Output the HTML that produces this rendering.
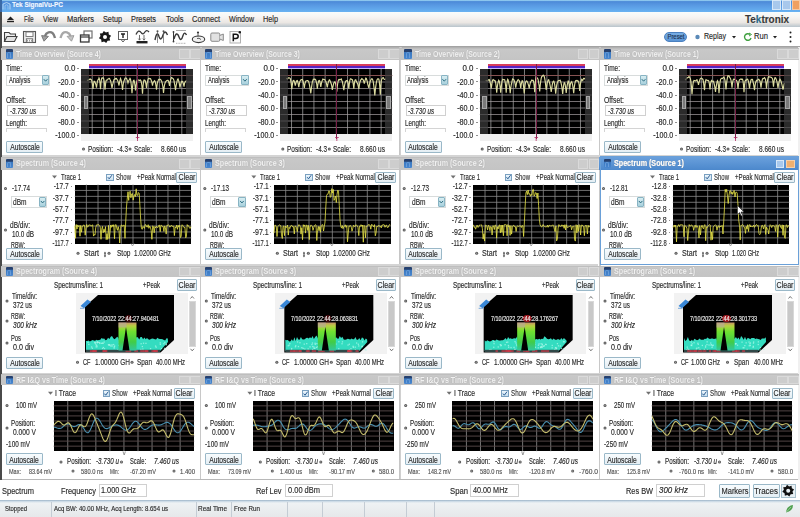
<!DOCTYPE html><html><head><meta charset="utf-8"><style>
html,body{margin:0;padding:0;}
body{width:800px;height:517px;overflow:hidden;position:relative;background:#fff;font-family:"Liberation Sans",sans-serif;}
.t{position:absolute;white-space:nowrap;-webkit-text-stroke:0.15px currentColor;}
.b{position:absolute;box-sizing:border-box;}
.i{font-style:italic;}
.bd{font-weight:bold;}
svg{position:absolute;left:0;top:0;}
#wrap{position:absolute;left:0;top:0;width:800px;height:517px;overflow:hidden;filter:blur(0.4px);}
</style></head><body><div id="wrap">
<div class="b" style="left:0.00px;top:0.00px;width:800.00px;height:11.60px;background:linear-gradient(#a8e0f8 0,#4c8ad8 1.6px,#5898e2 5px,#68b2f2 100%);"></div>
<div class="b" style="left:0.00px;top:0.00px;width:2.00px;height:12.00px;background:#3a6aa8;"></div>
<svg width="800" height="517"><path d="M3 9.5 V4 Q6.5 1 10 4 V9.5" fill="none" stroke="#c8e4f8" stroke-width="1" opacity="0.8"/><path d="M5 9.5 V5.5 Q6.5 4 8 5.5 V9.5" fill="none" stroke="#c8e4f8" stroke-width="0.8" opacity="0.6"/></svg>
<div class="t bd" style="left:12.00px;transform-origin:0 50%;top:-0.40px;font-size:8px;line-height:10.40px;color:#f4f8ff;transform:scaleX(0.808);">Tek SignalVu-PC</div>
<div class="b" style="left:772.00px;top:0.00px;width:9.00px;height:10.00px;background:#a8c8ec;border:1px solid #d8e8f8;"></div>
<div class="b" style="left:782.00px;top:0.00px;width:9.00px;height:10.00px;background:#a8c8ec;border:1px solid #d8e8f8;"></div>
<div class="b" style="left:792.00px;top:0.00px;width:8.00px;height:10.00px;background:#f0a060;border:1px solid #f8c8a0;"></div>
<div class="b" style="left:0.00px;top:11.60px;width:800.00px;height:15.90px;background:linear-gradient(#f8fcfc 0,#f6f4f2 35%,#ebe7e3 70%,#b8c4cc 100%);"></div>
<div class="b" style="left:0.00px;top:12.00px;width:2.00px;height:35.00px;background:#c8d0d8;"></div>
<svg width="800" height="517" style="position:absolute;left:0;top:0">
<path d="M7 20 L10.5 16.5 L14 20 Z" fill="#202020"/><rect x="7" y="20.8" width="7" height="1.4" fill="#202020"/>
</svg>
<div class="t " style="left:24.00px;transform-origin:0 50%;top:13.97px;font-size:8.5px;line-height:11.05px;color:#2a2a2a;transform:scaleX(0.708);">File</div>
<div class="t " style="left:43.00px;transform-origin:0 50%;top:13.97px;font-size:8.5px;line-height:11.05px;color:#2a2a2a;transform:scaleX(0.821);">View</div>
<div class="t " style="left:67.00px;transform-origin:0 50%;top:13.97px;font-size:8.5px;line-height:11.05px;color:#2a2a2a;transform:scaleX(0.879);">Markers</div>
<div class="t " style="left:103.00px;transform-origin:0 50%;top:13.97px;font-size:8.5px;line-height:11.05px;color:#2a2a2a;transform:scaleX(0.855);">Setup</div>
<div class="t " style="left:131.00px;transform-origin:0 50%;top:13.97px;font-size:8.5px;line-height:11.05px;color:#2a2a2a;transform:scaleX(0.867);">Presets</div>
<div class="t " style="left:165.50px;transform-origin:0 50%;top:13.97px;font-size:8.5px;line-height:11.05px;color:#2a2a2a;transform:scaleX(0.882);">Tools</div>
<div class="t " style="left:192.00px;transform-origin:0 50%;top:13.97px;font-size:8.5px;line-height:11.05px;color:#2a2a2a;transform:scaleX(0.884);">Connect</div>
<div class="t " style="left:228.50px;transform-origin:0 50%;top:13.97px;font-size:8.5px;line-height:11.05px;color:#2a2a2a;transform:scaleX(0.827);">Window</div>
<div class="t " style="left:263.00px;transform-origin:0 50%;top:13.97px;font-size:8.5px;line-height:11.05px;color:#2a2a2a;transform:scaleX(0.858);">Help</div>
<div class="t bd" style="left:745.00px;transform-origin:0 50%;top:13.30px;font-size:10px;line-height:13.00px;color:#3a3a3a;transform:scaleX(0.994);">Te<span style="color:#2a6a8a">k</span>tronix</div>
<div class="b" style="left:0.00px;top:27.00px;width:800.00px;height:19.00px;background:#ffffff;"></div>
<div class="b" style="left:0.00px;top:46.00px;width:800.00px;height:2.00px;background:linear-gradient(#9c9c9c,#b8b8b8);"></div>
<svg width="800" height="517" style="position:absolute;left:0;top:0" fill="none" stroke="#383838">
<path d="M4.5 41.5 V32.5 H9 L10.5 34 H15.5 V36" fill="#f0f0f0" stroke="#404040" stroke-width="1.1"/><path d="M4.5 41.5 L7 36.5 H17 L14.5 41.5 Z" fill="#e4e4e4" stroke="#404040" stroke-width="1.1"/>
<rect x="23.5" y="31.5" width="12" height="11" fill="#ececec" stroke="#585858" stroke-width="1.1"/><rect x="26" y="32" width="7" height="4.5" fill="#fff" stroke="#707070" stroke-width="0.9"/><rect x="26.3" y="38.8" width="6.4" height="3.5" fill="#fff" stroke="#585858" stroke-width="0.8"/><path d="M27.5 39.8 V41.5 M29.5 39.8 V41.5 M31.5 39.8 V41.5" stroke="#585858" stroke-width="0.6"/>
<path d="M55 38 Q53.5 31 48.5 32.3 Q46 33 45 36" stroke="#7e7e7e" stroke-width="2.4"/><path d="M41.6 35.6 L48.4 36.4 L44 41.2 Z" fill="#a0a0a0" stroke="#707070" stroke-width="0.9"/>
<path d="M60.5 38 Q62 31 67 32.3 Q69.5 33 70.5 36" stroke="#a8a8a8" stroke-width="2.4"/><path d="M73.9 35.6 L67.1 36.4 L71.5 41.2 Z" fill="#c4c4c4" stroke="#989898" stroke-width="0.9"/>
<rect x="84" y="31" width="8" height="7" stroke="#707070" stroke-width="1.2"/><rect x="80.5" y="35" width="8.5" height="7" fill="#fff" stroke-width="1.3"/><line x1="80.5" y1="37" x2="89" y2="37" stroke-width="1.2"/>
<polygon points="111.08,35.79 109.51,37.90 110.16,40.44 107.56,40.82 106.21,43.08 104.10,41.51 101.56,42.16 101.18,39.56 98.92,38.21 100.49,36.10 99.84,33.56 102.44,33.18 103.79,30.92 105.90,32.49 108.44,31.84 108.82,34.44" fill="#181818" stroke="none"/><circle cx="105" cy="37" r="2" fill="#fff" stroke="none"/>
<rect x="118.5" y="31.5" width="9" height="8" stroke="#606060" stroke-width="1"/><path d="M121 34 H125 M123 34 V38" stroke="#202020" stroke-width="1.4"/><path d="M121 39.5 L123 42 L125 39.5" stroke="#606060" stroke-width="1"/>
<path d="M136 34.5 Q138.5 28.5 141.5 33 Q143 35 144.5 32.5 Q146.5 29 149 32" stroke-width="1.3"/><path d="M139.5 35 V40 M144 35 V40" stroke="#606060" stroke-width="0.9"/><path d="M138.3 38.6 L139.5 40.2 L140.7 38.6 M142.8 38.6 L144 40.2 L145.2 38.6" stroke="#606060" stroke-width="0.8"/><rect x="136.5" y="41" width="11" height="2.4" fill="#202020" stroke="none"/>
<path d="M155 40 Q157 30 159 36.5 Q161 42 163 35 Q165 29 167.5 35" stroke-width="1.4"/><path d="M157.5 31.5 V43 M163.5 31.5 V43" stroke="#606060" stroke-width="0.7"/><circle cx="157.5" cy="31.3" r="1" fill="#505050" stroke="none"/><circle cx="163.5" cy="31.3" r="1" fill="#505050" stroke="none"/>
<path d="M174 39 Q176.5 30 179 37 Q181 42.5 183 35.5 Q184.5 31 186.5 35" stroke-width="1.4"/><path d="M173.5 32 V41.5" stroke-width="1"/><circle cx="173.5" cy="32" r="0.9" fill="#383838" stroke="none"/><circle cx="173.5" cy="41.5" r="0.9" fill="#383838" stroke="none"/><path d="M176 30.5 H186" stroke="#a0a0a0" stroke-width="0.9"/><path d="M176 43.3 H186" stroke="#a0a0a0" stroke-width="0.8" stroke-dasharray="1 0.6"/>
<ellipse cx="198.5" cy="39.3" rx="6.2" ry="3.3" stroke-width="1.1" fill="#f0f0f0"/><circle cx="198" cy="32.6" r="1.1" fill="#383838" stroke="none"/><path d="M198 33.5 V36.5 M197 38.5 Q199 37.5 201 39.5" stroke-width="0.8"/>
<rect x="210.8" y="33" width="9" height="8.3" rx="1.2" fill="#e2e2e2" stroke="#8a8a8a" stroke-width="1"/><path d="M219.8 35.5 L223.3 34 V40.5 L219.8 39" fill="#e2e2e2" stroke="#8a8a8a" stroke-width="1"/>
<rect x="230" y="31.5" width="10.5" height="11.5" fill="#fafafa" stroke="#a8a8a8" stroke-width="0.9"/><path d="M233.3 41.3 V34.2 H235.8 Q238.2 34.2 238.2 36.3 Q238.2 38.4 235.8 38.4 H233.3" stroke="#101010" stroke-width="1.5" fill="none"/>
<circle cx="239.8" cy="32.3" r="1.2" fill="#181818" stroke="none"/>
</svg>
<div class="b" style="left:664.00px;top:31.50px;width:23.00px;height:10.00px;background:linear-gradient(#78aee4,#5a94d4);border-radius:5px;border:1px solid #4a80c0;"></div>
<div class="t " style="left:575.50px;width:200px;text-align:center;transform-origin:50% 50%;top:32.57px;font-size:6.5px;line-height:8.45px;color:#1a3050;transform:scaleX(0.904);">Preset</div>
<svg width="800" height="517" style="position:absolute;left:0;top:0">
<circle cx="697.5" cy="37" r="2.2" fill="#5a8ab8"/>
<path d="M732 36 L736 36 L734 38.5 Z" fill="#202020"/><path d="M773 36 L777 36 L775 38.5 Z" fill="#202020"/>
<path d="M750 34.5 A3.3 3.3 0 1 0 751 38" fill="none" stroke="#40a040" stroke-width="1.4"/><path d="M749 33 L751.5 34.5 L749 36" fill="none" stroke="#40a040" stroke-width="1"/>
<circle cx="790.5" cy="32.5" r="1" fill="#202020"/><circle cx="790.5" cy="37" r="1" fill="#202020"/><circle cx="790.5" cy="41.5" r="1" fill="#202020"/>
</svg>
<div class="t " style="left:704.00px;transform-origin:0 50%;top:30.95px;font-size:9px;line-height:11.70px;color:#2a2a2a;transform:scaleX(0.785);">Replay</div>
<div class="t " style="left:754.00px;transform-origin:0 50%;top:30.95px;font-size:9px;line-height:11.70px;color:#2a2a2a;transform:scaleX(0.848);">Run</div>
<div class="b" style="left:0.00px;top:12.00px;width:1.60px;height:468.00px;background:#4a4a4a;"></div>
<div class="b" style="left:1.60px;top:47.00px;width:1.00px;height:433.00px;background:#b0b0b0;"></div>
<div class="b" style="left:0.00px;top:480.00px;width:1.00px;height:37.00px;background:#a8a8a8;"></div>
<div class="b" style="left:798.00px;top:47.00px;width:2.00px;height:433.00px;background:#f0f0f0;"></div>
<div class="b" style="left:199.80px;top:47.00px;width:2.40px;height:433.00px;background:linear-gradient(90deg,#c0c0c0,#d0d0d0 50%,#c4c4c4);"></div>
<div class="b" style="left:399.30px;top:47.00px;width:2.40px;height:433.00px;background:linear-gradient(90deg,#c0c0c0,#d0d0d0 50%,#c4c4c4);"></div>
<div class="b" style="left:598.80px;top:47.00px;width:2.40px;height:433.00px;background:linear-gradient(90deg,#c0c0c0,#d0d0d0 50%,#c4c4c4);"></div>
<div class="b" style="left:2.00px;top:60.00px;width:198.00px;height:95.00px;background:#ffffff;"></div>
<div class="b" style="left:0.50px;top:47.50px;width:200.00px;height:12.50px;background:linear-gradient(#b4b4b4 0,#c8c8c8 1px,#c4c4c4 100%);"></div>
<div class="b" style="left:5.50px;top:49.30px;width:7.50px;height:9.40px;background:linear-gradient(#26406e 0,#26406e 25%,#3a78c0 35%,#4a88d0 100%);border-radius:1px;"></div>
<div class="b" style="left:7.10px;top:52.10px;width:4.3px;height:5.90px;border:1px solid #78a8e0;border-bottom:none;border-radius:2px 2px 0 0;opacity:0.7"></div>
<div class="t bd" style="left:16.00px;transform-origin:0 50%;top:48.90px;font-size:9px;line-height:11.70px;color:#f2f2f2;text-shadow:0 0 1px #808080;transform:scaleX(0.773);">Time Overview (Source 4)</div>
<div class="b" style="left:179.00px;top:49.00px;width:10.50px;height:10.00px;background:#cdcdcd;border:1px solid #dadada;"></div>
<div class="b" style="left:190.00px;top:49.00px;width:10.50px;height:10.00px;background:#cdcdcd;border:1px solid #dadada;"></div>
<div class="t " style="left:6.00px;transform-origin:0 50%;top:63.87px;font-size:8.2px;line-height:10.66px;color:#2a2a2a;transform:scaleX(0.793);">Time:</div>
<div class="b" style="left:6.00px;top:74.50px;width:44.00px;height:11.00px;background:#fff;border:1px solid #d8dcdc;"></div>
<div class="b" style="left:42.00px;top:75.30px;width:7.20px;height:9.40px;background:linear-gradient(#d8eef2,#a8d0dc);border:1px solid #88b4c4;border-radius:1px;"></div>
<svg width="800" height="517"><path d="M43.80 79.20 L45.60 81.20 L47.40 79.20" fill="none" stroke="#2a6a80" stroke-width="1"/></svg>
<div class="t " style="left:8.50px;transform-origin:0 50%;top:76.07px;font-size:8.2px;line-height:10.66px;color:#2a2a2a;transform:scaleX(0.705);">Analysis</div>
<div class="t " style="left:6.00px;transform-origin:0 50%;top:95.57px;font-size:8.2px;line-height:10.66px;color:#2a2a2a;transform:scaleX(0.834);">Offset:</div>
<div class="b" style="left:7.00px;top:104.80px;width:40.50px;height:11.40px;background:#fff;border:1px solid #d0d0d0;"></div>
<div class="t i" style="left:9.50px;transform-origin:0 50%;top:106.67px;font-size:8.2px;line-height:10.66px;color:#2a2a2a;transform:scaleX(0.762);">-3.730 us</div>
<div class="t " style="left:6.00px;transform-origin:0 50%;top:119.27px;font-size:8.2px;line-height:10.66px;color:#2a2a2a;transform:scaleX(0.768);">Length:</div>
<div class="b" style="left:6.00px;top:128.00px;width:41.00px;height:4.00px;background:#fff;border:1px solid #d4d4d4;border-bottom:none;"></div>
<div class="b" style="left:6.00px;top:140.50px;width:37.00px;height:12.00px;background:linear-gradient(#f8fcfe,#e4eef4);border:1px solid #9ab8c8;border-radius:1px;"></div>
<div class="t " style="left:-75.50px;width:200px;text-align:center;transform-origin:50% 50%;top:142.77px;font-size:8.2px;line-height:10.66px;color:#2a2a2a;transform:scaleX(0.820);">Autoscale</div>
<div class="t " style="right:725.00px;transform-origin:100% 50%;top:64.07px;font-size:8.2px;line-height:10.66px;color:#2a2a2a;transform:scaleX(0.966);">0.0</div>
<div class="b" style="left:77.00px;top:68.00px;width:2.00px;height:1.00px;background:#909090;"></div>
<div class="t " style="right:725.00px;transform-origin:100% 50%;top:77.52px;font-size:8.2px;line-height:10.66px;color:#2a2a2a;transform:scaleX(0.884);">-20.0</div>
<div class="b" style="left:77.00px;top:81.45px;width:2.00px;height:1.00px;background:#909090;"></div>
<div class="t " style="right:725.00px;transform-origin:100% 50%;top:90.97px;font-size:8.2px;line-height:10.66px;color:#2a2a2a;transform:scaleX(0.884);">-40.0</div>
<div class="b" style="left:77.00px;top:94.90px;width:2.00px;height:1.00px;background:#909090;"></div>
<div class="t " style="right:725.00px;transform-origin:100% 50%;top:104.42px;font-size:8.2px;line-height:10.66px;color:#2a2a2a;transform:scaleX(0.884);">-60.0</div>
<div class="b" style="left:77.00px;top:108.35px;width:2.00px;height:1.00px;background:#909090;"></div>
<div class="t " style="right:725.00px;transform-origin:100% 50%;top:117.87px;font-size:8.2px;line-height:10.66px;color:#2a2a2a;transform:scaleX(0.884);">-80.0</div>
<div class="b" style="left:77.00px;top:121.80px;width:2.00px;height:1.00px;background:#909090;"></div>
<div class="t " style="right:725.00px;transform-origin:100% 50%;top:131.32px;font-size:8.2px;line-height:10.66px;color:#2a2a2a;transform:scaleX(0.861);">-100.0</div>
<div class="b" style="left:77.00px;top:135.25px;width:2.00px;height:1.00px;background:#909090;"></div>
<div class="b" style="left:81.00px;top:69.00px;width:112.00px;height:65.00px;background:#000;"></div>
<div class="b" style="left:81.00px;top:134.00px;width:112.00px;height:7.00px;background:#f0f0f0;"></div>
<svg width="800" height="517"><line x1="92.20" y1="69" x2="92.20" y2="134" stroke="#b0b0b0" stroke-width="0.7"/><line x1="103.40" y1="69" x2="103.40" y2="134" stroke="#b0b0b0" stroke-width="0.7"/><line x1="114.60" y1="69" x2="114.60" y2="134" stroke="#b0b0b0" stroke-width="0.7"/><line x1="125.80" y1="69" x2="125.80" y2="134" stroke="#b0b0b0" stroke-width="0.7"/><line x1="137.00" y1="69" x2="137.00" y2="134" stroke="#b0b0b0" stroke-width="0.7"/><line x1="148.20" y1="69" x2="148.20" y2="134" stroke="#b0b0b0" stroke-width="0.7"/><line x1="159.40" y1="69" x2="159.40" y2="134" stroke="#b0b0b0" stroke-width="0.7"/><line x1="170.60" y1="69" x2="170.60" y2="134" stroke="#b0b0b0" stroke-width="0.7"/><line x1="181.80" y1="69" x2="181.80" y2="134" stroke="#b0b0b0" stroke-width="0.7"/><line x1="81" y1="75.50" x2="193" y2="75.50" stroke="#a8a0a4" stroke-width="0.7"/><line x1="81" y1="82.00" x2="193" y2="82.00" stroke="#a8a0a4" stroke-width="0.7"/><line x1="81" y1="88.50" x2="193" y2="88.50" stroke="#a8a0a4" stroke-width="0.7"/><line x1="81" y1="95.00" x2="193" y2="95.00" stroke="#a8a0a4" stroke-width="0.7"/><line x1="81" y1="101.50" x2="193" y2="101.50" stroke="#a8a0a4" stroke-width="0.7"/><line x1="81" y1="108.00" x2="193" y2="108.00" stroke="#a8a0a4" stroke-width="0.7"/><line x1="81" y1="114.50" x2="193" y2="114.50" stroke="#a8a0a4" stroke-width="0.7"/><line x1="81" y1="121.00" x2="193" y2="121.00" stroke="#a8a0a4" stroke-width="0.7"/><line x1="81" y1="127.50" x2="193" y2="127.50" stroke="#a8a0a4" stroke-width="0.7"/><line x1="81" y1="75.5" x2="193" y2="75.5" stroke="#8a4a4a" stroke-width="0.8"/><clipPath id="c0_0"><rect x="81.0" y="69" width="112.0" height="65"/></clipPath><polyline clip-path="url(#c0_0)" points="87.0,80.1 87.5,80.4 88.0,80.4 88.5,79.7 89.0,79.6 89.5,79.2 90.0,79.5 90.5,79.1 91.0,79.6 91.5,79.9 92.0,81.9 92.5,84.6 93.0,89.0 93.5,84.5 94.0,81.3 94.5,81.3 95.0,82.1 95.5,83.4 96.0,85.2 96.5,87.6 97.0,84.0 97.5,81.1 98.0,79.8 98.5,79.6 99.0,77.9 99.5,79.1 100.0,83.1 100.5,89.2 101.0,82.9 101.5,79.0 102.0,77.9 102.5,77.9 103.0,78.2 103.5,78.0 104.0,80.0 104.5,84.1 105.0,89.8 105.5,84.5 106.0,81.0 106.5,80.0 107.0,80.0 107.5,79.9 108.0,78.9 108.5,78.7 109.0,78.4 109.5,78.5 110.0,79.6 110.5,80.5 111.0,82.3 111.5,85.3 112.0,87.8 112.5,85.1 113.0,83.3 113.5,81.3 114.0,79.6 114.5,79.1 115.0,79.3 115.5,78.5 116.0,78.6 116.5,78.5 117.0,79.7 117.5,80.0 118.0,81.6 118.5,83.3 119.0,85.5 119.5,82.5 120.0,80.1 120.5,78.5 121.0,79.8 121.5,81.6 122.0,85.3 122.5,90.0 123.0,86.0 123.5,82.7 124.0,81.0 124.5,79.6 125.0,78.3 125.5,78.1 126.0,78.0 126.5,78.4 127.0,79.7 127.5,81.0 128.0,82.9 128.5,81.2 129.0,80.2 129.5,79.5 130.0,78.5 130.5,79.3 131.0,82.4 131.5,87.3 132.0,93.1 132.5,87.4 133.0,83.4 133.5,80.4 134.0,80.2 134.5,82.1 135.0,85.3 135.5,90.4 136.0,85.9 136.5,83.0 137.0,80.9 137.5,79.8 138.0,79.8 138.5,80.1 139.0,80.3 139.5,80.3 140.0,80.1 140.5,79.9 141.0,80.9 141.5,83.0 142.0,86.6 142.5,93.6 143.0,86.3 143.5,82.2 144.0,80.0 144.5,80.0 145.0,80.3 145.5,81.7 146.0,84.3 146.5,87.9 147.0,83.7 147.5,81.9 148.0,79.5 148.5,78.4 149.0,78.3 149.5,78.7 150.0,78.8 150.5,78.7 151.0,79.8 151.5,81.0 152.0,82.8 152.5,85.7 153.0,82.9 153.5,82.0 154.0,81.3 154.5,80.7 155.0,81.3 155.5,82.9 156.0,85.8 156.5,89.7 157.0,85.4 157.5,82.2 158.0,81.0 158.5,79.6 159.0,79.2 159.5,79.8 160.0,79.2 160.5,79.5 161.0,80.0 161.5,81.0 162.0,82.4 162.5,84.5 163.0,87.4 163.5,93.0 164.0,88.2 164.5,85.1 165.0,83.2 165.5,81.9 166.0,81.4 166.5,80.7 167.0,80.5 167.5,80.4 168.0,80.3 168.5,81.1 169.0,83.0 169.5,85.8 170.0,82.6 170.5,80.4 171.0,78.6 171.5,77.6 172.0,77.8 172.5,78.2 173.0,78.4 173.5,79.2 174.0,80.6 174.5,83.7 175.0,86.5 175.5,90.1 176.0,86.2 176.5,83.8 177.0,81.5 177.5,79.4 178.0,78.8 178.5,80.2 179.0,82.0 179.5,84.6 180.0,87.6 180.5,84.9 181.0,83.2 181.5,81.9 182.0,81.3 182.5,81.5 183.0,82.6 183.5,84.2 184.0,86.6 184.5,83.4 185.0,82.1 185.5,81.7 186.0,81.0 186.5,80.4" fill="none" stroke="#dcdca0" stroke-width="1.15"/></svg>
<div class="b" style="left:81.00px;top:69.00px;width:8.00px;height:65.00px;background:rgba(60,60,60,0.72);"></div>
<div class="b" style="left:186.00px;top:69.00px;width:7.00px;height:65.00px;background:rgba(60,60,60,0.72);"></div>
<div class="b" style="left:83.50px;top:96.00px;width:4.50px;height:13.00px;background:#7a7a7a;border:1px solid #a8a8a8;"></div>
<div class="b" style="left:187.00px;top:96.00px;width:4.50px;height:13.00px;background:#7a7a7a;border:1px solid #a8a8a8;"></div>
<div class="b" style="left:89.00px;top:63.80px;width:97.00px;height:2.20px;background:#d83c5c;"></div>
<div class="b" style="left:89.00px;top:66.00px;width:97.00px;height:1.80px;background:#5424c4;"></div>
<div class="b" style="left:89.00px;top:67.80px;width:97.00px;height:1.20px;background:#c8b8ff;"></div>
<div class="b" style="left:137.00px;top:64.00px;width:1.00px;height:75.00px;background:#7a2048;"></div>
<svg width="800" height="517"><path d="M135.8 137.5 H139.4 M137.5 137.5 V141" stroke="#b02a62" stroke-width="0.8" fill="none"/></svg>
<div class="t " style="left:88.00px;transform-origin:0 50%;top:144.57px;font-size:8.2px;line-height:10.66px;color:#2a2a2a;transform:scaleX(0.796);">Position:</div>
<div class="t " style="left:117.00px;transform-origin:0 50%;top:144.57px;font-size:8.2px;line-height:10.66px;color:#2a2a2a;transform:scaleX(0.780);">-4.3</div>
<div class="t " style="left:134.00px;transform-origin:0 50%;top:144.57px;font-size:8.2px;line-height:10.66px;color:#2a2a2a;transform:scaleX(0.791);">Scale:</div>
<div class="t " style="left:161.00px;transform-origin:0 50%;top:144.57px;font-size:8.2px;line-height:10.66px;color:#2a2a2a;transform:scaleX(0.796);">8.660 us</div>
<div class="b" style="left:201.33px;top:60.00px;width:198.00px;height:95.00px;background:#ffffff;"></div>
<div class="b" style="left:199.83px;top:47.50px;width:200.00px;height:12.50px;background:linear-gradient(#b4b4b4 0,#c8c8c8 1px,#c4c4c4 100%);"></div>
<div class="b" style="left:204.83px;top:49.30px;width:7.50px;height:9.40px;background:linear-gradient(#26406e 0,#26406e 25%,#3a78c0 35%,#4a88d0 100%);border-radius:1px;"></div>
<div class="b" style="left:206.43px;top:52.10px;width:4.3px;height:5.90px;border:1px solid #78a8e0;border-bottom:none;border-radius:2px 2px 0 0;opacity:0.7"></div>
<div class="t bd" style="left:215.33px;transform-origin:0 50%;top:48.90px;font-size:9px;line-height:11.70px;color:#f2f2f2;text-shadow:0 0 1px #808080;transform:scaleX(0.773);">Time Overview (Source 3)</div>
<div class="b" style="left:378.33px;top:49.00px;width:10.50px;height:10.00px;background:#cdcdcd;border:1px solid #dadada;"></div>
<div class="b" style="left:389.33px;top:49.00px;width:10.50px;height:10.00px;background:#cdcdcd;border:1px solid #dadada;"></div>
<div class="t " style="left:205.33px;transform-origin:0 50%;top:63.87px;font-size:8.2px;line-height:10.66px;color:#2a2a2a;transform:scaleX(0.793);">Time:</div>
<div class="b" style="left:205.33px;top:74.50px;width:44.00px;height:11.00px;background:#fff;border:1px solid #d8dcdc;"></div>
<div class="b" style="left:241.33px;top:75.30px;width:7.20px;height:9.40px;background:linear-gradient(#d8eef2,#a8d0dc);border:1px solid #88b4c4;border-radius:1px;"></div>
<svg width="800" height="517"><path d="M243.13 79.20 L244.93 81.20 L246.73 79.20" fill="none" stroke="#2a6a80" stroke-width="1"/></svg>
<div class="t " style="left:207.83px;transform-origin:0 50%;top:76.07px;font-size:8.2px;line-height:10.66px;color:#2a2a2a;transform:scaleX(0.705);">Analysis</div>
<div class="t " style="left:205.33px;transform-origin:0 50%;top:95.57px;font-size:8.2px;line-height:10.66px;color:#2a2a2a;transform:scaleX(0.834);">Offset:</div>
<div class="b" style="left:206.33px;top:104.80px;width:40.50px;height:11.40px;background:#fff;border:1px solid #d0d0d0;"></div>
<div class="t i" style="left:208.83px;transform-origin:0 50%;top:106.67px;font-size:8.2px;line-height:10.66px;color:#2a2a2a;transform:scaleX(0.762);">-3.730 us</div>
<div class="t " style="left:205.33px;transform-origin:0 50%;top:119.27px;font-size:8.2px;line-height:10.66px;color:#2a2a2a;transform:scaleX(0.768);">Length:</div>
<div class="b" style="left:205.33px;top:128.00px;width:41.00px;height:4.00px;background:#fff;border:1px solid #d4d4d4;border-bottom:none;"></div>
<div class="b" style="left:205.33px;top:140.50px;width:37.00px;height:12.00px;background:linear-gradient(#f8fcfe,#e4eef4);border:1px solid #9ab8c8;border-radius:1px;"></div>
<div class="t " style="left:123.83px;width:200px;text-align:center;transform-origin:50% 50%;top:142.77px;font-size:8.2px;line-height:10.66px;color:#2a2a2a;transform:scaleX(0.820);">Autoscale</div>
<div class="t " style="right:525.67px;transform-origin:100% 50%;top:64.07px;font-size:8.2px;line-height:10.66px;color:#2a2a2a;transform:scaleX(0.966);">0.0</div>
<div class="b" style="left:276.33px;top:68.00px;width:2.00px;height:1.00px;background:#909090;"></div>
<div class="t " style="right:525.67px;transform-origin:100% 50%;top:77.52px;font-size:8.2px;line-height:10.66px;color:#2a2a2a;transform:scaleX(0.884);">-20.0</div>
<div class="b" style="left:276.33px;top:81.45px;width:2.00px;height:1.00px;background:#909090;"></div>
<div class="t " style="right:525.67px;transform-origin:100% 50%;top:90.97px;font-size:8.2px;line-height:10.66px;color:#2a2a2a;transform:scaleX(0.884);">-40.0</div>
<div class="b" style="left:276.33px;top:94.90px;width:2.00px;height:1.00px;background:#909090;"></div>
<div class="t " style="right:525.67px;transform-origin:100% 50%;top:104.42px;font-size:8.2px;line-height:10.66px;color:#2a2a2a;transform:scaleX(0.884);">-60.0</div>
<div class="b" style="left:276.33px;top:108.35px;width:2.00px;height:1.00px;background:#909090;"></div>
<div class="t " style="right:525.67px;transform-origin:100% 50%;top:117.87px;font-size:8.2px;line-height:10.66px;color:#2a2a2a;transform:scaleX(0.884);">-80.0</div>
<div class="b" style="left:276.33px;top:121.80px;width:2.00px;height:1.00px;background:#909090;"></div>
<div class="t " style="right:525.67px;transform-origin:100% 50%;top:131.32px;font-size:8.2px;line-height:10.66px;color:#2a2a2a;transform:scaleX(0.861);">-100.0</div>
<div class="b" style="left:276.33px;top:135.25px;width:2.00px;height:1.00px;background:#909090;"></div>
<div class="b" style="left:280.33px;top:69.00px;width:112.00px;height:65.00px;background:#000;"></div>
<div class="b" style="left:280.33px;top:134.00px;width:112.00px;height:7.00px;background:#f0f0f0;"></div>
<svg width="800" height="517"><line x1="291.53" y1="69" x2="291.53" y2="134" stroke="#b0b0b0" stroke-width="0.7"/><line x1="302.73" y1="69" x2="302.73" y2="134" stroke="#b0b0b0" stroke-width="0.7"/><line x1="313.93" y1="69" x2="313.93" y2="134" stroke="#b0b0b0" stroke-width="0.7"/><line x1="325.13" y1="69" x2="325.13" y2="134" stroke="#b0b0b0" stroke-width="0.7"/><line x1="336.33" y1="69" x2="336.33" y2="134" stroke="#b0b0b0" stroke-width="0.7"/><line x1="347.53" y1="69" x2="347.53" y2="134" stroke="#b0b0b0" stroke-width="0.7"/><line x1="358.73" y1="69" x2="358.73" y2="134" stroke="#b0b0b0" stroke-width="0.7"/><line x1="369.93" y1="69" x2="369.93" y2="134" stroke="#b0b0b0" stroke-width="0.7"/><line x1="381.13" y1="69" x2="381.13" y2="134" stroke="#b0b0b0" stroke-width="0.7"/><line x1="280.33000000000004" y1="75.50" x2="392.33000000000004" y2="75.50" stroke="#a8a0a4" stroke-width="0.7"/><line x1="280.33000000000004" y1="82.00" x2="392.33000000000004" y2="82.00" stroke="#a8a0a4" stroke-width="0.7"/><line x1="280.33000000000004" y1="88.50" x2="392.33000000000004" y2="88.50" stroke="#a8a0a4" stroke-width="0.7"/><line x1="280.33000000000004" y1="95.00" x2="392.33000000000004" y2="95.00" stroke="#a8a0a4" stroke-width="0.7"/><line x1="280.33000000000004" y1="101.50" x2="392.33000000000004" y2="101.50" stroke="#a8a0a4" stroke-width="0.7"/><line x1="280.33000000000004" y1="108.00" x2="392.33000000000004" y2="108.00" stroke="#a8a0a4" stroke-width="0.7"/><line x1="280.33000000000004" y1="114.50" x2="392.33000000000004" y2="114.50" stroke="#a8a0a4" stroke-width="0.7"/><line x1="280.33000000000004" y1="121.00" x2="392.33000000000004" y2="121.00" stroke="#a8a0a4" stroke-width="0.7"/><line x1="280.33000000000004" y1="127.50" x2="392.33000000000004" y2="127.50" stroke="#a8a0a4" stroke-width="0.7"/><line x1="280.33000000000004" y1="75.5" x2="392.33000000000004" y2="75.5" stroke="#8a4a4a" stroke-width="0.8"/><clipPath id="c0_1"><rect x="280.3" y="69" width="112.0" height="65"/></clipPath><polyline clip-path="url(#c0_1)" points="286.3,78.8 286.8,78.5 287.3,79.2 287.8,78.7 288.3,77.8 288.8,77.9 289.3,77.8 289.8,78.1 290.3,78.6 290.8,81.0 291.3,84.1 291.8,89.3 292.3,85.1 292.8,82.0 293.3,80.6 293.8,80.5 294.3,81.2 294.8,83.3 295.3,85.6 295.8,83.6 296.3,81.6 296.8,80.8 297.3,80.6 297.8,82.0 298.3,84.3 298.8,87.2 299.3,84.2 299.8,81.7 300.3,80.8 300.8,80.0 301.3,79.6 301.8,79.9 302.3,79.5 302.8,80.5 303.3,82.5 303.8,84.8 304.3,87.8 304.8,84.3 305.3,82.5 305.8,81.1 306.3,80.8 306.8,80.7 307.3,80.6 307.8,80.6 308.3,81.0 308.8,82.1 309.3,84.1 309.8,86.9 310.3,89.9 310.8,93.3 311.3,89.0 311.8,85.4 312.3,82.1 312.8,80.6 313.3,79.3 313.8,79.7 314.3,79.5 314.8,79.0 315.3,79.3 315.8,80.1 316.3,82.0 316.8,84.5 317.3,88.6 317.8,84.8 318.3,82.5 318.8,80.7 319.3,80.5 319.8,81.3 320.3,84.1 320.8,86.9 321.3,83.8 321.8,81.7 322.3,80.4 322.8,79.1 323.3,79.5 323.8,79.3 324.3,79.5 324.8,79.5 325.3,80.8 325.8,81.4 326.3,82.8 326.8,85.1 327.3,87.4 327.8,84.4 328.3,82.2 328.8,80.9 329.3,79.8 329.8,80.2 330.3,81.4 330.8,82.7 331.3,84.0 331.8,86.3 332.3,89.8 332.8,87.4 333.3,85.1 333.8,83.0 334.3,82.3 334.8,81.9 335.3,82.6 335.8,84.6 336.3,87.4 336.8,91.8 337.3,86.2 337.8,82.8 338.3,80.7 338.8,79.5 339.3,79.4 339.8,80.0 340.3,79.5 340.8,79.4 341.3,79.0 341.8,80.5 342.3,81.5 342.8,84.1 343.3,87.0 343.8,90.2 344.3,86.9 344.8,84.1 345.3,82.3 345.8,81.1 346.3,80.7 346.8,80.8 347.3,80.5 347.8,82.0 348.3,84.5 348.8,88.6 349.3,83.8 349.8,80.6 350.3,79.1 350.8,78.7 351.3,79.2 351.8,79.7 352.3,79.6 352.8,81.4 353.3,84.3 353.8,88.6 354.3,83.6 354.8,80.9 355.3,79.7 355.8,79.7 356.3,81.3 356.8,82.2 357.3,83.2 357.8,84.3 358.3,86.3 358.8,88.8 359.3,85.7 359.8,82.6 360.3,81.2 360.8,79.7 361.3,79.5 361.8,78.6 362.3,79.0 362.8,79.4 363.3,80.0 363.8,81.6 364.3,83.5 364.8,81.3 365.3,79.8 365.8,78.2 366.3,78.5 366.8,80.0 367.3,81.6 367.8,84.3 368.3,86.1 368.8,87.8 369.3,85.3 369.8,82.8 370.3,81.3 370.8,80.0 371.3,79.3 371.8,78.7 372.3,78.9 372.8,80.1 373.3,82.1 373.8,85.8 374.3,90.0 374.8,95.5 375.3,90.1 375.8,86.1 376.3,83.0 376.8,80.6 377.3,79.4 377.8,78.7 378.3,78.7 378.8,79.1 379.3,81.6 379.8,86.9 380.3,94.6 380.8,85.9 381.3,80.9 381.8,79.0 382.3,78.1 382.8,77.9 383.3,77.7 383.8,78.8 384.3,79.4 384.8,79.2 385.3,79.0 385.8,79.2" fill="none" stroke="#dcdca0" stroke-width="1.15"/></svg>
<div class="b" style="left:280.33px;top:69.00px;width:8.00px;height:65.00px;background:rgba(60,60,60,0.72);"></div>
<div class="b" style="left:385.33px;top:69.00px;width:7.00px;height:65.00px;background:rgba(60,60,60,0.72);"></div>
<div class="b" style="left:282.83px;top:96.00px;width:4.50px;height:13.00px;background:#7a7a7a;border:1px solid #a8a8a8;"></div>
<div class="b" style="left:386.33px;top:96.00px;width:4.50px;height:13.00px;background:#7a7a7a;border:1px solid #a8a8a8;"></div>
<div class="b" style="left:288.33px;top:63.80px;width:97.00px;height:2.20px;background:#d83c5c;"></div>
<div class="b" style="left:288.33px;top:66.00px;width:97.00px;height:1.80px;background:#5424c4;"></div>
<div class="b" style="left:288.33px;top:67.80px;width:97.00px;height:1.20px;background:#c8b8ff;"></div>
<div class="b" style="left:336.33px;top:64.00px;width:1.00px;height:75.00px;background:#7a2048;"></div>
<svg width="800" height="517"><path d="M335.13 137.5 H338.73 M336.83000000000004 137.5 V141" stroke="#b02a62" stroke-width="0.8" fill="none"/></svg>
<div class="t " style="left:287.33px;transform-origin:0 50%;top:144.57px;font-size:8.2px;line-height:10.66px;color:#2a2a2a;transform:scaleX(0.796);">Position:</div>
<div class="t " style="left:316.33px;transform-origin:0 50%;top:144.57px;font-size:8.2px;line-height:10.66px;color:#2a2a2a;transform:scaleX(0.780);">-4.3</div>
<div class="t " style="left:333.33px;transform-origin:0 50%;top:144.57px;font-size:8.2px;line-height:10.66px;color:#2a2a2a;transform:scaleX(0.791);">Scale:</div>
<div class="t " style="left:360.33px;transform-origin:0 50%;top:144.57px;font-size:8.2px;line-height:10.66px;color:#2a2a2a;transform:scaleX(0.796);">8.660 us</div>
<div class="b" style="left:400.67px;top:60.00px;width:198.00px;height:95.00px;background:#ffffff;"></div>
<div class="b" style="left:399.17px;top:47.50px;width:200.00px;height:12.50px;background:linear-gradient(#b4b4b4 0,#c8c8c8 1px,#c4c4c4 100%);"></div>
<div class="b" style="left:404.17px;top:49.30px;width:7.50px;height:9.40px;background:linear-gradient(#26406e 0,#26406e 25%,#3a78c0 35%,#4a88d0 100%);border-radius:1px;"></div>
<div class="b" style="left:405.77px;top:52.10px;width:4.3px;height:5.90px;border:1px solid #78a8e0;border-bottom:none;border-radius:2px 2px 0 0;opacity:0.7"></div>
<div class="t bd" style="left:414.67px;transform-origin:0 50%;top:48.90px;font-size:9px;line-height:11.70px;color:#f2f2f2;text-shadow:0 0 1px #808080;transform:scaleX(0.773);">Time Overview (Source 2)</div>
<div class="b" style="left:577.67px;top:49.00px;width:10.50px;height:10.00px;background:#cdcdcd;border:1px solid #dadada;"></div>
<div class="b" style="left:588.67px;top:49.00px;width:10.50px;height:10.00px;background:#cdcdcd;border:1px solid #dadada;"></div>
<div class="t " style="left:404.67px;transform-origin:0 50%;top:63.87px;font-size:8.2px;line-height:10.66px;color:#2a2a2a;transform:scaleX(0.793);">Time:</div>
<div class="b" style="left:404.67px;top:74.50px;width:44.00px;height:11.00px;background:#fff;border:1px solid #d8dcdc;"></div>
<div class="b" style="left:440.67px;top:75.30px;width:7.20px;height:9.40px;background:linear-gradient(#d8eef2,#a8d0dc);border:1px solid #88b4c4;border-radius:1px;"></div>
<svg width="800" height="517"><path d="M442.47 79.20 L444.27 81.20 L446.07 79.20" fill="none" stroke="#2a6a80" stroke-width="1"/></svg>
<div class="t " style="left:407.17px;transform-origin:0 50%;top:76.07px;font-size:8.2px;line-height:10.66px;color:#2a2a2a;transform:scaleX(0.705);">Analysis</div>
<div class="t " style="left:404.67px;transform-origin:0 50%;top:95.57px;font-size:8.2px;line-height:10.66px;color:#2a2a2a;transform:scaleX(0.834);">Offset:</div>
<div class="b" style="left:405.67px;top:104.80px;width:40.50px;height:11.40px;background:#fff;border:1px solid #d0d0d0;"></div>
<div class="t i" style="left:408.17px;transform-origin:0 50%;top:106.67px;font-size:8.2px;line-height:10.66px;color:#2a2a2a;transform:scaleX(0.762);">-3.730 us</div>
<div class="t " style="left:404.67px;transform-origin:0 50%;top:119.27px;font-size:8.2px;line-height:10.66px;color:#2a2a2a;transform:scaleX(0.768);">Length:</div>
<div class="b" style="left:404.67px;top:128.00px;width:41.00px;height:4.00px;background:#fff;border:1px solid #d4d4d4;border-bottom:none;"></div>
<div class="b" style="left:404.67px;top:140.50px;width:37.00px;height:12.00px;background:linear-gradient(#f8fcfe,#e4eef4);border:1px solid #9ab8c8;border-radius:1px;"></div>
<div class="t " style="left:323.17px;width:200px;text-align:center;transform-origin:50% 50%;top:142.77px;font-size:8.2px;line-height:10.66px;color:#2a2a2a;transform:scaleX(0.820);">Autoscale</div>
<div class="t " style="right:326.33px;transform-origin:100% 50%;top:64.07px;font-size:8.2px;line-height:10.66px;color:#2a2a2a;transform:scaleX(0.966);">0.0</div>
<div class="b" style="left:475.67px;top:68.00px;width:2.00px;height:1.00px;background:#909090;"></div>
<div class="t " style="right:326.33px;transform-origin:100% 50%;top:77.52px;font-size:8.2px;line-height:10.66px;color:#2a2a2a;transform:scaleX(0.884);">-20.0</div>
<div class="b" style="left:475.67px;top:81.45px;width:2.00px;height:1.00px;background:#909090;"></div>
<div class="t " style="right:326.33px;transform-origin:100% 50%;top:90.97px;font-size:8.2px;line-height:10.66px;color:#2a2a2a;transform:scaleX(0.884);">-40.0</div>
<div class="b" style="left:475.67px;top:94.90px;width:2.00px;height:1.00px;background:#909090;"></div>
<div class="t " style="right:326.33px;transform-origin:100% 50%;top:104.42px;font-size:8.2px;line-height:10.66px;color:#2a2a2a;transform:scaleX(0.884);">-60.0</div>
<div class="b" style="left:475.67px;top:108.35px;width:2.00px;height:1.00px;background:#909090;"></div>
<div class="t " style="right:326.33px;transform-origin:100% 50%;top:117.87px;font-size:8.2px;line-height:10.66px;color:#2a2a2a;transform:scaleX(0.884);">-80.0</div>
<div class="b" style="left:475.67px;top:121.80px;width:2.00px;height:1.00px;background:#909090;"></div>
<div class="t " style="right:326.33px;transform-origin:100% 50%;top:131.32px;font-size:8.2px;line-height:10.66px;color:#2a2a2a;transform:scaleX(0.861);">-100.0</div>
<div class="b" style="left:475.67px;top:135.25px;width:2.00px;height:1.00px;background:#909090;"></div>
<div class="b" style="left:479.67px;top:69.00px;width:112.00px;height:65.00px;background:#000;"></div>
<div class="b" style="left:479.67px;top:134.00px;width:112.00px;height:7.00px;background:#f0f0f0;"></div>
<svg width="800" height="517"><line x1="490.87" y1="69" x2="490.87" y2="134" stroke="#b0b0b0" stroke-width="0.7"/><line x1="502.07" y1="69" x2="502.07" y2="134" stroke="#b0b0b0" stroke-width="0.7"/><line x1="513.27" y1="69" x2="513.27" y2="134" stroke="#b0b0b0" stroke-width="0.7"/><line x1="524.47" y1="69" x2="524.47" y2="134" stroke="#b0b0b0" stroke-width="0.7"/><line x1="535.67" y1="69" x2="535.67" y2="134" stroke="#b0b0b0" stroke-width="0.7"/><line x1="546.87" y1="69" x2="546.87" y2="134" stroke="#b0b0b0" stroke-width="0.7"/><line x1="558.07" y1="69" x2="558.07" y2="134" stroke="#b0b0b0" stroke-width="0.7"/><line x1="569.27" y1="69" x2="569.27" y2="134" stroke="#b0b0b0" stroke-width="0.7"/><line x1="580.47" y1="69" x2="580.47" y2="134" stroke="#b0b0b0" stroke-width="0.7"/><line x1="479.67" y1="75.50" x2="591.6700000000001" y2="75.50" stroke="#a8a0a4" stroke-width="0.7"/><line x1="479.67" y1="82.00" x2="591.6700000000001" y2="82.00" stroke="#a8a0a4" stroke-width="0.7"/><line x1="479.67" y1="88.50" x2="591.6700000000001" y2="88.50" stroke="#a8a0a4" stroke-width="0.7"/><line x1="479.67" y1="95.00" x2="591.6700000000001" y2="95.00" stroke="#a8a0a4" stroke-width="0.7"/><line x1="479.67" y1="101.50" x2="591.6700000000001" y2="101.50" stroke="#a8a0a4" stroke-width="0.7"/><line x1="479.67" y1="108.00" x2="591.6700000000001" y2="108.00" stroke="#a8a0a4" stroke-width="0.7"/><line x1="479.67" y1="114.50" x2="591.6700000000001" y2="114.50" stroke="#a8a0a4" stroke-width="0.7"/><line x1="479.67" y1="121.00" x2="591.6700000000001" y2="121.00" stroke="#a8a0a4" stroke-width="0.7"/><line x1="479.67" y1="127.50" x2="591.6700000000001" y2="127.50" stroke="#a8a0a4" stroke-width="0.7"/><line x1="479.67" y1="75.5" x2="591.6700000000001" y2="75.5" stroke="#8a4a4a" stroke-width="0.8"/><clipPath id="c0_2"><rect x="479.7" y="69" width="112.0" height="65"/></clipPath><polyline clip-path="url(#c0_2)" points="485.7,80.1 486.2,80.5 486.7,80.7 487.2,81.1 487.7,80.6 488.2,80.3 488.7,79.8 489.2,79.5 489.7,80.8 490.2,82.6 490.7,84.9 491.2,88.4 491.7,85.1 492.2,81.9 492.7,80.1 493.2,79.6 493.7,80.1 494.2,80.6 494.7,80.4 495.2,80.8 495.7,82.8 496.2,87.0 496.7,92.6 497.2,87.6 497.7,84.0 498.2,81.9 498.7,80.3 499.2,80.9 499.7,83.3 500.2,87.4 500.7,92.6 501.2,87.6 501.7,83.0 502.2,80.6 502.7,79.2 503.2,79.4 503.7,79.7 504.2,79.6 504.7,79.9 505.2,82.3 505.7,86.1 506.2,92.6 506.7,85.4 507.2,81.2 507.7,79.4 508.2,80.1 508.7,82.6 509.2,85.1 509.7,88.0 510.2,93.1 510.7,88.3 511.2,85.0 511.7,82.8 512.2,80.5 512.7,78.9 513.2,79.3 513.7,79.5 514.2,80.4 514.7,82.0 515.2,84.1 515.7,87.7 516.2,85.0 516.7,82.2 517.2,81.3 517.7,80.4 518.2,79.7 518.7,80.1 519.2,80.5 519.7,81.8 520.2,84.0 520.7,88.1 521.2,84.5 521.7,82.1 522.2,80.7 522.7,81.0 523.2,83.6 523.7,87.6 524.2,93.5 524.7,88.1 525.2,84.4 525.7,81.9 526.2,80.9 526.7,80.8 527.2,81.5 527.7,82.6 528.2,84.2 528.7,85.7 529.2,88.3 529.7,85.7 530.2,83.3 530.7,81.8 531.2,81.0 531.7,80.1 532.2,80.4 532.7,80.4 533.2,80.4 533.7,82.1 534.2,85.6 534.7,92.3 535.2,84.5 535.7,79.5 536.2,77.3 536.7,77.6 537.2,77.9 537.7,78.6 538.2,79.9 538.7,83.4 539.2,86.0 539.7,91.4 540.2,85.4 540.7,81.4 541.2,78.3 541.7,76.5 542.2,76.2 542.7,75.8 543.2,75.2 543.7,75.7 544.2,76.3 544.7,78.4 545.2,81.3 545.7,85.5 546.2,90.0 546.7,86.6 547.2,83.2 547.7,81.3 548.2,79.9 548.7,79.7 549.2,81.7 549.7,83.5 550.2,86.0 550.7,88.5 551.2,91.8 551.7,88.9 552.2,85.1 552.7,82.7 553.2,81.3 553.7,81.0 554.2,82.2 554.7,84.7 555.2,88.5 555.7,93.6 556.2,88.9 556.7,85.1 557.2,83.0 557.7,81.7 558.2,80.7 558.7,80.6 559.2,80.5 559.7,80.4 560.2,80.2 560.7,81.6 561.2,83.6 561.7,85.9 562.2,89.7 562.7,94.0 563.2,88.9 563.7,84.8 564.2,82.6 564.7,82.7 565.2,84.8 565.7,88.8 566.2,93.0 566.7,88.8 567.2,85.2 567.7,82.8 568.2,81.1 568.7,81.8 569.2,84.6 569.7,89.1 570.2,85.2 570.7,82.9 571.2,82.3 571.7,81.7 572.2,83.2 572.7,85.3 573.2,88.9 573.7,93.3 574.2,88.0 574.7,84.5 575.2,82.0 575.7,80.6 576.2,80.4 576.7,80.8 577.2,81.0 577.7,80.6 578.2,81.0 578.7,82.2 579.2,85.1 579.7,90.9 580.2,85.7 580.7,82.4 581.2,80.8 581.7,79.3 582.2,79.8 582.7,80.4 583.2,79.2 583.7,78.3 584.2,78.3 584.7,78.9 585.2,79.2" fill="none" stroke="#dcdca0" stroke-width="1.15"/></svg>
<div class="b" style="left:479.67px;top:69.00px;width:8.00px;height:65.00px;background:rgba(60,60,60,0.72);"></div>
<div class="b" style="left:584.67px;top:69.00px;width:7.00px;height:65.00px;background:rgba(60,60,60,0.72);"></div>
<div class="b" style="left:482.17px;top:96.00px;width:4.50px;height:13.00px;background:#7a7a7a;border:1px solid #a8a8a8;"></div>
<div class="b" style="left:585.67px;top:96.00px;width:4.50px;height:13.00px;background:#7a7a7a;border:1px solid #a8a8a8;"></div>
<div class="b" style="left:487.67px;top:63.80px;width:97.00px;height:2.20px;background:#d83c5c;"></div>
<div class="b" style="left:487.67px;top:66.00px;width:97.00px;height:1.80px;background:#5424c4;"></div>
<div class="b" style="left:487.67px;top:67.80px;width:97.00px;height:1.20px;background:#c8b8ff;"></div>
<div class="b" style="left:535.67px;top:64.00px;width:1.00px;height:75.00px;background:#7a2048;"></div>
<svg width="800" height="517"><path d="M534.47 137.5 H538.07 M536.1700000000001 137.5 V141" stroke="#b02a62" stroke-width="0.8" fill="none"/></svg>
<div class="t " style="left:486.67px;transform-origin:0 50%;top:144.57px;font-size:8.2px;line-height:10.66px;color:#2a2a2a;transform:scaleX(0.796);">Position:</div>
<div class="t " style="left:515.67px;transform-origin:0 50%;top:144.57px;font-size:8.2px;line-height:10.66px;color:#2a2a2a;transform:scaleX(0.780);">-4.3</div>
<div class="t " style="left:532.67px;transform-origin:0 50%;top:144.57px;font-size:8.2px;line-height:10.66px;color:#2a2a2a;transform:scaleX(0.791);">Scale:</div>
<div class="t " style="left:559.67px;transform-origin:0 50%;top:144.57px;font-size:8.2px;line-height:10.66px;color:#2a2a2a;transform:scaleX(0.796);">8.660 us</div>
<div class="b" style="left:600.00px;top:60.00px;width:198.00px;height:95.00px;background:#ffffff;"></div>
<div class="b" style="left:598.50px;top:47.50px;width:200.00px;height:12.50px;background:linear-gradient(#b4b4b4 0,#c8c8c8 1px,#c4c4c4 100%);"></div>
<div class="b" style="left:603.50px;top:49.30px;width:7.50px;height:9.40px;background:linear-gradient(#26406e 0,#26406e 25%,#3a78c0 35%,#4a88d0 100%);border-radius:1px;"></div>
<div class="b" style="left:605.10px;top:52.10px;width:4.3px;height:5.90px;border:1px solid #78a8e0;border-bottom:none;border-radius:2px 2px 0 0;opacity:0.7"></div>
<div class="t bd" style="left:614.00px;transform-origin:0 50%;top:48.90px;font-size:9px;line-height:11.70px;color:#f2f2f2;text-shadow:0 0 1px #808080;transform:scaleX(0.773);">Time Overview (Source 1)</div>
<div class="b" style="left:777.00px;top:49.00px;width:10.50px;height:10.00px;background:#cdcdcd;border:1px solid #dadada;"></div>
<div class="b" style="left:788.00px;top:49.00px;width:10.50px;height:10.00px;background:#cdcdcd;border:1px solid #dadada;"></div>
<div class="t " style="left:604.00px;transform-origin:0 50%;top:63.87px;font-size:8.2px;line-height:10.66px;color:#2a2a2a;transform:scaleX(0.793);">Time:</div>
<div class="b" style="left:604.00px;top:74.50px;width:44.00px;height:11.00px;background:#fff;border:1px solid #d8dcdc;"></div>
<div class="b" style="left:640.00px;top:75.30px;width:7.20px;height:9.40px;background:linear-gradient(#d8eef2,#a8d0dc);border:1px solid #88b4c4;border-radius:1px;"></div>
<svg width="800" height="517"><path d="M641.80 79.20 L643.60 81.20 L645.40 79.20" fill="none" stroke="#2a6a80" stroke-width="1"/></svg>
<div class="t " style="left:606.50px;transform-origin:0 50%;top:76.07px;font-size:8.2px;line-height:10.66px;color:#2a2a2a;transform:scaleX(0.705);">Analysis</div>
<div class="t " style="left:604.00px;transform-origin:0 50%;top:95.57px;font-size:8.2px;line-height:10.66px;color:#2a2a2a;transform:scaleX(0.834);">Offset:</div>
<div class="b" style="left:605.00px;top:104.80px;width:40.50px;height:11.40px;background:#fff;border:1px solid #d0d0d0;"></div>
<div class="t i" style="left:607.50px;transform-origin:0 50%;top:106.67px;font-size:8.2px;line-height:10.66px;color:#2a2a2a;transform:scaleX(0.762);">-3.730 us</div>
<div class="t " style="left:604.00px;transform-origin:0 50%;top:119.27px;font-size:8.2px;line-height:10.66px;color:#2a2a2a;transform:scaleX(0.768);">Length:</div>
<div class="b" style="left:604.00px;top:128.00px;width:41.00px;height:4.00px;background:#fff;border:1px solid #d4d4d4;border-bottom:none;"></div>
<div class="b" style="left:604.00px;top:140.50px;width:37.00px;height:12.00px;background:linear-gradient(#f8fcfe,#e4eef4);border:1px solid #9ab8c8;border-radius:1px;"></div>
<div class="t " style="left:522.50px;width:200px;text-align:center;transform-origin:50% 50%;top:142.77px;font-size:8.2px;line-height:10.66px;color:#2a2a2a;transform:scaleX(0.820);">Autoscale</div>
<div class="t " style="right:127.00px;transform-origin:100% 50%;top:64.07px;font-size:8.2px;line-height:10.66px;color:#2a2a2a;transform:scaleX(0.966);">0.0</div>
<div class="b" style="left:675.00px;top:68.00px;width:2.00px;height:1.00px;background:#909090;"></div>
<div class="t " style="right:127.00px;transform-origin:100% 50%;top:77.52px;font-size:8.2px;line-height:10.66px;color:#2a2a2a;transform:scaleX(0.884);">-20.0</div>
<div class="b" style="left:675.00px;top:81.45px;width:2.00px;height:1.00px;background:#909090;"></div>
<div class="t " style="right:127.00px;transform-origin:100% 50%;top:90.97px;font-size:8.2px;line-height:10.66px;color:#2a2a2a;transform:scaleX(0.884);">-40.0</div>
<div class="b" style="left:675.00px;top:94.90px;width:2.00px;height:1.00px;background:#909090;"></div>
<div class="t " style="right:127.00px;transform-origin:100% 50%;top:104.42px;font-size:8.2px;line-height:10.66px;color:#2a2a2a;transform:scaleX(0.884);">-60.0</div>
<div class="b" style="left:675.00px;top:108.35px;width:2.00px;height:1.00px;background:#909090;"></div>
<div class="t " style="right:127.00px;transform-origin:100% 50%;top:117.87px;font-size:8.2px;line-height:10.66px;color:#2a2a2a;transform:scaleX(0.884);">-80.0</div>
<div class="b" style="left:675.00px;top:121.80px;width:2.00px;height:1.00px;background:#909090;"></div>
<div class="t " style="right:127.00px;transform-origin:100% 50%;top:131.32px;font-size:8.2px;line-height:10.66px;color:#2a2a2a;transform:scaleX(0.861);">-100.0</div>
<div class="b" style="left:675.00px;top:135.25px;width:2.00px;height:1.00px;background:#909090;"></div>
<div class="b" style="left:679.00px;top:69.00px;width:112.00px;height:65.00px;background:#000;"></div>
<div class="b" style="left:679.00px;top:134.00px;width:112.00px;height:7.00px;background:#f0f0f0;"></div>
<svg width="800" height="517"><line x1="690.20" y1="69" x2="690.20" y2="134" stroke="#b0b0b0" stroke-width="0.7"/><line x1="701.40" y1="69" x2="701.40" y2="134" stroke="#b0b0b0" stroke-width="0.7"/><line x1="712.60" y1="69" x2="712.60" y2="134" stroke="#b0b0b0" stroke-width="0.7"/><line x1="723.80" y1="69" x2="723.80" y2="134" stroke="#b0b0b0" stroke-width="0.7"/><line x1="735.00" y1="69" x2="735.00" y2="134" stroke="#b0b0b0" stroke-width="0.7"/><line x1="746.20" y1="69" x2="746.20" y2="134" stroke="#b0b0b0" stroke-width="0.7"/><line x1="757.40" y1="69" x2="757.40" y2="134" stroke="#b0b0b0" stroke-width="0.7"/><line x1="768.60" y1="69" x2="768.60" y2="134" stroke="#b0b0b0" stroke-width="0.7"/><line x1="779.80" y1="69" x2="779.80" y2="134" stroke="#b0b0b0" stroke-width="0.7"/><line x1="679" y1="75.50" x2="791" y2="75.50" stroke="#a8a0a4" stroke-width="0.7"/><line x1="679" y1="82.00" x2="791" y2="82.00" stroke="#a8a0a4" stroke-width="0.7"/><line x1="679" y1="88.50" x2="791" y2="88.50" stroke="#a8a0a4" stroke-width="0.7"/><line x1="679" y1="95.00" x2="791" y2="95.00" stroke="#a8a0a4" stroke-width="0.7"/><line x1="679" y1="101.50" x2="791" y2="101.50" stroke="#a8a0a4" stroke-width="0.7"/><line x1="679" y1="108.00" x2="791" y2="108.00" stroke="#a8a0a4" stroke-width="0.7"/><line x1="679" y1="114.50" x2="791" y2="114.50" stroke="#a8a0a4" stroke-width="0.7"/><line x1="679" y1="121.00" x2="791" y2="121.00" stroke="#a8a0a4" stroke-width="0.7"/><line x1="679" y1="127.50" x2="791" y2="127.50" stroke="#a8a0a4" stroke-width="0.7"/><line x1="679" y1="75.5" x2="791" y2="75.5" stroke="#8a4a4a" stroke-width="0.8"/><clipPath id="c0_3"><rect x="679.0" y="69" width="112.0" height="65"/></clipPath><polyline clip-path="url(#c0_3)" points="685.0,80.2 685.5,79.7 686.0,79.1 686.5,78.1 687.0,77.8 687.5,77.8 688.0,77.4 688.5,77.2 689.0,76.6 689.5,77.4 690.0,77.8 690.5,79.1 691.0,82.4 691.5,87.4 692.0,94.2 692.5,88.1 693.0,84.0 693.5,81.4 694.0,80.5 694.5,80.6 695.0,80.7 695.5,80.9 696.0,80.7 696.5,80.0 697.0,79.8 697.5,81.4 698.0,82.5 698.5,84.8 699.0,82.4 699.5,81.1 700.0,79.2 700.5,78.4 701.0,78.3 701.5,78.2 702.0,78.4 702.5,79.0 703.0,79.5 703.5,82.1 704.0,85.9 704.5,90.3 705.0,84.4 705.5,81.1 706.0,79.6 706.5,79.9 707.0,80.2 707.5,80.5 708.0,80.4 708.5,80.6 709.0,81.9 709.5,84.6 710.0,89.5 710.5,84.1 711.0,81.6 711.5,80.5 712.0,81.5 712.5,81.2 713.0,80.9 713.5,81.6 714.0,83.2 714.5,85.3 715.0,88.1 715.5,92.0 716.0,87.6 716.5,85.0 717.0,82.0 717.5,80.6 718.0,81.6 718.5,86.0 719.0,93.3 719.5,86.6 720.0,82.4 720.5,79.8 721.0,78.8 721.5,78.4 722.0,78.3 722.5,78.5 723.0,77.8 723.5,77.4 724.0,77.1 724.5,78.4 725.0,80.4 725.5,84.5 726.0,89.4 726.5,84.0 727.0,80.2 727.5,77.5 728.0,75.7 728.5,75.8 729.0,76.0 729.5,77.3 730.0,77.9 730.5,78.7 731.0,80.3 731.5,83.3 732.0,87.7 732.5,82.9 733.0,80.7 733.5,79.3 734.0,79.1 734.5,79.5 735.0,79.4 735.5,79.4 736.0,80.3 736.5,80.5 737.0,81.5 737.5,84.2 738.0,88.6 738.5,84.0 739.0,81.4 739.5,79.8 740.0,79.6 740.5,79.0 741.0,79.0 741.5,79.4 742.0,79.0 742.5,79.3 743.0,80.9 743.5,85.0 744.0,92.1 744.5,85.0 745.0,81.4 745.5,80.2 746.0,80.4 746.5,80.0 747.0,79.2 747.5,79.1 748.0,80.0 748.5,81.7 749.0,84.4 749.5,88.4 750.0,84.4 750.5,82.1 751.0,79.9 751.5,79.4 752.0,79.6 752.5,79.5 753.0,81.8 753.5,83.6 754.0,86.6 754.5,90.2 755.0,86.0 755.5,83.0 756.0,81.5 756.5,80.4 757.0,80.7 757.5,80.0 758.0,80.0 758.5,79.2 759.0,79.4 759.5,80.4 760.0,81.3 760.5,84.1 761.0,87.7 761.5,83.7 762.0,81.0 762.5,79.1 763.0,78.5 763.5,78.7 764.0,78.2 764.5,77.7 765.0,78.4 765.5,79.4 766.0,83.3 766.5,88.5 767.0,83.4 767.5,80.5 768.0,78.1 768.5,76.7 769.0,77.1 769.5,76.9 770.0,77.0 770.5,77.1 771.0,77.2 771.5,77.5 772.0,78.0 772.5,78.7 773.0,82.1 773.5,86.6 774.0,81.7 774.5,79.1 775.0,77.7 775.5,77.8 776.0,78.8 776.5,80.2 777.0,81.8 777.5,84.7 778.0,87.9 778.5,84.5 779.0,81.8 779.5,80.5 780.0,79.3 780.5,80.0 781.0,81.3 781.5,82.9 782.0,84.9 782.5,87.3 783.0,89.6 783.5,87.7 784.0,84.6 784.5,82.9" fill="none" stroke="#dcdca0" stroke-width="1.15"/></svg>
<div class="b" style="left:679.00px;top:69.00px;width:8.00px;height:65.00px;background:rgba(60,60,60,0.72);"></div>
<div class="b" style="left:784.00px;top:69.00px;width:7.00px;height:65.00px;background:rgba(60,60,60,0.72);"></div>
<div class="b" style="left:681.50px;top:96.00px;width:4.50px;height:13.00px;background:#7a7a7a;border:1px solid #a8a8a8;"></div>
<div class="b" style="left:785.00px;top:96.00px;width:4.50px;height:13.00px;background:#7a7a7a;border:1px solid #a8a8a8;"></div>
<div class="b" style="left:687.00px;top:63.80px;width:97.00px;height:2.20px;background:#d83c5c;"></div>
<div class="b" style="left:687.00px;top:66.00px;width:97.00px;height:1.80px;background:#5424c4;"></div>
<div class="b" style="left:687.00px;top:67.80px;width:97.00px;height:1.20px;background:#c8b8ff;"></div>
<div class="b" style="left:735.00px;top:64.00px;width:1.00px;height:75.00px;background:#7a2048;"></div>
<svg width="800" height="517"><path d="M733.8 137.5 H737.4 M735.5 137.5 V141" stroke="#b02a62" stroke-width="0.8" fill="none"/></svg>
<div class="t " style="left:686.00px;transform-origin:0 50%;top:144.57px;font-size:8.2px;line-height:10.66px;color:#2a2a2a;transform:scaleX(0.796);">Position:</div>
<div class="t " style="left:715.00px;transform-origin:0 50%;top:144.57px;font-size:8.2px;line-height:10.66px;color:#2a2a2a;transform:scaleX(0.780);">-4.3</div>
<div class="t " style="left:732.00px;transform-origin:0 50%;top:144.57px;font-size:8.2px;line-height:10.66px;color:#2a2a2a;transform:scaleX(0.791);">Scale:</div>
<div class="t " style="left:759.00px;transform-origin:0 50%;top:144.57px;font-size:8.2px;line-height:10.66px;color:#2a2a2a;transform:scaleX(0.796);">8.660 us</div>
<div class="b" style="left:2.00px;top:155.00px;width:796.00px;height:2.00px;background:#d4d4d4;"></div>
<div class="b" style="left:2.00px;top:169.50px;width:198.00px;height:94.00px;background:#ffffff;"></div>
<div class="b" style="left:0.50px;top:157.00px;width:200.00px;height:12.50px;background:linear-gradient(#b4b4b4 0,#c8c8c8 1px,#c4c4c4 100%);"></div>
<div class="b" style="left:5.50px;top:158.80px;width:7.50px;height:9.40px;background:linear-gradient(#26406e 0,#26406e 25%,#3a78c0 35%,#4a88d0 100%);border-radius:1px;"></div>
<div class="b" style="left:7.10px;top:161.60px;width:4.3px;height:5.90px;border:1px solid #78a8e0;border-bottom:none;border-radius:2px 2px 0 0;opacity:0.7"></div>
<div class="t bd" style="left:16.00px;transform-origin:0 50%;top:158.40px;font-size:9px;line-height:11.70px;color:#f2f2f2;text-shadow:0 0 1px #808080;transform:scaleX(0.795);">Spectrum (Source 4)</div>
<div class="b" style="left:179.00px;top:158.50px;width:10.50px;height:10.00px;background:#cdcdcd;border:1px solid #dadada;"></div>
<div class="b" style="left:190.00px;top:158.50px;width:10.50px;height:10.00px;background:#cdcdcd;border:1px solid #dadada;"></div>
<svg width="800" height="517"><path d="M52 175.5 L57 175.5 L54.5 178.5 Z" fill="#707070"/></svg>
<div class="t " style="left:61.00px;transform-origin:0 50%;top:173.07px;font-size:8.2px;line-height:10.66px;color:#2a2a2a;transform:scaleX(0.729);">Trace 1</div>
<div class="b" style="left:106.00px;top:173.60px;width:7.50px;height:7.20px;background:linear-gradient(#eef6fc,#c8e0f0);border:1px solid #7aa0c0;"></div>
<svg width="800" height="517"><path d="M107.80 177.20 L109.20 178.80 L111.90 175.20" fill="none" stroke="#2a5a90" stroke-width="1"/></svg>
<div class="t " style="left:116.00px;transform-origin:0 50%;top:172.87px;font-size:8.2px;line-height:10.66px;color:#383838;transform:scaleX(0.732);">Show</div>
<div class="t " style="left:137.00px;transform-origin:0 50%;top:173.07px;font-size:8.2px;line-height:10.66px;color:#2a2a2a;transform:scaleX(0.748);">+Peak Normal</div>
<div class="b" style="left:176.00px;top:171.80px;width:21.00px;height:10.80px;background:linear-gradient(#f8fcfe,#e4eef4);border:1px solid #9ab8c8;border-radius:1px;"></div>
<div class="t " style="left:86.50px;width:200px;text-align:center;transform-origin:50% 50%;top:173.47px;font-size:8.2px;line-height:10.66px;color:#2a2a2a;transform:scaleX(0.868);">Clear</div>
<div class="t " style="left:12.00px;transform-origin:0 50%;top:184.07px;font-size:8.2px;line-height:10.66px;color:#2a2a2a;transform:scaleX(0.775);">-17.74</div>
<div class="b" style="left:10.50px;top:196.00px;width:36.50px;height:11.50px;background:#fff;border:1px solid #d8dcdc;"></div>
<div class="b" style="left:39.00px;top:196.80px;width:7.20px;height:9.90px;background:linear-gradient(#d8eef2,#a8d0dc);border:1px solid #88b4c4;border-radius:1px;"></div>
<svg width="800" height="517"><path d="M40.80 200.95 L42.60 202.95 L44.40 200.95" fill="none" stroke="#2a6a80" stroke-width="1"/></svg>
<div class="t " style="left:13.00px;transform-origin:0 50%;top:197.82px;font-size:8.2px;line-height:10.66px;color:#2a2a2a;transform:scaleX(0.801);">dBm</div>
<div class="t " style="right:731.00px;transform-origin:100% 50%;top:182.17px;font-size:8.2px;line-height:10.66px;color:#2a2a2a;transform:scaleX(0.803);">-17.7</div>
<div class="b" style="left:70.50px;top:186.10px;width:1.50px;height:1.00px;background:#909090;"></div>
<div class="t " style="right:731.00px;transform-origin:100% 50%;top:193.55px;font-size:8.2px;line-height:10.66px;color:#2a2a2a;transform:scaleX(0.857);">-37.7</div>
<div class="b" style="left:70.50px;top:197.48px;width:1.50px;height:1.00px;background:#909090;"></div>
<div class="t " style="right:731.00px;transform-origin:100% 50%;top:204.93px;font-size:8.2px;line-height:10.66px;color:#2a2a2a;transform:scaleX(0.857);">-57.7</div>
<div class="b" style="left:70.50px;top:208.86px;width:1.50px;height:1.00px;background:#909090;"></div>
<div class="t " style="right:731.00px;transform-origin:100% 50%;top:216.31px;font-size:8.2px;line-height:10.66px;color:#2a2a2a;transform:scaleX(0.857);">-77.7</div>
<div class="b" style="left:70.50px;top:220.24px;width:1.50px;height:1.00px;background:#909090;"></div>
<div class="t " style="right:731.00px;transform-origin:100% 50%;top:227.69px;font-size:8.2px;line-height:10.66px;color:#2a2a2a;transform:scaleX(0.857);">-97.7</div>
<div class="b" style="left:70.50px;top:231.62px;width:1.50px;height:1.00px;background:#909090;"></div>
<div class="t " style="right:731.00px;transform-origin:100% 50%;top:239.07px;font-size:8.2px;line-height:10.66px;color:#2a2a2a;transform:scaleX(0.708);">-117.7</div>
<div class="b" style="left:70.50px;top:243.00px;width:1.50px;height:1.00px;background:#909090;"></div>
<div class="t " style="left:10.00px;transform-origin:0 50%;top:221.17px;font-size:8.2px;line-height:10.66px;color:#2a2a2a;transform:scaleX(0.799);">dB/div:</div>
<div class="t " style="left:12.00px;transform-origin:0 50%;top:230.37px;font-size:8.2px;line-height:10.66px;color:#2a2a2a;transform:scaleX(0.779);">10.0 dB</div>
<div class="t " style="left:11.00px;transform-origin:0 50%;top:241.07px;font-size:8.2px;line-height:10.66px;color:#2a2a2a;transform:scaleX(0.659);">RBW:</div>
<div class="b" style="left:6.00px;top:248.00px;width:37.00px;height:11.50px;background:linear-gradient(#f8fcfe,#e4eef4);border:1px solid #9ab8c8;border-radius:1px;"></div>
<div class="t " style="left:-75.50px;width:200px;text-align:center;transform-origin:50% 50%;top:250.02px;font-size:8.2px;line-height:10.66px;color:#2a2a2a;transform:scaleX(0.820);">Autoscale</div>
<div class="b" style="left:74.70px;top:184.50px;width:116.60px;height:59.30px;background:#000;"></div>
<svg width="800" height="517"><line x1="86.36" y1="184.5" x2="86.36" y2="243.8" stroke="#8a8a8a" stroke-width="0.8"/><line x1="98.02" y1="184.5" x2="98.02" y2="243.8" stroke="#8a8a8a" stroke-width="0.8"/><line x1="109.68" y1="184.5" x2="109.68" y2="243.8" stroke="#8a8a8a" stroke-width="0.8"/><line x1="121.34" y1="184.5" x2="121.34" y2="243.8" stroke="#8a8a8a" stroke-width="0.8"/><line x1="133.00" y1="184.5" x2="133.00" y2="243.8" stroke="#8a8a8a" stroke-width="0.8"/><line x1="144.66" y1="184.5" x2="144.66" y2="243.8" stroke="#8a8a8a" stroke-width="0.8"/><line x1="156.32" y1="184.5" x2="156.32" y2="243.8" stroke="#8a8a8a" stroke-width="0.8"/><line x1="167.98" y1="184.5" x2="167.98" y2="243.8" stroke="#8a8a8a" stroke-width="0.8"/><line x1="179.64" y1="184.5" x2="179.64" y2="243.8" stroke="#8a8a8a" stroke-width="0.8"/><line x1="74.7" y1="190.43" x2="191.3" y2="190.43" stroke="#8a8a8a" stroke-width="0.8"/><line x1="74.7" y1="196.36" x2="191.3" y2="196.36" stroke="#8a8a8a" stroke-width="0.8"/><line x1="74.7" y1="202.29" x2="191.3" y2="202.29" stroke="#8a8a8a" stroke-width="0.8"/><line x1="74.7" y1="208.22" x2="191.3" y2="208.22" stroke="#8a8a8a" stroke-width="0.8"/><line x1="74.7" y1="214.15" x2="191.3" y2="214.15" stroke="#8a8a8a" stroke-width="0.8"/><line x1="74.7" y1="220.08" x2="191.3" y2="220.08" stroke="#8a8a8a" stroke-width="0.8"/><line x1="74.7" y1="226.01" x2="191.3" y2="226.01" stroke="#8a8a8a" stroke-width="0.8"/><line x1="74.7" y1="231.94" x2="191.3" y2="231.94" stroke="#8a8a8a" stroke-width="0.8"/><line x1="74.7" y1="237.87" x2="191.3" y2="237.87" stroke="#8a8a8a" stroke-width="0.8"/><polyline points="74.7,225.8 75.5,238.3 76.2,224.5 77.0,229.0 77.7,224.9 78.5,226.7 79.2,225.5 80.0,236.2 80.7,225.4 81.5,232.2 82.2,226.1 83.0,226.2 83.7,224.9 84.5,225.4 85.2,235.2 86.0,228.0 86.7,224.5 87.5,227.1 88.2,226.7 89.0,224.7 89.7,225.2 90.5,225.1 91.2,226.3 92.0,225.1 92.7,224.9 93.5,236.1 94.2,234.5 95.0,235.1 95.7,227.8 96.5,224.9 97.2,224.9 98.0,224.8 98.7,224.6 99.5,225.9 100.2,226.8 101.0,239.3 101.7,229.2 102.5,226.4 103.2,232.8 104.0,229.2 104.7,232.1 105.5,226.6 106.2,239.7 107.0,233.6 107.7,239.5 108.5,225.4 109.2,238.6 110.0,232.5 110.7,225.0 111.5,227.3 112.2,224.8 113.0,226.5 113.7,224.7 114.5,238.7 115.2,225.1 116.0,224.5 116.7,227.9 117.5,230.3 118.2,226.6 119.0,230.2 119.7,243.0 120.5,228.6 121.2,225.1 122.0,225.2 122.7,226.4 123.5,225.2 124.2,225.1 125.0,238.3 125.7,222.0 126.5,207.0 127.2,199.2 128.0,191.7 128.7,200.4 129.4,192.4 130.2,191.2 130.9,197.8 131.7,193.9 132.4,193.4 133.2,200.1 133.9,196.0 134.7,194.5 135.4,196.6 136.2,188.8 136.9,195.3 137.7,195.3 138.4,192.5 139.2,193.3 139.9,205.5 140.7,219.8 141.4,228.0 142.2,229.3 142.9,226.4 143.7,227.0 144.4,228.4 145.2,224.6 145.9,224.8 146.7,226.9 147.4,227.1 148.2,224.7 148.9,228.3 149.7,226.1 150.4,227.2 151.2,230.7 151.9,239.3 152.7,225.8 153.4,226.8 154.2,232.8 154.9,226.6 155.7,228.0 156.4,226.2 157.2,227.3 157.9,227.5 158.7,225.6 159.4,224.9 160.2,231.7 160.9,225.3 161.7,225.4 162.4,226.6 163.2,226.5 163.9,231.4 164.7,225.9 165.4,227.5 166.2,234.1 166.9,225.2 167.7,225.4 168.4,224.7 169.2,225.7 169.9,227.2 170.7,226.0 171.4,225.2 172.2,226.5 172.9,226.1 173.7,226.3 174.4,235.6 175.2,226.9 175.9,227.9 176.7,225.1 177.4,229.3 178.2,225.4 178.9,227.1 179.7,225.2 180.4,237.6 181.2,236.2 181.9,224.8 182.7,225.3 183.4,226.2 184.2,227.7 184.9,227.2 185.7,237.8 186.4,236.6 187.2,224.6 187.9,226.0 188.7,225.8 189.4,227.9 190.2,228.5 190.9,226.6" fill="none" stroke="#e8e448" stroke-width="0.8"/><path d="M131 243.5 L132.5 246 L134 243.5" stroke="#909090" stroke-width="0.8" fill="none"/></svg>
<div class="t " style="left:83.50px;transform-origin:0 50%;top:248.77px;font-size:8.2px;line-height:10.66px;color:#2a2a2a;transform:scaleX(0.867);">Start</div>
<div class="t " style="left:103.00px;transform-origin:0 50%;top:249.55px;font-size:7px;line-height:9.10px;color:#2a2a2a;transform:scaleX(0.667);">&#8661;</div>
<div class="t " style="left:116.50px;transform-origin:0 50%;top:248.77px;font-size:8.2px;line-height:10.66px;color:#2a2a2a;transform:scaleX(0.801);">Stop</div>
<div class="t " style="left:134.00px;transform-origin:0 50%;top:248.77px;font-size:8.2px;line-height:10.66px;color:#2a2a2a;transform:scaleX(0.767);">1.02000 GHz</div>
<div class="b" style="left:201.33px;top:169.50px;width:198.00px;height:94.00px;background:#ffffff;"></div>
<div class="b" style="left:199.83px;top:157.00px;width:200.00px;height:12.50px;background:linear-gradient(#b4b4b4 0,#c8c8c8 1px,#c4c4c4 100%);"></div>
<div class="b" style="left:204.83px;top:158.80px;width:7.50px;height:9.40px;background:linear-gradient(#26406e 0,#26406e 25%,#3a78c0 35%,#4a88d0 100%);border-radius:1px;"></div>
<div class="b" style="left:206.43px;top:161.60px;width:4.3px;height:5.90px;border:1px solid #78a8e0;border-bottom:none;border-radius:2px 2px 0 0;opacity:0.7"></div>
<div class="t bd" style="left:215.33px;transform-origin:0 50%;top:158.40px;font-size:9px;line-height:11.70px;color:#f2f2f2;text-shadow:0 0 1px #808080;transform:scaleX(0.795);">Spectrum (Source 3)</div>
<div class="b" style="left:378.33px;top:158.50px;width:10.50px;height:10.00px;background:#cdcdcd;border:1px solid #dadada;"></div>
<div class="b" style="left:389.33px;top:158.50px;width:10.50px;height:10.00px;background:#cdcdcd;border:1px solid #dadada;"></div>
<svg width="800" height="517"><path d="M251.33 175.5 L256.33000000000004 175.5 L253.83 178.5 Z" fill="#707070"/></svg>
<div class="t " style="left:260.33px;transform-origin:0 50%;top:173.07px;font-size:8.2px;line-height:10.66px;color:#2a2a2a;transform:scaleX(0.729);">Trace 1</div>
<div class="b" style="left:305.33px;top:173.60px;width:7.50px;height:7.20px;background:linear-gradient(#eef6fc,#c8e0f0);border:1px solid #7aa0c0;"></div>
<svg width="800" height="517"><path d="M307.13 177.20 L308.53 178.80 L311.23 175.20" fill="none" stroke="#2a5a90" stroke-width="1"/></svg>
<div class="t " style="left:315.33px;transform-origin:0 50%;top:172.87px;font-size:8.2px;line-height:10.66px;color:#383838;transform:scaleX(0.732);">Show</div>
<div class="t " style="left:336.33px;transform-origin:0 50%;top:173.07px;font-size:8.2px;line-height:10.66px;color:#2a2a2a;transform:scaleX(0.748);">+Peak Normal</div>
<div class="b" style="left:375.33px;top:171.80px;width:21.00px;height:10.80px;background:linear-gradient(#f8fcfe,#e4eef4);border:1px solid #9ab8c8;border-radius:1px;"></div>
<div class="t " style="left:285.83px;width:200px;text-align:center;transform-origin:50% 50%;top:173.47px;font-size:8.2px;line-height:10.66px;color:#2a2a2a;transform:scaleX(0.868);">Clear</div>
<div class="t " style="left:211.33px;transform-origin:0 50%;top:184.07px;font-size:8.2px;line-height:10.66px;color:#2a2a2a;transform:scaleX(0.775);">-17.13</div>
<div class="b" style="left:209.83px;top:196.00px;width:36.50px;height:11.50px;background:#fff;border:1px solid #d8dcdc;"></div>
<div class="b" style="left:238.33px;top:196.80px;width:7.20px;height:9.90px;background:linear-gradient(#d8eef2,#a8d0dc);border:1px solid #88b4c4;border-radius:1px;"></div>
<svg width="800" height="517"><path d="M240.13 200.95 L241.93 202.95 L243.73 200.95" fill="none" stroke="#2a6a80" stroke-width="1"/></svg>
<div class="t " style="left:212.33px;transform-origin:0 50%;top:197.82px;font-size:8.2px;line-height:10.66px;color:#2a2a2a;transform:scaleX(0.801);">dBm</div>
<div class="t " style="right:531.67px;transform-origin:100% 50%;top:182.17px;font-size:8.2px;line-height:10.66px;color:#2a2a2a;transform:scaleX(0.803);">-17.1</div>
<div class="b" style="left:269.83px;top:186.10px;width:1.50px;height:1.00px;background:#909090;"></div>
<div class="t " style="right:531.67px;transform-origin:100% 50%;top:193.55px;font-size:8.2px;line-height:10.66px;color:#2a2a2a;transform:scaleX(0.857);">-37.1</div>
<div class="b" style="left:269.83px;top:197.48px;width:1.50px;height:1.00px;background:#909090;"></div>
<div class="t " style="right:531.67px;transform-origin:100% 50%;top:204.93px;font-size:8.2px;line-height:10.66px;color:#2a2a2a;transform:scaleX(0.857);">-57.1</div>
<div class="b" style="left:269.83px;top:208.86px;width:1.50px;height:1.00px;background:#909090;"></div>
<div class="t " style="right:531.67px;transform-origin:100% 50%;top:216.31px;font-size:8.2px;line-height:10.66px;color:#2a2a2a;transform:scaleX(0.857);">-77.1</div>
<div class="b" style="left:269.83px;top:220.24px;width:1.50px;height:1.00px;background:#909090;"></div>
<div class="t " style="right:531.67px;transform-origin:100% 50%;top:227.69px;font-size:8.2px;line-height:10.66px;color:#2a2a2a;transform:scaleX(0.857);">-97.1</div>
<div class="b" style="left:269.83px;top:231.62px;width:1.50px;height:1.00px;background:#909090;"></div>
<div class="t " style="right:531.67px;transform-origin:100% 50%;top:239.07px;font-size:8.2px;line-height:10.66px;color:#2a2a2a;transform:scaleX(0.708);">-117.1</div>
<div class="b" style="left:269.83px;top:243.00px;width:1.50px;height:1.00px;background:#909090;"></div>
<div class="t " style="left:209.33px;transform-origin:0 50%;top:221.17px;font-size:8.2px;line-height:10.66px;color:#2a2a2a;transform:scaleX(0.799);">dB/div:</div>
<div class="t " style="left:211.33px;transform-origin:0 50%;top:230.37px;font-size:8.2px;line-height:10.66px;color:#2a2a2a;transform:scaleX(0.779);">10.0 dB</div>
<div class="t " style="left:210.33px;transform-origin:0 50%;top:241.07px;font-size:8.2px;line-height:10.66px;color:#2a2a2a;transform:scaleX(0.659);">RBW:</div>
<div class="b" style="left:205.33px;top:248.00px;width:37.00px;height:11.50px;background:linear-gradient(#f8fcfe,#e4eef4);border:1px solid #9ab8c8;border-radius:1px;"></div>
<div class="t " style="left:123.83px;width:200px;text-align:center;transform-origin:50% 50%;top:250.02px;font-size:8.2px;line-height:10.66px;color:#2a2a2a;transform:scaleX(0.820);">Autoscale</div>
<div class="b" style="left:274.03px;top:184.50px;width:116.60px;height:59.30px;background:#000;"></div>
<svg width="800" height="517"><line x1="285.69" y1="184.5" x2="285.69" y2="243.8" stroke="#8a8a8a" stroke-width="0.8"/><line x1="297.35" y1="184.5" x2="297.35" y2="243.8" stroke="#8a8a8a" stroke-width="0.8"/><line x1="309.01" y1="184.5" x2="309.01" y2="243.8" stroke="#8a8a8a" stroke-width="0.8"/><line x1="320.67" y1="184.5" x2="320.67" y2="243.8" stroke="#8a8a8a" stroke-width="0.8"/><line x1="332.33" y1="184.5" x2="332.33" y2="243.8" stroke="#8a8a8a" stroke-width="0.8"/><line x1="343.99" y1="184.5" x2="343.99" y2="243.8" stroke="#8a8a8a" stroke-width="0.8"/><line x1="355.65" y1="184.5" x2="355.65" y2="243.8" stroke="#8a8a8a" stroke-width="0.8"/><line x1="367.31" y1="184.5" x2="367.31" y2="243.8" stroke="#8a8a8a" stroke-width="0.8"/><line x1="378.97" y1="184.5" x2="378.97" y2="243.8" stroke="#8a8a8a" stroke-width="0.8"/><line x1="274.03000000000003" y1="190.43" x2="390.63" y2="190.43" stroke="#8a8a8a" stroke-width="0.8"/><line x1="274.03000000000003" y1="196.36" x2="390.63" y2="196.36" stroke="#8a8a8a" stroke-width="0.8"/><line x1="274.03000000000003" y1="202.29" x2="390.63" y2="202.29" stroke="#8a8a8a" stroke-width="0.8"/><line x1="274.03000000000003" y1="208.22" x2="390.63" y2="208.22" stroke="#8a8a8a" stroke-width="0.8"/><line x1="274.03000000000003" y1="214.15" x2="390.63" y2="214.15" stroke="#8a8a8a" stroke-width="0.8"/><line x1="274.03000000000003" y1="220.08" x2="390.63" y2="220.08" stroke="#8a8a8a" stroke-width="0.8"/><line x1="274.03000000000003" y1="226.01" x2="390.63" y2="226.01" stroke="#8a8a8a" stroke-width="0.8"/><line x1="274.03000000000003" y1="231.94" x2="390.63" y2="231.94" stroke="#8a8a8a" stroke-width="0.8"/><line x1="274.03000000000003" y1="237.87" x2="390.63" y2="237.87" stroke="#8a8a8a" stroke-width="0.8"/><polyline points="274.0,233.2 274.8,225.2 275.5,225.3 276.3,226.6 277.0,236.5 277.8,226.6 278.5,225.9 279.3,224.8 280.0,225.0 280.8,225.9 281.5,234.9 282.3,238.5 283.0,226.6 283.8,225.9 284.5,235.6 285.3,226.0 286.0,227.7 286.8,227.1 287.5,225.0 288.3,235.1 289.0,227.2 289.8,228.6 290.5,226.0 291.3,225.5 292.0,225.5 292.8,227.0 293.5,226.7 294.3,234.0 295.0,226.2 295.8,226.2 296.5,227.6 297.3,231.7 298.0,226.7 298.8,224.6 299.5,225.0 300.3,226.5 301.0,234.1 301.8,227.6 302.5,239.7 303.3,224.7 304.0,226.3 304.8,224.9 305.5,233.1 306.3,225.3 307.0,225.0 307.8,230.5 308.5,225.4 309.3,239.6 310.0,227.2 310.8,225.1 311.5,225.4 312.3,226.1 313.0,230.4 313.8,227.4 314.5,225.5 315.3,224.7 316.0,225.1 316.8,240.5 317.5,230.6 318.3,226.4 319.0,230.8 319.8,226.6 320.5,232.3 321.3,225.5 322.0,224.6 322.8,224.8 323.5,231.0 324.3,226.5 325.0,222.0 325.8,207.0 326.5,195.7 327.3,194.2 328.0,194.2 328.8,190.8 329.5,191.2 330.3,197.4 331.0,196.3 331.8,188.6 332.5,193.0 333.3,189.4 334.0,200.4 334.8,198.5 335.5,196.1 336.3,202.5 337.0,194.6 337.8,190.1 338.5,191.1 339.3,205.6 340.0,219.8 340.8,226.2 341.5,228.1 342.3,225.5 343.0,228.7 343.8,226.5 344.5,226.3 345.3,224.8 346.0,227.4 346.8,225.5 347.5,241.8 348.3,232.8 349.0,225.6 349.8,226.3 350.5,225.5 351.3,227.1 352.0,231.2 352.8,228.2 353.5,225.2 354.3,226.2 355.0,226.8 355.8,224.8 356.5,225.1 357.3,225.9 358.0,227.5 358.8,235.6 359.5,226.1 360.3,226.6 361.0,224.7 361.8,226.3 362.5,225.0 363.3,242.2 364.0,225.3 364.8,226.5 365.5,237.7 366.3,226.0 367.0,226.4 367.8,225.9 368.5,224.5 369.3,224.8 370.0,225.2 370.8,229.2 371.5,224.5 372.3,224.7 373.0,225.9 373.8,226.9 374.5,224.6 375.3,235.8 376.0,233.2 376.8,226.3 377.5,227.0 378.3,225.8 379.0,225.2 379.8,226.7 380.5,226.3 381.3,227.9 382.0,225.0 382.8,225.0 383.5,224.6 384.3,224.9 385.0,227.3 385.8,225.5 386.5,225.2 387.3,227.4 388.0,227.6 388.8,225.9 389.5,224.6 390.3,225.1" fill="none" stroke="#e8e448" stroke-width="0.8"/><path d="M330.33000000000004 243.5 L331.83000000000004 246 L333.33000000000004 243.5" stroke="#909090" stroke-width="0.8" fill="none"/></svg>
<div class="t " style="left:282.83px;transform-origin:0 50%;top:248.77px;font-size:8.2px;line-height:10.66px;color:#2a2a2a;transform:scaleX(0.867);">Start</div>
<div class="t " style="left:302.33px;transform-origin:0 50%;top:249.55px;font-size:7px;line-height:9.10px;color:#2a2a2a;transform:scaleX(0.667);">&#8661;</div>
<div class="t " style="left:315.83px;transform-origin:0 50%;top:248.77px;font-size:8.2px;line-height:10.66px;color:#2a2a2a;transform:scaleX(0.801);">Stop</div>
<div class="t " style="left:333.33px;transform-origin:0 50%;top:248.77px;font-size:8.2px;line-height:10.66px;color:#2a2a2a;transform:scaleX(0.767);">1.02000 GHz</div>
<div class="b" style="left:400.67px;top:169.50px;width:198.00px;height:94.00px;background:#ffffff;"></div>
<div class="b" style="left:399.17px;top:157.00px;width:200.00px;height:12.50px;background:linear-gradient(#b4b4b4 0,#c8c8c8 1px,#c4c4c4 100%);"></div>
<div class="b" style="left:404.17px;top:158.80px;width:7.50px;height:9.40px;background:linear-gradient(#26406e 0,#26406e 25%,#3a78c0 35%,#4a88d0 100%);border-radius:1px;"></div>
<div class="b" style="left:405.77px;top:161.60px;width:4.3px;height:5.90px;border:1px solid #78a8e0;border-bottom:none;border-radius:2px 2px 0 0;opacity:0.7"></div>
<div class="t bd" style="left:414.67px;transform-origin:0 50%;top:158.40px;font-size:9px;line-height:11.70px;color:#f2f2f2;text-shadow:0 0 1px #808080;transform:scaleX(0.795);">Spectrum (Source 2)</div>
<div class="b" style="left:577.67px;top:158.50px;width:10.50px;height:10.00px;background:#cdcdcd;border:1px solid #dadada;"></div>
<div class="b" style="left:588.67px;top:158.50px;width:10.50px;height:10.00px;background:#cdcdcd;border:1px solid #dadada;"></div>
<svg width="800" height="517"><path d="M450.67 175.5 L455.67 175.5 L453.17 178.5 Z" fill="#707070"/></svg>
<div class="t " style="left:459.67px;transform-origin:0 50%;top:173.07px;font-size:8.2px;line-height:10.66px;color:#2a2a2a;transform:scaleX(0.729);">Trace 1</div>
<div class="b" style="left:504.67px;top:173.60px;width:7.50px;height:7.20px;background:linear-gradient(#eef6fc,#c8e0f0);border:1px solid #7aa0c0;"></div>
<svg width="800" height="517"><path d="M506.47 177.20 L507.87 178.80 L510.57 175.20" fill="none" stroke="#2a5a90" stroke-width="1"/></svg>
<div class="t " style="left:514.67px;transform-origin:0 50%;top:172.87px;font-size:8.2px;line-height:10.66px;color:#383838;transform:scaleX(0.732);">Show</div>
<div class="t " style="left:535.67px;transform-origin:0 50%;top:173.07px;font-size:8.2px;line-height:10.66px;color:#2a2a2a;transform:scaleX(0.748);">+Peak Normal</div>
<div class="b" style="left:574.67px;top:171.80px;width:21.00px;height:10.80px;background:linear-gradient(#f8fcfe,#e4eef4);border:1px solid #9ab8c8;border-radius:1px;"></div>
<div class="t " style="left:485.17px;width:200px;text-align:center;transform-origin:50% 50%;top:173.47px;font-size:8.2px;line-height:10.66px;color:#2a2a2a;transform:scaleX(0.868);">Clear</div>
<div class="t " style="left:410.67px;transform-origin:0 50%;top:184.07px;font-size:8.2px;line-height:10.66px;color:#2a2a2a;transform:scaleX(0.775);">-12.73</div>
<div class="b" style="left:409.17px;top:196.00px;width:36.50px;height:11.50px;background:#fff;border:1px solid #d8dcdc;"></div>
<div class="b" style="left:437.67px;top:196.80px;width:7.20px;height:9.90px;background:linear-gradient(#d8eef2,#a8d0dc);border:1px solid #88b4c4;border-radius:1px;"></div>
<svg width="800" height="517"><path d="M439.47 200.95 L441.27 202.95 L443.07 200.95" fill="none" stroke="#2a6a80" stroke-width="1"/></svg>
<div class="t " style="left:411.67px;transform-origin:0 50%;top:197.82px;font-size:8.2px;line-height:10.66px;color:#2a2a2a;transform:scaleX(0.801);">dBm</div>
<div class="t " style="right:332.33px;transform-origin:100% 50%;top:182.17px;font-size:8.2px;line-height:10.66px;color:#2a2a2a;transform:scaleX(0.803);">-12.7</div>
<div class="b" style="left:469.17px;top:186.10px;width:1.50px;height:1.00px;background:#909090;"></div>
<div class="t " style="right:332.33px;transform-origin:100% 50%;top:193.55px;font-size:8.2px;line-height:10.66px;color:#2a2a2a;transform:scaleX(0.857);">-32.7</div>
<div class="b" style="left:469.17px;top:197.48px;width:1.50px;height:1.00px;background:#909090;"></div>
<div class="t " style="right:332.33px;transform-origin:100% 50%;top:204.93px;font-size:8.2px;line-height:10.66px;color:#2a2a2a;transform:scaleX(0.857);">-52.7</div>
<div class="b" style="left:469.17px;top:208.86px;width:1.50px;height:1.00px;background:#909090;"></div>
<div class="t " style="right:332.33px;transform-origin:100% 50%;top:216.31px;font-size:8.2px;line-height:10.66px;color:#2a2a2a;transform:scaleX(0.857);">-72.7</div>
<div class="b" style="left:469.17px;top:220.24px;width:1.50px;height:1.00px;background:#909090;"></div>
<div class="t " style="right:332.33px;transform-origin:100% 50%;top:227.69px;font-size:8.2px;line-height:10.66px;color:#2a2a2a;transform:scaleX(0.857);">-92.7</div>
<div class="b" style="left:469.17px;top:231.62px;width:1.50px;height:1.00px;background:#909090;"></div>
<div class="t " style="right:332.33px;transform-origin:100% 50%;top:239.07px;font-size:8.2px;line-height:10.66px;color:#2a2a2a;transform:scaleX(0.708);">-112.7</div>
<div class="b" style="left:469.17px;top:243.00px;width:1.50px;height:1.00px;background:#909090;"></div>
<div class="t " style="left:408.67px;transform-origin:0 50%;top:221.17px;font-size:8.2px;line-height:10.66px;color:#2a2a2a;transform:scaleX(0.799);">dB/div:</div>
<div class="t " style="left:410.67px;transform-origin:0 50%;top:230.37px;font-size:8.2px;line-height:10.66px;color:#2a2a2a;transform:scaleX(0.779);">10.0 dB</div>
<div class="t " style="left:409.67px;transform-origin:0 50%;top:241.07px;font-size:8.2px;line-height:10.66px;color:#2a2a2a;transform:scaleX(0.659);">RBW:</div>
<div class="b" style="left:404.67px;top:248.00px;width:37.00px;height:11.50px;background:linear-gradient(#f8fcfe,#e4eef4);border:1px solid #9ab8c8;border-radius:1px;"></div>
<div class="t " style="left:323.17px;width:200px;text-align:center;transform-origin:50% 50%;top:250.02px;font-size:8.2px;line-height:10.66px;color:#2a2a2a;transform:scaleX(0.820);">Autoscale</div>
<div class="b" style="left:473.37px;top:184.50px;width:116.60px;height:59.30px;background:#000;"></div>
<svg width="800" height="517"><line x1="485.03" y1="184.5" x2="485.03" y2="243.8" stroke="#8a8a8a" stroke-width="0.8"/><line x1="496.69" y1="184.5" x2="496.69" y2="243.8" stroke="#8a8a8a" stroke-width="0.8"/><line x1="508.35" y1="184.5" x2="508.35" y2="243.8" stroke="#8a8a8a" stroke-width="0.8"/><line x1="520.01" y1="184.5" x2="520.01" y2="243.8" stroke="#8a8a8a" stroke-width="0.8"/><line x1="531.67" y1="184.5" x2="531.67" y2="243.8" stroke="#8a8a8a" stroke-width="0.8"/><line x1="543.33" y1="184.5" x2="543.33" y2="243.8" stroke="#8a8a8a" stroke-width="0.8"/><line x1="554.99" y1="184.5" x2="554.99" y2="243.8" stroke="#8a8a8a" stroke-width="0.8"/><line x1="566.65" y1="184.5" x2="566.65" y2="243.8" stroke="#8a8a8a" stroke-width="0.8"/><line x1="578.31" y1="184.5" x2="578.31" y2="243.8" stroke="#8a8a8a" stroke-width="0.8"/><line x1="473.37" y1="190.43" x2="589.97" y2="190.43" stroke="#8a8a8a" stroke-width="0.8"/><line x1="473.37" y1="196.36" x2="589.97" y2="196.36" stroke="#8a8a8a" stroke-width="0.8"/><line x1="473.37" y1="202.29" x2="589.97" y2="202.29" stroke="#8a8a8a" stroke-width="0.8"/><line x1="473.37" y1="208.22" x2="589.97" y2="208.22" stroke="#8a8a8a" stroke-width="0.8"/><line x1="473.37" y1="214.15" x2="589.97" y2="214.15" stroke="#8a8a8a" stroke-width="0.8"/><line x1="473.37" y1="220.08" x2="589.97" y2="220.08" stroke="#8a8a8a" stroke-width="0.8"/><line x1="473.37" y1="226.01" x2="589.97" y2="226.01" stroke="#8a8a8a" stroke-width="0.8"/><line x1="473.37" y1="231.94" x2="589.97" y2="231.94" stroke="#8a8a8a" stroke-width="0.8"/><line x1="473.37" y1="237.87" x2="589.97" y2="237.87" stroke="#8a8a8a" stroke-width="0.8"/><polyline points="473.4,224.8 474.1,227.4 474.9,226.8 475.6,229.2 476.4,226.9 477.1,225.1 477.9,227.5 478.6,227.0 479.4,225.0 480.1,225.4 480.9,224.6 481.6,225.0 482.4,228.4 483.1,239.1 483.9,233.7 484.6,241.1 485.4,225.2 486.1,225.2 486.9,226.3 487.6,229.9 488.4,225.1 489.1,226.1 489.9,230.7 490.6,226.4 491.4,227.1 492.1,235.0 492.9,225.6 493.6,226.0 494.4,229.5 495.1,225.0 495.9,225.4 496.6,238.1 497.4,226.7 498.1,229.0 498.9,225.5 499.6,224.9 500.4,232.8 501.1,225.0 501.9,232.3 502.6,225.1 503.4,235.8 504.1,224.8 504.9,224.7 505.6,224.5 506.4,224.9 507.1,235.8 507.9,224.6 508.6,226.9 509.4,225.6 510.1,235.4 510.9,225.6 511.6,234.1 512.4,227.2 513.1,225.5 513.9,225.3 514.6,226.7 515.4,226.6 516.1,231.5 516.9,226.5 517.6,226.0 518.4,226.4 519.1,226.2 519.9,225.6 520.6,225.8 521.4,227.5 522.1,225.4 522.9,225.9 523.6,236.5 524.4,222.0 525.1,207.0 525.9,193.0 526.6,191.1 527.4,194.6 528.1,190.0 528.9,194.2 529.6,193.7 530.4,196.3 531.1,194.3 531.9,195.3 532.6,189.8 533.4,189.3 534.1,196.1 534.9,194.9 535.6,192.5 536.4,193.1 537.1,198.5 537.9,193.0 538.6,205.5 539.4,219.8 540.1,225.0 540.9,226.0 541.6,227.2 542.4,226.1 543.1,224.6 543.9,226.1 544.6,226.6 545.4,226.9 546.1,226.3 546.9,227.2 547.6,225.1 548.4,227.2 549.1,225.4 549.9,225.3 550.6,226.1 551.4,225.9 552.1,225.8 552.9,224.8 553.6,225.5 554.4,229.3 555.1,231.6 555.9,225.8 556.6,240.9 557.4,238.9 558.1,228.1 558.9,224.6 559.6,226.2 560.4,226.2 561.1,226.4 561.9,224.8 562.6,226.2 563.4,225.2 564.1,228.3 564.9,224.7 565.6,230.0 566.4,224.8 567.1,227.1 567.9,227.7 568.6,226.7 569.4,226.5 570.1,225.7 570.9,225.8 571.6,229.8 572.4,226.7 573.1,226.6 573.9,225.8 574.6,239.8 575.4,241.1 576.1,224.7 576.9,232.9 577.6,225.1 578.4,231.4 579.1,224.6 579.9,225.4 580.6,235.0 581.4,225.3 582.1,224.9 582.9,226.1 583.6,226.3 584.4,235.7 585.1,225.9 585.9,225.0 586.6,225.9 587.4,234.0 588.1,225.3 588.9,227.2 589.6,225.7" fill="none" stroke="#e8e448" stroke-width="0.8"/><path d="M529.6700000000001 243.5 L531.1700000000001 246 L532.6700000000001 243.5" stroke="#909090" stroke-width="0.8" fill="none"/></svg>
<div class="t " style="left:482.17px;transform-origin:0 50%;top:248.77px;font-size:8.2px;line-height:10.66px;color:#2a2a2a;transform:scaleX(0.867);">Start</div>
<div class="t " style="left:501.67px;transform-origin:0 50%;top:249.55px;font-size:7px;line-height:9.10px;color:#2a2a2a;transform:scaleX(0.667);">&#8661;</div>
<div class="t " style="left:515.17px;transform-origin:0 50%;top:248.77px;font-size:8.2px;line-height:10.66px;color:#2a2a2a;transform:scaleX(0.801);">Stop</div>
<div class="t " style="left:532.67px;transform-origin:0 50%;top:248.77px;font-size:8.2px;line-height:10.66px;color:#2a2a2a;transform:scaleX(0.767);">1.02000 GHz</div>
<div class="b" style="left:600.00px;top:169.50px;width:198.00px;height:94.00px;background:#ffffff;"></div>
<div class="b" style="left:598.50px;top:157.00px;width:200.00px;height:12.50px;background:linear-gradient(#6aa0dc,#4c88cc);"></div>
<div class="b" style="left:603.50px;top:158.80px;width:7.50px;height:9.40px;background:linear-gradient(#26406e 0,#26406e 25%,#3a78c0 35%,#4a88d0 100%);border-radius:1px;"></div>
<div class="b" style="left:605.10px;top:161.60px;width:4.3px;height:5.90px;border:1px solid #78a8e0;border-bottom:none;border-radius:2px 2px 0 0;opacity:0.7"></div>
<div class="t bd" style="left:614.00px;transform-origin:0 50%;top:158.40px;font-size:9px;line-height:11.70px;color:#ffffff;text-shadow:0 0 1px #808080;transform:scaleX(0.795);">Spectrum (Source 1)</div>
<div class="b" style="left:775.50px;top:159.50px;width:8.50px;height:8.50px;background:#a8c8ec;border:1px solid #d8e8f8;"></div>
<div class="b" style="left:786.00px;top:159.50px;width:8.50px;height:8.50px;background:#f0b070;border:1px solid #f8d0a8;"></div>
<svg width="800" height="517"><path d="M650 175.5 L655 175.5 L652.5 178.5 Z" fill="#707070"/></svg>
<div class="t " style="left:659.00px;transform-origin:0 50%;top:173.07px;font-size:8.2px;line-height:10.66px;color:#2a2a2a;transform:scaleX(0.729);">Trace 1</div>
<div class="b" style="left:704.00px;top:173.60px;width:7.50px;height:7.20px;background:linear-gradient(#eef6fc,#c8e0f0);border:1px solid #7aa0c0;"></div>
<svg width="800" height="517"><path d="M705.80 177.20 L707.20 178.80 L709.90 175.20" fill="none" stroke="#2a5a90" stroke-width="1"/></svg>
<div class="t " style="left:714.00px;transform-origin:0 50%;top:172.87px;font-size:8.2px;line-height:10.66px;color:#383838;transform:scaleX(0.732);">Show</div>
<div class="t " style="left:735.00px;transform-origin:0 50%;top:173.07px;font-size:8.2px;line-height:10.66px;color:#2a2a2a;transform:scaleX(0.748);">+Peak Normal</div>
<div class="b" style="left:774.00px;top:171.80px;width:21.00px;height:10.80px;background:linear-gradient(#f8fcfe,#e4eef4);border:1px solid #9ab8c8;border-radius:1px;"></div>
<div class="t " style="left:684.50px;width:200px;text-align:center;transform-origin:50% 50%;top:173.47px;font-size:8.2px;line-height:10.66px;color:#2a2a2a;transform:scaleX(0.868);">Clear</div>
<div class="t " style="left:610.00px;transform-origin:0 50%;top:184.07px;font-size:8.2px;line-height:10.66px;color:#2a2a2a;transform:scaleX(0.775);">-12.81</div>
<div class="b" style="left:608.50px;top:196.00px;width:36.50px;height:11.50px;background:#fff;border:1px solid #d8dcdc;"></div>
<div class="b" style="left:637.00px;top:196.80px;width:7.20px;height:9.90px;background:linear-gradient(#d8eef2,#a8d0dc);border:1px solid #88b4c4;border-radius:1px;"></div>
<svg width="800" height="517"><path d="M638.80 200.95 L640.60 202.95 L642.40 200.95" fill="none" stroke="#2a6a80" stroke-width="1"/></svg>
<div class="t " style="left:611.00px;transform-origin:0 50%;top:197.82px;font-size:8.2px;line-height:10.66px;color:#2a2a2a;transform:scaleX(0.801);">dBm</div>
<div class="t " style="right:133.00px;transform-origin:100% 50%;top:182.17px;font-size:8.2px;line-height:10.66px;color:#2a2a2a;transform:scaleX(0.803);">-12.8</div>
<div class="b" style="left:668.50px;top:186.10px;width:1.50px;height:1.00px;background:#909090;"></div>
<div class="t " style="right:133.00px;transform-origin:100% 50%;top:193.55px;font-size:8.2px;line-height:10.66px;color:#2a2a2a;transform:scaleX(0.857);">-32.8</div>
<div class="b" style="left:668.50px;top:197.48px;width:1.50px;height:1.00px;background:#909090;"></div>
<div class="t " style="right:133.00px;transform-origin:100% 50%;top:204.93px;font-size:8.2px;line-height:10.66px;color:#2a2a2a;transform:scaleX(0.857);">-52.8</div>
<div class="b" style="left:668.50px;top:208.86px;width:1.50px;height:1.00px;background:#909090;"></div>
<div class="t " style="right:133.00px;transform-origin:100% 50%;top:216.31px;font-size:8.2px;line-height:10.66px;color:#2a2a2a;transform:scaleX(0.857);">-72.8</div>
<div class="b" style="left:668.50px;top:220.24px;width:1.50px;height:1.00px;background:#909090;"></div>
<div class="t " style="right:133.00px;transform-origin:100% 50%;top:227.69px;font-size:8.2px;line-height:10.66px;color:#2a2a2a;transform:scaleX(0.857);">-92.8</div>
<div class="b" style="left:668.50px;top:231.62px;width:1.50px;height:1.00px;background:#909090;"></div>
<div class="t " style="right:133.00px;transform-origin:100% 50%;top:239.07px;font-size:8.2px;line-height:10.66px;color:#2a2a2a;transform:scaleX(0.708);">-112.8</div>
<div class="b" style="left:668.50px;top:243.00px;width:1.50px;height:1.00px;background:#909090;"></div>
<div class="t " style="left:608.00px;transform-origin:0 50%;top:221.17px;font-size:8.2px;line-height:10.66px;color:#2a2a2a;transform:scaleX(0.799);">dB/div:</div>
<div class="t " style="left:610.00px;transform-origin:0 50%;top:230.37px;font-size:8.2px;line-height:10.66px;color:#2a2a2a;transform:scaleX(0.779);">10.0 dB</div>
<div class="t " style="left:609.00px;transform-origin:0 50%;top:241.07px;font-size:8.2px;line-height:10.66px;color:#2a2a2a;transform:scaleX(0.659);">RBW:</div>
<div class="b" style="left:604.00px;top:248.00px;width:37.00px;height:11.50px;background:linear-gradient(#f8fcfe,#e4eef4);border:1px solid #9ab8c8;border-radius:1px;"></div>
<div class="t " style="left:522.50px;width:200px;text-align:center;transform-origin:50% 50%;top:250.02px;font-size:8.2px;line-height:10.66px;color:#2a2a2a;transform:scaleX(0.820);">Autoscale</div>
<div class="b" style="left:672.70px;top:184.50px;width:116.60px;height:59.30px;background:#000;"></div>
<svg width="800" height="517"><line x1="684.36" y1="184.5" x2="684.36" y2="243.8" stroke="#8a8a8a" stroke-width="0.8"/><line x1="696.02" y1="184.5" x2="696.02" y2="243.8" stroke="#8a8a8a" stroke-width="0.8"/><line x1="707.68" y1="184.5" x2="707.68" y2="243.8" stroke="#8a8a8a" stroke-width="0.8"/><line x1="719.34" y1="184.5" x2="719.34" y2="243.8" stroke="#8a8a8a" stroke-width="0.8"/><line x1="731.00" y1="184.5" x2="731.00" y2="243.8" stroke="#8a8a8a" stroke-width="0.8"/><line x1="742.66" y1="184.5" x2="742.66" y2="243.8" stroke="#8a8a8a" stroke-width="0.8"/><line x1="754.32" y1="184.5" x2="754.32" y2="243.8" stroke="#8a8a8a" stroke-width="0.8"/><line x1="765.98" y1="184.5" x2="765.98" y2="243.8" stroke="#8a8a8a" stroke-width="0.8"/><line x1="777.64" y1="184.5" x2="777.64" y2="243.8" stroke="#8a8a8a" stroke-width="0.8"/><line x1="672.7" y1="190.43" x2="789.3" y2="190.43" stroke="#8a8a8a" stroke-width="0.8"/><line x1="672.7" y1="196.36" x2="789.3" y2="196.36" stroke="#8a8a8a" stroke-width="0.8"/><line x1="672.7" y1="202.29" x2="789.3" y2="202.29" stroke="#8a8a8a" stroke-width="0.8"/><line x1="672.7" y1="208.22" x2="789.3" y2="208.22" stroke="#8a8a8a" stroke-width="0.8"/><line x1="672.7" y1="214.15" x2="789.3" y2="214.15" stroke="#8a8a8a" stroke-width="0.8"/><line x1="672.7" y1="220.08" x2="789.3" y2="220.08" stroke="#8a8a8a" stroke-width="0.8"/><line x1="672.7" y1="226.01" x2="789.3" y2="226.01" stroke="#8a8a8a" stroke-width="0.8"/><line x1="672.7" y1="231.94" x2="789.3" y2="231.94" stroke="#8a8a8a" stroke-width="0.8"/><line x1="672.7" y1="237.87" x2="789.3" y2="237.87" stroke="#8a8a8a" stroke-width="0.8"/><polyline points="672.7,227.7 673.5,226.6 674.2,225.0 675.0,227.1 675.7,225.1 676.5,241.8 677.2,226.4 678.0,226.2 678.7,224.6 679.5,226.5 680.2,224.7 681.0,225.2 681.7,224.7 682.5,224.8 683.2,226.4 684.0,236.8 684.7,225.3 685.5,225.9 686.2,226.7 687.0,228.8 687.7,240.5 688.5,231.8 689.2,224.6 690.0,226.1 690.7,225.7 691.5,224.9 692.2,226.0 693.0,226.3 693.7,230.4 694.5,226.4 695.2,225.1 696.0,227.5 696.7,225.5 697.5,226.2 698.2,228.3 699.0,238.0 699.7,225.6 700.5,234.8 701.2,227.4 702.0,225.2 702.7,227.7 703.5,228.8 704.2,225.3 705.0,224.6 705.7,240.7 706.5,226.7 707.2,227.6 708.0,226.0 708.7,225.3 709.5,224.6 710.2,225.0 711.0,240.2 711.7,231.9 712.5,239.6 713.2,226.9 714.0,225.9 714.7,225.4 715.5,224.8 716.2,225.5 717.0,230.3 717.7,226.8 718.5,225.7 719.2,227.6 720.0,225.8 720.7,227.0 721.5,225.8 722.2,225.3 723.0,234.0 723.7,222.0 724.5,207.0 725.2,189.3 726.0,192.1 726.7,189.3 727.5,196.7 728.2,203.5 729.0,195.3 729.7,191.1 730.5,190.7 731.2,193.8 732.0,191.9 732.7,194.4 733.5,192.0 734.2,190.4 735.0,197.0 735.7,192.3 736.5,192.1 737.2,193.2 738.0,205.6 738.7,219.8 739.5,225.5 740.2,239.9 741.0,225.3 741.7,225.4 742.5,224.6 743.2,225.1 744.0,227.3 744.7,227.6 745.5,233.4 746.2,226.3 747.0,229.1 747.7,224.7 748.5,231.5 749.2,225.0 750.0,224.6 750.7,227.0 751.5,225.9 752.2,226.7 753.0,226.6 753.7,225.0 754.5,227.4 755.2,226.0 756.0,224.8 756.7,224.6 757.5,225.9 758.2,225.4 759.0,233.5 759.7,234.7 760.5,233.7 761.2,228.0 762.0,225.1 762.7,225.5 763.5,228.9 764.2,226.4 765.0,224.6 765.7,234.4 766.5,227.1 767.2,229.0 768.0,229.7 768.7,234.0 769.5,227.4 770.2,224.7 771.0,225.5 771.7,227.6 772.5,225.5 773.2,225.6 774.0,225.8 774.7,226.3 775.5,231.4 776.2,224.7 777.0,225.6 777.7,237.2 778.5,225.3 779.2,225.1 780.0,224.6 780.7,227.2 781.5,228.5 782.2,224.8 783.0,235.3 783.7,225.0 784.5,237.3 785.2,238.4 786.0,224.8 786.7,225.1 787.5,227.5 788.2,225.4 789.0,226.4" fill="none" stroke="#e8e448" stroke-width="0.8"/><path d="M729 243.5 L730.5 246 L732 243.5" stroke="#909090" stroke-width="0.8" fill="none"/></svg>
<div class="t " style="left:681.50px;transform-origin:0 50%;top:248.77px;font-size:8.2px;line-height:10.66px;color:#2a2a2a;transform:scaleX(0.867);">Start</div>
<div class="t " style="left:701.00px;transform-origin:0 50%;top:249.55px;font-size:7px;line-height:9.10px;color:#2a2a2a;transform:scaleX(0.667);">&#8661;</div>
<div class="t " style="left:714.50px;transform-origin:0 50%;top:248.77px;font-size:8.2px;line-height:10.66px;color:#2a2a2a;transform:scaleX(0.801);">Stop</div>
<div class="t " style="left:732.00px;transform-origin:0 50%;top:248.77px;font-size:8.2px;line-height:10.66px;color:#2a2a2a;transform:scaleX(0.690);">1.020 GHz</div>
<div class="b" style="left:2.00px;top:263.50px;width:596.00px;height:2.00px;background:#d4d4d4;"></div>
<div class="b" style="left:599.50px;top:156.00px;width:199.50px;height:108.50px;border:1.5px solid #6aa0d8;"></div>
<svg width="800" height="517"><path d="M737.5 205.5 L737.5 214.5 L739.6 212.6 L741.2 216 L742.6 215.3 L741 212 L744 212 Z" fill="#fff" stroke="#202020" stroke-width="0.6"/></svg>
<div class="b" style="left:2.00px;top:277.00px;width:198.00px;height:95.50px;background:#ffffff;"></div>
<div class="b" style="left:0.50px;top:265.50px;width:200.00px;height:11.50px;background:linear-gradient(#b4b4b4 0,#c8c8c8 1px,#c4c4c4 100%);"></div>
<div class="b" style="left:5.50px;top:267.30px;width:7.50px;height:8.40px;background:linear-gradient(#26406e 0,#26406e 25%,#3a78c0 35%,#4a88d0 100%);border-radius:1px;"></div>
<div class="b" style="left:7.10px;top:270.10px;width:4.3px;height:4.90px;border:1px solid #78a8e0;border-bottom:none;border-radius:2px 2px 0 0;opacity:0.7"></div>
<div class="t bd" style="left:16.00px;transform-origin:0 50%;top:266.40px;font-size:9px;line-height:11.70px;color:#f2f2f2;text-shadow:0 0 1px #808080;transform:scaleX(0.794);">Spectrogram (Source 4)</div>
<div class="b" style="left:179.00px;top:267.00px;width:10.50px;height:9.00px;background:#cdcdcd;border:1px solid #dadada;"></div>
<div class="b" style="left:190.00px;top:267.00px;width:10.50px;height:9.00px;background:#cdcdcd;border:1px solid #dadada;"></div>
<div class="t " style="left:54.00px;transform-origin:0 50%;top:280.57px;font-size:8.2px;line-height:10.66px;color:#2a2a2a;transform:scaleX(0.775);">Spectrums/line: 1</div>
<div class="t " style="left:143.00px;transform-origin:0 50%;top:281.07px;font-size:8.2px;line-height:10.66px;color:#2a2a2a;transform:scaleX(0.725);">+Peak</div>
<div class="b" style="left:177.00px;top:279.00px;width:19.50px;height:11.50px;background:linear-gradient(#f8fcfe,#e4eef4);border:1px solid #9ab8c8;border-radius:1px;"></div>
<div class="t " style="left:86.75px;width:200px;text-align:center;transform-origin:50% 50%;top:281.02px;font-size:8.2px;line-height:10.66px;color:#2a2a2a;transform:scaleX(0.868);">Clear</div>
<div class="t " style="left:12.00px;transform-origin:0 50%;top:291.97px;font-size:8.2px;line-height:10.66px;color:#2a2a2a;transform:scaleX(0.760);">Time/div:</div>
<div class="t " style="left:13.00px;transform-origin:0 50%;top:301.07px;font-size:8.2px;line-height:10.66px;color:#2a2a2a;transform:scaleX(0.773);">372 us</div>
<div class="t " style="left:11.00px;transform-origin:0 50%;top:311.97px;font-size:8.2px;line-height:10.66px;color:#2a2a2a;transform:scaleX(0.659);">RBW:</div>
<div class="t i" style="left:13.00px;transform-origin:0 50%;top:321.07px;font-size:8.2px;line-height:10.66px;color:#2a2a2a;transform:scaleX(0.799);">300 kHz</div>
<div class="t " style="left:11.00px;transform-origin:0 50%;top:333.57px;font-size:8.2px;line-height:10.66px;color:#2a2a2a;transform:scaleX(0.709);">Pos</div>
<div class="t " style="left:13.00px;transform-origin:0 50%;top:343.07px;font-size:8.2px;line-height:10.66px;color:#2a2a2a;transform:scaleX(0.870);">0.0 div</div>
<div class="b" style="left:6.00px;top:357.00px;width:37.00px;height:11.50px;background:linear-gradient(#f8fcfe,#e4eef4);border:1px solid #9ab8c8;border-radius:1px;"></div>
<div class="t " style="left:-75.50px;width:200px;text-align:center;transform-origin:50% 50%;top:359.02px;font-size:8.2px;line-height:10.66px;color:#2a2a2a;transform:scaleX(0.820);">Autoscale</div>
<div class="b" style="left:76.00px;top:292.50px;width:111.50px;height:61.00px;background:#f2f2f2;"></div>
<div class="b" style="left:189.00px;top:300.50px;width:6.50px;height:46.00px;background:#c8c8c8;border:1px solid #d8d8d8;"></div>
<svg width="800" height="517"><path d="M190.5 298.5 L192.2 296.5 L194 298.5" stroke="#505050" stroke-width="0.8" fill="none"/><path d="M190.5 348.8 L192.2 350.8 L194 348.8" stroke="#505050" stroke-width="0.8" fill="none"/></svg>
<svg width="800" height="517"><polygon points="98,295 174,295 174,340 160.5,352.6 85,352.6 85,306.6" fill="#000"/><polygon points="86,351 86,344 86.0,340.9 87.3,341.1 88.6,340.4 89.9,341.6 91.2,340.8 92.5,340.0 93.8,340.5 95.1,340.7 96.4,339.8 97.7,340.3 99.0,340.1 100.3,339.8 101.6,338.1 102.9,338.8 104.2,338.5 105.5,340.2 106.8,339.8 108.1,337.7 109.4,339.0 110.7,336.8 112.0,336.1 113.3,338.2 114.6,339.2 115.9,337.9 117.2,336.7 118.5,337.9 121,350 119,351" fill="#34dcc0"/><polygon points="134,351 134,340 134.0,337.6 135.3,337.6 136.6,337.2 137.9,337.3 139.2,339.6 140.5,336.9 141.8,337.0 143.1,339.2 144.4,337.5 145.7,339.2 147.0,337.9 148.3,339.2 149.6,339.8 150.9,339.0 152.2,338.4 153.5,338.7 154.8,339.3 156.1,339.4 157.4,337.8 158.7,338.7 160.0,339.1 161.3,338.9 162.6,339.3 163.9,340.1 165.2,340.4 166.5,338.3 167.8,338.4 168,342 160,351" fill="#34dcc0"/><rect x="164.2" y="341.8" width="1.3" height="1.3" fill="#a8f8e8" opacity="0.75"/><rect x="165.7" y="343.3" width="1.3" height="1.3" fill="#a8f8e8" opacity="0.75"/><rect x="103.5" y="341.4" width="1.3" height="1.3" fill="#a8f8e8" opacity="0.75"/><rect x="96.4" y="346.1" width="1.3" height="1.3" fill="#a8f8e8" opacity="0.75"/><rect x="160.9" y="347.9" width="1.3" height="1.3" fill="#a8f8e8" opacity="0.75"/><rect x="100.9" y="342.7" width="1.3" height="1.3" fill="#a8f8e8" opacity="0.75"/><rect x="154.9" y="345.4" width="1.3" height="1.3" fill="#a8f8e8" opacity="0.75"/><rect x="165.5" y="344.1" width="1.3" height="1.3" fill="#a8f8e8" opacity="0.75"/><rect x="118.7" y="341.7" width="1.3" height="1.3" fill="#a8f8e8" opacity="0.75"/><rect x="117.0" y="349.4" width="1.3" height="1.3" fill="#a8f8e8" opacity="0.75"/><rect x="142.9" y="342.6" width="1.3" height="1.3" fill="#a8f8e8" opacity="0.75"/><rect x="87.4" y="341.8" width="1.3" height="1.3" fill="#a8f8e8" opacity="0.75"/><rect x="99.0" y="342.0" width="1.3" height="1.3" fill="#a8f8e8" opacity="0.75"/><rect x="91.7" y="347.6" width="1.3" height="1.3" fill="#a8f8e8" opacity="0.75"/><rect x="111.4" y="344.1" width="1.3" height="1.3" fill="#a8f8e8" opacity="0.75"/><rect x="118.2" y="344.8" width="1.3" height="1.3" fill="#a8f8e8" opacity="0.75"/><rect x="114.0" y="345.4" width="1.3" height="1.3" fill="#a8f8e8" opacity="0.75"/><rect x="110.1" y="345.3" width="1.3" height="1.3" fill="#a8f8e8" opacity="0.75"/><rect x="99.2" y="342.8" width="1.3" height="1.3" fill="#a8f8e8" opacity="0.75"/><rect x="113.0" y="343.9" width="1.3" height="1.3" fill="#a8f8e8" opacity="0.75"/><rect x="111.4" y="345.4" width="1.3" height="1.3" fill="#a8f8e8" opacity="0.75"/><rect x="141.7" y="345.9" width="1.3" height="1.3" fill="#a8f8e8" opacity="0.75"/><rect x="96.7" y="341.1" width="1.3" height="1.3" fill="#a8f8e8" opacity="0.75"/><rect x="101.9" y="342.5" width="1.3" height="1.3" fill="#a8f8e8" opacity="0.75"/><rect x="149.9" y="348.0" width="1.3" height="1.3" fill="#a8f8e8" opacity="0.75"/><rect x="101.9" y="347.8" width="1.3" height="1.3" fill="#a8f8e8" opacity="0.75"/><rect x="155.5" y="346.5" width="1.3" height="1.3" fill="#a8f8e8" opacity="0.75"/><rect x="113.6" y="346.2" width="1.3" height="1.3" fill="#a8f8e8" opacity="0.75"/><rect x="107.8" y="344.0" width="1.3" height="1.3" fill="#a8f8e8" opacity="0.75"/><rect x="140.5" y="343.1" width="1.3" height="1.3" fill="#a8f8e8" opacity="0.75"/><rect x="159.7" y="343.7" width="1.3" height="1.3" fill="#a8f8e8" opacity="0.75"/><rect x="95.5" y="346.2" width="1.3" height="1.3" fill="#a8f8e8" opacity="0.75"/><rect x="108.4" y="344.6" width="1.3" height="1.3" fill="#a8f8e8" opacity="0.75"/><rect x="102.5" y="342.6" width="1.3" height="1.3" fill="#a8f8e8" opacity="0.75"/><rect x="140.2" y="348.8" width="1.3" height="1.3" fill="#a8f8e8" opacity="0.75"/><rect x="94.3" y="341.9" width="1.3" height="1.3" fill="#a8f8e8" opacity="0.75"/><rect x="96.6" y="341.9" width="1.3" height="1.3" fill="#a8f8e8" opacity="0.75"/><rect x="91.0" y="346.3" width="1.3" height="1.3" fill="#a8f8e8" opacity="0.75"/><rect x="108.8" y="344.1" width="1.3" height="1.3" fill="#a8f8e8" opacity="0.75"/><rect x="113.5" y="347.4" width="1.3" height="1.3" fill="#a8f8e8" opacity="0.75"/><rect x="95.3" y="344.1" width="1.3" height="1.3" fill="#a8f8e8" opacity="0.75"/><rect x="96.1" y="344.7" width="1.3" height="1.3" fill="#a8f8e8" opacity="0.75"/><rect x="102.8" y="346.9" width="1.3" height="1.3" fill="#a8f8e8" opacity="0.75"/><rect x="94.6" y="342.7" width="1.3" height="1.3" fill="#a8f8e8" opacity="0.75"/><rect x="97.8" y="341.7" width="1.3" height="1.3" fill="#a8f8e8" opacity="0.75"/><rect x="103.9" y="348.1" width="1.3" height="1.3" fill="#a8f8e8" opacity="0.75"/><rect x="88.2" y="343.8" width="1.3" height="1.3" fill="#a8f8e8" opacity="0.75"/><rect x="163.9" y="347.7" width="1.3" height="1.3" fill="#a8f8e8" opacity="0.75"/><rect x="159.6" y="342.2" width="1.3" height="1.3" fill="#a8f8e8" opacity="0.75"/><rect x="96.5" y="342.1" width="1.3" height="1.3" fill="#a8f8e8" opacity="0.75"/><rect x="142.2" y="348.5" width="1.3" height="1.3" fill="#a8f8e8" opacity="0.75"/><rect x="94.4" y="341.7" width="1.3" height="1.3" fill="#a8f8e8" opacity="0.75"/><rect x="109.2" y="344.3" width="1.3" height="1.3" fill="#a8f8e8" opacity="0.75"/><rect x="163.2" y="343.1" width="1.3" height="1.3" fill="#a8f8e8" opacity="0.75"/><rect x="145.3" y="342.7" width="1.3" height="1.3" fill="#a8f8e8" opacity="0.75"/><rect x="86" y="349.8" width="74" height="2.2" fill="#304848"/><rect x="125.5" y="350.3" width="3.4" height="1.5" fill="#d03848" opacity="0.85"/><rect x="89.9" y="350.3" width="4.8" height="1.5" fill="#d03848" opacity="0.85"/><rect x="134.3" y="350.3" width="3.7" height="1.5" fill="#d03848" opacity="0.85"/><rect x="153.6" y="350.3" width="3.9" height="1.5" fill="#d03848" opacity="0.85"/><rect x="93.2" y="350.3" width="3.0" height="1.5" fill="#d03848" opacity="0.85"/><rect x="102.4" y="350.3" width="5.0" height="1.5" fill="#d03848" opacity="0.85"/><rect x="151.4" y="350.3" width="4.2" height="1.5" fill="#d03848" opacity="0.85"/><rect x="145.0" y="350.3" width="3.5" height="1.5" fill="#d03848" opacity="0.85"/><rect x="92.2" y="350.3" width="4.9" height="1.5" fill="#d03848" opacity="0.85"/><rect x="143.0" y="350.3" width="4.8" height="1.5" fill="#d03848" opacity="0.85"/><rect x="140.2" y="350.3" width="3.2" height="1.5" fill="#d03848" opacity="0.85"/><rect x="128.9" y="350.3" width="2.3" height="1.5" fill="#d03848" opacity="0.85"/><rect x="153.4" y="350.3" width="4.5" height="1.5" fill="#d03848" opacity="0.85"/><rect x="102.8" y="350.3" width="3.8" height="1.5" fill="#d03848" opacity="0.85"/><defs><linearGradient id="pk0" x1="0" y1="0" x2="0" y2="1"><stop offset="0" stop-color="#c89068"/><stop offset="0.12" stop-color="#b8d040"/><stop offset="0.32" stop-color="#70e030"/><stop offset="0.7" stop-color="#40cc48"/><stop offset="1" stop-color="#30c8a0"/></linearGradient></defs><rect x="118.5" y="322.5" width="18" height="28" fill="url(#pk0)"/><rect x="118.5" y="322.5" width="8" height="5" fill="#b8a8a0" opacity="0.6"/><ellipse cx="128.5" cy="318.5" rx="3.5" ry="3.5" fill="#c02028" opacity="0.35"/><polygon points="122.5,350.5 126,327 129.5,350.5" fill="#000"/><path d="M80.5 306 L87.5 299.5 L91 302 L84 308.2 Z" fill="#3a88d8"/><path d="M80 308.3 L84.5 308.3" stroke="#5a98d8" stroke-width="0.8"/></svg>
<div class="t " style="left:92.00px;transform-origin:0 50%;top:314.02px;font-size:7.5px;line-height:9.75px;color:#f0f0f0;transform:scaleX(0.730);">7/10/2022 22:44:27.940481</div>
<div class="t " style="left:83.00px;transform-origin:0 50%;top:357.77px;font-size:8.2px;line-height:10.66px;color:#2a2a2a;transform:scaleX(0.687);">CF</div>
<div class="t " style="left:95.00px;transform-origin:0 50%;top:357.77px;font-size:8.2px;line-height:10.66px;color:#2a2a2a;transform:scaleX(0.793);">1.00000 GH</div>
<div class="t " style="left:137.00px;transform-origin:0 50%;top:357.77px;font-size:8.2px;line-height:10.66px;color:#2a2a2a;transform:scaleX(0.784);">Span</div>
<div class="t " style="left:156.00px;transform-origin:0 50%;top:357.77px;font-size:8.2px;line-height:10.66px;color:#2a2a2a;transform:scaleX(0.732);">40.00 MHz</div>
<div class="b" style="left:201.33px;top:277.00px;width:198.00px;height:95.50px;background:#ffffff;"></div>
<div class="b" style="left:199.83px;top:265.50px;width:200.00px;height:11.50px;background:linear-gradient(#b4b4b4 0,#c8c8c8 1px,#c4c4c4 100%);"></div>
<div class="b" style="left:204.83px;top:267.30px;width:7.50px;height:8.40px;background:linear-gradient(#26406e 0,#26406e 25%,#3a78c0 35%,#4a88d0 100%);border-radius:1px;"></div>
<div class="b" style="left:206.43px;top:270.10px;width:4.3px;height:4.90px;border:1px solid #78a8e0;border-bottom:none;border-radius:2px 2px 0 0;opacity:0.7"></div>
<div class="t bd" style="left:215.33px;transform-origin:0 50%;top:266.40px;font-size:9px;line-height:11.70px;color:#f2f2f2;text-shadow:0 0 1px #808080;transform:scaleX(0.794);">Spectrogram (Source 3)</div>
<div class="b" style="left:378.33px;top:267.00px;width:10.50px;height:9.00px;background:#cdcdcd;border:1px solid #dadada;"></div>
<div class="b" style="left:389.33px;top:267.00px;width:10.50px;height:9.00px;background:#cdcdcd;border:1px solid #dadada;"></div>
<div class="t " style="left:253.33px;transform-origin:0 50%;top:280.57px;font-size:8.2px;line-height:10.66px;color:#2a2a2a;transform:scaleX(0.775);">Spectrums/line: 1</div>
<div class="t " style="left:342.33px;transform-origin:0 50%;top:281.07px;font-size:8.2px;line-height:10.66px;color:#2a2a2a;transform:scaleX(0.725);">+Peak</div>
<div class="b" style="left:376.33px;top:279.00px;width:19.50px;height:11.50px;background:linear-gradient(#f8fcfe,#e4eef4);border:1px solid #9ab8c8;border-radius:1px;"></div>
<div class="t " style="left:286.08px;width:200px;text-align:center;transform-origin:50% 50%;top:281.02px;font-size:8.2px;line-height:10.66px;color:#2a2a2a;transform:scaleX(0.868);">Clear</div>
<div class="t " style="left:211.33px;transform-origin:0 50%;top:291.97px;font-size:8.2px;line-height:10.66px;color:#2a2a2a;transform:scaleX(0.760);">Time/div:</div>
<div class="t " style="left:212.33px;transform-origin:0 50%;top:301.07px;font-size:8.2px;line-height:10.66px;color:#2a2a2a;transform:scaleX(0.773);">372 us</div>
<div class="t " style="left:210.33px;transform-origin:0 50%;top:311.97px;font-size:8.2px;line-height:10.66px;color:#2a2a2a;transform:scaleX(0.659);">RBW:</div>
<div class="t i" style="left:212.33px;transform-origin:0 50%;top:321.07px;font-size:8.2px;line-height:10.66px;color:#2a2a2a;transform:scaleX(0.799);">300 kHz</div>
<div class="t " style="left:210.33px;transform-origin:0 50%;top:333.57px;font-size:8.2px;line-height:10.66px;color:#2a2a2a;transform:scaleX(0.709);">Pos</div>
<div class="t " style="left:212.33px;transform-origin:0 50%;top:343.07px;font-size:8.2px;line-height:10.66px;color:#2a2a2a;transform:scaleX(0.870);">0.0 div</div>
<div class="b" style="left:205.33px;top:357.00px;width:37.00px;height:11.50px;background:linear-gradient(#f8fcfe,#e4eef4);border:1px solid #9ab8c8;border-radius:1px;"></div>
<div class="t " style="left:123.83px;width:200px;text-align:center;transform-origin:50% 50%;top:359.02px;font-size:8.2px;line-height:10.66px;color:#2a2a2a;transform:scaleX(0.820);">Autoscale</div>
<div class="b" style="left:275.33px;top:292.50px;width:111.50px;height:61.00px;background:#f2f2f2;"></div>
<div class="b" style="left:388.33px;top:300.50px;width:6.50px;height:46.00px;background:#c8c8c8;border:1px solid #d8d8d8;"></div>
<svg width="800" height="517"><path d="M389.83000000000004 298.5 L391.53 296.5 L393.33000000000004 298.5" stroke="#505050" stroke-width="0.8" fill="none"/><path d="M389.83000000000004 348.8 L391.53 350.8 L393.33000000000004 348.8" stroke="#505050" stroke-width="0.8" fill="none"/></svg>
<svg width="800" height="517"><polygon points="297.33000000000004,295 373.33000000000004,295 373.33000000000004,340 359.83000000000004,352.6 284.33000000000004,352.6 284.33000000000004,306.6" fill="#000"/><polygon points="285.33000000000004,351 285.33000000000004,344 285.3,339.8 286.6,340.3 287.9,340.1 289.2,341.6 290.5,341.3 291.8,339.2 293.1,341.2 294.4,337.2 295.7,340.9 297.0,337.1 298.3,339.5 299.6,339.8 300.9,337.1 302.2,339.3 303.5,339.6 304.8,339.2 306.1,338.1 307.4,337.8 308.7,338.6 310.0,337.3 311.3,338.2 312.6,335.9 313.9,338.9 315.2,336.9 316.5,335.6 317.8,338.1 320.33000000000004,350 318.33000000000004,351" fill="#34dcc0"/><polygon points="333.33000000000004,351 333.33000000000004,340 333.3,339.5 334.6,339.3 335.9,337.0 337.2,338.6 338.5,338.8 339.8,335.9 341.1,337.9 342.4,336.7 343.7,339.5 345.0,339.7 346.3,339.4 347.6,338.7 348.9,339.1 350.2,339.6 351.5,338.6 352.8,339.2 354.1,339.3 355.4,336.9 356.7,339.7 358.0,339.8 359.3,337.9 360.6,340.2 361.9,337.4 363.2,338.0 364.5,340.4 365.8,338.5 367.1,339.4 367.33000000000004,342 359.33000000000004,351" fill="#34dcc0"/><rect x="357.7" y="343.6" width="1.3" height="1.3" fill="#a8f8e8" opacity="0.75"/><rect x="297.8" y="345.9" width="1.3" height="1.3" fill="#a8f8e8" opacity="0.75"/><rect x="354.7" y="349.2" width="1.3" height="1.3" fill="#a8f8e8" opacity="0.75"/><rect x="316.3" y="343.0" width="1.3" height="1.3" fill="#a8f8e8" opacity="0.75"/><rect x="294.8" y="346.1" width="1.3" height="1.3" fill="#a8f8e8" opacity="0.75"/><rect x="303.6" y="343.5" width="1.3" height="1.3" fill="#a8f8e8" opacity="0.75"/><rect x="348.6" y="349.0" width="1.3" height="1.3" fill="#a8f8e8" opacity="0.75"/><rect x="335.3" y="343.4" width="1.3" height="1.3" fill="#a8f8e8" opacity="0.75"/><rect x="361.2" y="346.1" width="1.3" height="1.3" fill="#a8f8e8" opacity="0.75"/><rect x="318.2" y="348.0" width="1.3" height="1.3" fill="#a8f8e8" opacity="0.75"/><rect x="311.8" y="342.4" width="1.3" height="1.3" fill="#a8f8e8" opacity="0.75"/><rect x="314.6" y="343.7" width="1.3" height="1.3" fill="#a8f8e8" opacity="0.75"/><rect x="299.3" y="342.1" width="1.3" height="1.3" fill="#a8f8e8" opacity="0.75"/><rect x="341.4" y="343.1" width="1.3" height="1.3" fill="#a8f8e8" opacity="0.75"/><rect x="354.6" y="346.5" width="1.3" height="1.3" fill="#a8f8e8" opacity="0.75"/><rect x="352.7" y="346.7" width="1.3" height="1.3" fill="#a8f8e8" opacity="0.75"/><rect x="291.0" y="347.9" width="1.3" height="1.3" fill="#a8f8e8" opacity="0.75"/><rect x="288.5" y="344.5" width="1.3" height="1.3" fill="#a8f8e8" opacity="0.75"/><rect x="352.5" y="345.7" width="1.3" height="1.3" fill="#a8f8e8" opacity="0.75"/><rect x="358.1" y="345.3" width="1.3" height="1.3" fill="#a8f8e8" opacity="0.75"/><rect x="347.4" y="344.4" width="1.3" height="1.3" fill="#a8f8e8" opacity="0.75"/><rect x="313.3" y="346.4" width="1.3" height="1.3" fill="#a8f8e8" opacity="0.75"/><rect x="314.2" y="347.7" width="1.3" height="1.3" fill="#a8f8e8" opacity="0.75"/><rect x="317.5" y="349.0" width="1.3" height="1.3" fill="#a8f8e8" opacity="0.75"/><rect x="361.7" y="345.5" width="1.3" height="1.3" fill="#a8f8e8" opacity="0.75"/><rect x="317.0" y="346.2" width="1.3" height="1.3" fill="#a8f8e8" opacity="0.75"/><rect x="289.2" y="343.0" width="1.3" height="1.3" fill="#a8f8e8" opacity="0.75"/><rect x="309.4" y="346.2" width="1.3" height="1.3" fill="#a8f8e8" opacity="0.75"/><rect x="313.4" y="347.7" width="1.3" height="1.3" fill="#a8f8e8" opacity="0.75"/><rect x="314.5" y="342.6" width="1.3" height="1.3" fill="#a8f8e8" opacity="0.75"/><rect x="302.5" y="347.7" width="1.3" height="1.3" fill="#a8f8e8" opacity="0.75"/><rect x="311.3" y="343.9" width="1.3" height="1.3" fill="#a8f8e8" opacity="0.75"/><rect x="296.9" y="341.3" width="1.3" height="1.3" fill="#a8f8e8" opacity="0.75"/><rect x="361.9" y="341.2" width="1.3" height="1.3" fill="#a8f8e8" opacity="0.75"/><rect x="306.1" y="343.0" width="1.3" height="1.3" fill="#a8f8e8" opacity="0.75"/><rect x="307.5" y="348.3" width="1.3" height="1.3" fill="#a8f8e8" opacity="0.75"/><rect x="290.9" y="349.1" width="1.3" height="1.3" fill="#a8f8e8" opacity="0.75"/><rect x="356.0" y="342.4" width="1.3" height="1.3" fill="#a8f8e8" opacity="0.75"/><rect x="301.2" y="347.0" width="1.3" height="1.3" fill="#a8f8e8" opacity="0.75"/><rect x="304.2" y="348.4" width="1.3" height="1.3" fill="#a8f8e8" opacity="0.75"/><rect x="364.4" y="348.8" width="1.3" height="1.3" fill="#a8f8e8" opacity="0.75"/><rect x="338.2" y="341.1" width="1.3" height="1.3" fill="#a8f8e8" opacity="0.75"/><rect x="315.8" y="346.7" width="1.3" height="1.3" fill="#a8f8e8" opacity="0.75"/><rect x="334.0" y="342.2" width="1.3" height="1.3" fill="#a8f8e8" opacity="0.75"/><rect x="295.1" y="345.1" width="1.3" height="1.3" fill="#a8f8e8" opacity="0.75"/><rect x="341.8" y="341.2" width="1.3" height="1.3" fill="#a8f8e8" opacity="0.75"/><rect x="348.7" y="343.6" width="1.3" height="1.3" fill="#a8f8e8" opacity="0.75"/><rect x="312.1" y="345.9" width="1.3" height="1.3" fill="#a8f8e8" opacity="0.75"/><rect x="334.0" y="342.5" width="1.3" height="1.3" fill="#a8f8e8" opacity="0.75"/><rect x="338.1" y="348.1" width="1.3" height="1.3" fill="#a8f8e8" opacity="0.75"/><rect x="311.9" y="348.9" width="1.3" height="1.3" fill="#a8f8e8" opacity="0.75"/><rect x="350.3" y="348.1" width="1.3" height="1.3" fill="#a8f8e8" opacity="0.75"/><rect x="287.6" y="345.1" width="1.3" height="1.3" fill="#a8f8e8" opacity="0.75"/><rect x="365.3" y="349.3" width="1.3" height="1.3" fill="#a8f8e8" opacity="0.75"/><rect x="285.33000000000004" y="349.8" width="74" height="2.2" fill="#304848"/><rect x="289.9" y="350.3" width="4.9" height="1.5" fill="#d03848" opacity="0.85"/><rect x="298.6" y="350.3" width="3.3" height="1.5" fill="#d03848" opacity="0.85"/><rect x="298.3" y="350.3" width="2.6" height="1.5" fill="#d03848" opacity="0.85"/><rect x="329.6" y="350.3" width="4.5" height="1.5" fill="#d03848" opacity="0.85"/><rect x="311.8" y="350.3" width="4.3" height="1.5" fill="#d03848" opacity="0.85"/><rect x="322.2" y="350.3" width="2.5" height="1.5" fill="#d03848" opacity="0.85"/><rect x="293.5" y="350.3" width="4.4" height="1.5" fill="#d03848" opacity="0.85"/><rect x="318.2" y="350.3" width="4.9" height="1.5" fill="#d03848" opacity="0.85"/><rect x="307.5" y="350.3" width="2.3" height="1.5" fill="#d03848" opacity="0.85"/><rect x="348.1" y="350.3" width="4.3" height="1.5" fill="#d03848" opacity="0.85"/><rect x="355.5" y="350.3" width="3.0" height="1.5" fill="#d03848" opacity="0.85"/><rect x="347.3" y="350.3" width="2.6" height="1.5" fill="#d03848" opacity="0.85"/><rect x="347.0" y="350.3" width="4.0" height="1.5" fill="#d03848" opacity="0.85"/><rect x="305.8" y="350.3" width="2.5" height="1.5" fill="#d03848" opacity="0.85"/><defs><linearGradient id="pk1" x1="0" y1="0" x2="0" y2="1"><stop offset="0" stop-color="#c89068"/><stop offset="0.12" stop-color="#b8d040"/><stop offset="0.32" stop-color="#70e030"/><stop offset="0.7" stop-color="#40cc48"/><stop offset="1" stop-color="#30c8a0"/></linearGradient></defs><rect x="317.83000000000004" y="322.5" width="18" height="28" fill="url(#pk1)"/><rect x="317.83000000000004" y="322.5" width="8" height="5" fill="#b8a8a0" opacity="0.6"/><ellipse cx="327.83000000000004" cy="318.5" rx="3.5" ry="3.5" fill="#c02028" opacity="0.35"/><polygon points="321.83000000000004,350.5 325.33000000000004,327 328.83000000000004,350.5" fill="#000"/><path d="M279.83000000000004 306 L286.83000000000004 299.5 L290.33000000000004 302 L283.33000000000004 308.2 Z" fill="#3a88d8"/><path d="M279.33000000000004 308.3 L283.83000000000004 308.3" stroke="#5a98d8" stroke-width="0.8"/></svg>
<div class="t " style="left:291.33px;transform-origin:0 50%;top:314.02px;font-size:7.5px;line-height:9.75px;color:#f0f0f0;transform:scaleX(0.730);">7/10/2022 22:44:28.063831</div>
<div class="t " style="left:282.33px;transform-origin:0 50%;top:357.77px;font-size:8.2px;line-height:10.66px;color:#2a2a2a;transform:scaleX(0.687);">CF</div>
<div class="t " style="left:294.33px;transform-origin:0 50%;top:357.77px;font-size:8.2px;line-height:10.66px;color:#2a2a2a;transform:scaleX(0.793);">1.00000 GH</div>
<div class="t " style="left:336.33px;transform-origin:0 50%;top:357.77px;font-size:8.2px;line-height:10.66px;color:#2a2a2a;transform:scaleX(0.784);">Span</div>
<div class="t " style="left:355.33px;transform-origin:0 50%;top:357.77px;font-size:8.2px;line-height:10.66px;color:#2a2a2a;transform:scaleX(0.732);">40.00 MHz</div>
<div class="b" style="left:400.67px;top:277.00px;width:198.00px;height:95.50px;background:#ffffff;"></div>
<div class="b" style="left:399.17px;top:265.50px;width:200.00px;height:11.50px;background:linear-gradient(#b4b4b4 0,#c8c8c8 1px,#c4c4c4 100%);"></div>
<div class="b" style="left:404.17px;top:267.30px;width:7.50px;height:8.40px;background:linear-gradient(#26406e 0,#26406e 25%,#3a78c0 35%,#4a88d0 100%);border-radius:1px;"></div>
<div class="b" style="left:405.77px;top:270.10px;width:4.3px;height:4.90px;border:1px solid #78a8e0;border-bottom:none;border-radius:2px 2px 0 0;opacity:0.7"></div>
<div class="t bd" style="left:414.67px;transform-origin:0 50%;top:266.40px;font-size:9px;line-height:11.70px;color:#f2f2f2;text-shadow:0 0 1px #808080;transform:scaleX(0.794);">Spectrogram (Source 2)</div>
<div class="b" style="left:577.67px;top:267.00px;width:10.50px;height:9.00px;background:#cdcdcd;border:1px solid #dadada;"></div>
<div class="b" style="left:588.67px;top:267.00px;width:10.50px;height:9.00px;background:#cdcdcd;border:1px solid #dadada;"></div>
<div class="t " style="left:452.67px;transform-origin:0 50%;top:280.57px;font-size:8.2px;line-height:10.66px;color:#2a2a2a;transform:scaleX(0.775);">Spectrums/line: 1</div>
<div class="t " style="left:541.67px;transform-origin:0 50%;top:281.07px;font-size:8.2px;line-height:10.66px;color:#2a2a2a;transform:scaleX(0.725);">+Peak</div>
<div class="b" style="left:575.67px;top:279.00px;width:19.50px;height:11.50px;background:linear-gradient(#f8fcfe,#e4eef4);border:1px solid #9ab8c8;border-radius:1px;"></div>
<div class="t " style="left:485.42px;width:200px;text-align:center;transform-origin:50% 50%;top:281.02px;font-size:8.2px;line-height:10.66px;color:#2a2a2a;transform:scaleX(0.868);">Clear</div>
<div class="t " style="left:410.67px;transform-origin:0 50%;top:291.97px;font-size:8.2px;line-height:10.66px;color:#2a2a2a;transform:scaleX(0.760);">Time/div:</div>
<div class="t " style="left:411.67px;transform-origin:0 50%;top:301.07px;font-size:8.2px;line-height:10.66px;color:#2a2a2a;transform:scaleX(0.773);">372 us</div>
<div class="t " style="left:409.67px;transform-origin:0 50%;top:311.97px;font-size:8.2px;line-height:10.66px;color:#2a2a2a;transform:scaleX(0.659);">RBW:</div>
<div class="t i" style="left:411.67px;transform-origin:0 50%;top:321.07px;font-size:8.2px;line-height:10.66px;color:#2a2a2a;transform:scaleX(0.799);">300 kHz</div>
<div class="t " style="left:409.67px;transform-origin:0 50%;top:333.57px;font-size:8.2px;line-height:10.66px;color:#2a2a2a;transform:scaleX(0.709);">Pos</div>
<div class="t " style="left:411.67px;transform-origin:0 50%;top:343.07px;font-size:8.2px;line-height:10.66px;color:#2a2a2a;transform:scaleX(0.870);">0.0 div</div>
<div class="b" style="left:404.67px;top:357.00px;width:37.00px;height:11.50px;background:linear-gradient(#f8fcfe,#e4eef4);border:1px solid #9ab8c8;border-radius:1px;"></div>
<div class="t " style="left:323.17px;width:200px;text-align:center;transform-origin:50% 50%;top:359.02px;font-size:8.2px;line-height:10.66px;color:#2a2a2a;transform:scaleX(0.820);">Autoscale</div>
<div class="b" style="left:474.67px;top:292.50px;width:111.50px;height:61.00px;background:#f2f2f2;"></div>
<div class="b" style="left:587.67px;top:300.50px;width:6.50px;height:46.00px;background:#c8c8c8;border:1px solid #d8d8d8;"></div>
<svg width="800" height="517"><path d="M589.1700000000001 298.5 L590.87 296.5 L592.6700000000001 298.5" stroke="#505050" stroke-width="0.8" fill="none"/><path d="M589.1700000000001 348.8 L590.87 350.8 L592.6700000000001 348.8" stroke="#505050" stroke-width="0.8" fill="none"/></svg>
<svg width="800" height="517"><polygon points="496.67,295 572.6700000000001,295 572.6700000000001,340 559.1700000000001,352.6 483.67,352.6 483.67,306.6" fill="#000"/><polygon points="484.67,351 484.67,344 484.7,340.2 486.0,341.5 487.3,340.2 488.6,341.1 489.9,341.4 491.2,341.0 492.5,339.9 493.8,340.1 495.1,340.8 496.4,339.6 497.7,340.1 499.0,340.6 500.3,340.4 501.6,340.2 502.9,340.2 504.2,339.5 505.5,337.9 506.8,339.7 508.1,337.1 509.4,338.8 510.7,338.2 512.0,339.1 513.3,338.6 514.6,338.3 515.9,338.4 517.2,336.3 519.6700000000001,350 517.6700000000001,351" fill="#34dcc0"/><polygon points="532.6700000000001,351 532.6700000000001,340 532.7,337.9 534.0,338.0 535.3,339.5 536.6,339.0 537.9,339.6 539.2,338.7 540.5,339.5 541.8,338.7 543.1,339.0 544.4,336.3 545.7,337.2 547.0,338.7 548.3,339.2 549.6,339.1 550.9,338.3 552.2,339.9 553.5,338.4 554.8,339.6 556.1,340.0 557.4,339.3 558.7,339.3 560.0,339.9 561.3,338.1 562.6,339.7 563.9,338.1 565.2,339.3 566.5,340.4 566.6700000000001,342 558.6700000000001,351" fill="#34dcc0"/><rect x="534.1" y="342.2" width="1.3" height="1.3" fill="#a8f8e8" opacity="0.75"/><rect x="505.6" y="349.3" width="1.3" height="1.3" fill="#a8f8e8" opacity="0.75"/><rect x="490.3" y="348.9" width="1.3" height="1.3" fill="#a8f8e8" opacity="0.75"/><rect x="488.9" y="349.2" width="1.3" height="1.3" fill="#a8f8e8" opacity="0.75"/><rect x="497.6" y="346.3" width="1.3" height="1.3" fill="#a8f8e8" opacity="0.75"/><rect x="541.6" y="344.4" width="1.3" height="1.3" fill="#a8f8e8" opacity="0.75"/><rect x="538.4" y="343.3" width="1.3" height="1.3" fill="#a8f8e8" opacity="0.75"/><rect x="510.4" y="346.9" width="1.3" height="1.3" fill="#a8f8e8" opacity="0.75"/><rect x="551.6" y="344.8" width="1.3" height="1.3" fill="#a8f8e8" opacity="0.75"/><rect x="543.0" y="345.6" width="1.3" height="1.3" fill="#a8f8e8" opacity="0.75"/><rect x="504.5" y="344.1" width="1.3" height="1.3" fill="#a8f8e8" opacity="0.75"/><rect x="541.3" y="346.7" width="1.3" height="1.3" fill="#a8f8e8" opacity="0.75"/><rect x="540.5" y="343.1" width="1.3" height="1.3" fill="#a8f8e8" opacity="0.75"/><rect x="554.2" y="348.8" width="1.3" height="1.3" fill="#a8f8e8" opacity="0.75"/><rect x="514.0" y="348.7" width="1.3" height="1.3" fill="#a8f8e8" opacity="0.75"/><rect x="507.1" y="341.5" width="1.3" height="1.3" fill="#a8f8e8" opacity="0.75"/><rect x="539.9" y="346.8" width="1.3" height="1.3" fill="#a8f8e8" opacity="0.75"/><rect x="537.8" y="344.6" width="1.3" height="1.3" fill="#a8f8e8" opacity="0.75"/><rect x="493.3" y="341.0" width="1.3" height="1.3" fill="#a8f8e8" opacity="0.75"/><rect x="534.5" y="346.6" width="1.3" height="1.3" fill="#a8f8e8" opacity="0.75"/><rect x="560.9" y="347.9" width="1.3" height="1.3" fill="#a8f8e8" opacity="0.75"/><rect x="562.9" y="341.1" width="1.3" height="1.3" fill="#a8f8e8" opacity="0.75"/><rect x="559.7" y="345.4" width="1.3" height="1.3" fill="#a8f8e8" opacity="0.75"/><rect x="534.3" y="344.0" width="1.3" height="1.3" fill="#a8f8e8" opacity="0.75"/><rect x="555.2" y="346.9" width="1.3" height="1.3" fill="#a8f8e8" opacity="0.75"/><rect x="557.8" y="345.2" width="1.3" height="1.3" fill="#a8f8e8" opacity="0.75"/><rect x="500.2" y="345.1" width="1.3" height="1.3" fill="#a8f8e8" opacity="0.75"/><rect x="544.9" y="343.7" width="1.3" height="1.3" fill="#a8f8e8" opacity="0.75"/><rect x="534.8" y="346.7" width="1.3" height="1.3" fill="#a8f8e8" opacity="0.75"/><rect x="514.4" y="341.0" width="1.3" height="1.3" fill="#a8f8e8" opacity="0.75"/><rect x="541.7" y="343.6" width="1.3" height="1.3" fill="#a8f8e8" opacity="0.75"/><rect x="563.6" y="341.1" width="1.3" height="1.3" fill="#a8f8e8" opacity="0.75"/><rect x="541.2" y="346.0" width="1.3" height="1.3" fill="#a8f8e8" opacity="0.75"/><rect x="555.6" y="348.2" width="1.3" height="1.3" fill="#a8f8e8" opacity="0.75"/><rect x="554.8" y="347.2" width="1.3" height="1.3" fill="#a8f8e8" opacity="0.75"/><rect x="537.6" y="347.2" width="1.3" height="1.3" fill="#a8f8e8" opacity="0.75"/><rect x="543.6" y="345.1" width="1.3" height="1.3" fill="#a8f8e8" opacity="0.75"/><rect x="515.3" y="342.4" width="1.3" height="1.3" fill="#a8f8e8" opacity="0.75"/><rect x="516.7" y="345.4" width="1.3" height="1.3" fill="#a8f8e8" opacity="0.75"/><rect x="556.8" y="343.0" width="1.3" height="1.3" fill="#a8f8e8" opacity="0.75"/><rect x="555.9" y="347.6" width="1.3" height="1.3" fill="#a8f8e8" opacity="0.75"/><rect x="513.4" y="346.7" width="1.3" height="1.3" fill="#a8f8e8" opacity="0.75"/><rect x="563.0" y="348.5" width="1.3" height="1.3" fill="#a8f8e8" opacity="0.75"/><rect x="545.6" y="343.9" width="1.3" height="1.3" fill="#a8f8e8" opacity="0.75"/><rect x="515.9" y="344.3" width="1.3" height="1.3" fill="#a8f8e8" opacity="0.75"/><rect x="507.8" y="344.9" width="1.3" height="1.3" fill="#a8f8e8" opacity="0.75"/><rect x="551.5" y="347.2" width="1.3" height="1.3" fill="#a8f8e8" opacity="0.75"/><rect x="508.0" y="346.6" width="1.3" height="1.3" fill="#a8f8e8" opacity="0.75"/><rect x="493.4" y="343.0" width="1.3" height="1.3" fill="#a8f8e8" opacity="0.75"/><rect x="505.9" y="341.7" width="1.3" height="1.3" fill="#a8f8e8" opacity="0.75"/><rect x="540.0" y="346.4" width="1.3" height="1.3" fill="#a8f8e8" opacity="0.75"/><rect x="514.5" y="348.9" width="1.3" height="1.3" fill="#a8f8e8" opacity="0.75"/><rect x="500.7" y="344.6" width="1.3" height="1.3" fill="#a8f8e8" opacity="0.75"/><rect x="499.7" y="344.0" width="1.3" height="1.3" fill="#a8f8e8" opacity="0.75"/><rect x="541.2" y="346.3" width="1.3" height="1.3" fill="#a8f8e8" opacity="0.75"/><rect x="493.1" y="346.6" width="1.3" height="1.3" fill="#a8f8e8" opacity="0.75"/><rect x="484.67" y="349.8" width="74" height="2.2" fill="#304848"/><rect x="527.2" y="350.3" width="2.3" height="1.5" fill="#d03848" opacity="0.85"/><rect x="505.6" y="350.3" width="4.1" height="1.5" fill="#d03848" opacity="0.85"/><rect x="541.1" y="350.3" width="4.4" height="1.5" fill="#d03848" opacity="0.85"/><rect x="509.1" y="350.3" width="4.6" height="1.5" fill="#d03848" opacity="0.85"/><rect x="523.1" y="350.3" width="4.0" height="1.5" fill="#d03848" opacity="0.85"/><rect x="506.1" y="350.3" width="3.0" height="1.5" fill="#d03848" opacity="0.85"/><rect x="495.5" y="350.3" width="2.4" height="1.5" fill="#d03848" opacity="0.85"/><rect x="535.1" y="350.3" width="2.3" height="1.5" fill="#d03848" opacity="0.85"/><rect x="531.9" y="350.3" width="3.3" height="1.5" fill="#d03848" opacity="0.85"/><rect x="508.0" y="350.3" width="3.4" height="1.5" fill="#d03848" opacity="0.85"/><rect x="545.3" y="350.3" width="3.8" height="1.5" fill="#d03848" opacity="0.85"/><rect x="516.4" y="350.3" width="3.8" height="1.5" fill="#d03848" opacity="0.85"/><rect x="526.0" y="350.3" width="2.1" height="1.5" fill="#d03848" opacity="0.85"/><rect x="501.5" y="350.3" width="4.7" height="1.5" fill="#d03848" opacity="0.85"/><defs><linearGradient id="pk2" x1="0" y1="0" x2="0" y2="1"><stop offset="0" stop-color="#c89068"/><stop offset="0.12" stop-color="#b8d040"/><stop offset="0.32" stop-color="#70e030"/><stop offset="0.7" stop-color="#40cc48"/><stop offset="1" stop-color="#30c8a0"/></linearGradient></defs><rect x="517.1700000000001" y="322.5" width="18" height="28" fill="url(#pk2)"/><rect x="517.1700000000001" y="322.5" width="8" height="5" fill="#b8a8a0" opacity="0.6"/><ellipse cx="527.1700000000001" cy="318.5" rx="4.5" ry="3.5" fill="#c02028" opacity="0.85"/><polygon points="521.1700000000001,350.5 524.6700000000001,327 528.1700000000001,350.5" fill="#000"/><path d="M479.17 306 L486.17 299.5 L489.67 302 L482.67 308.2 Z" fill="#3a88d8"/><path d="M478.67 308.3 L483.17 308.3" stroke="#5a98d8" stroke-width="0.8"/></svg>
<div class="t " style="left:490.67px;transform-origin:0 50%;top:314.02px;font-size:7.5px;line-height:9.75px;color:#f0f0f0;transform:scaleX(0.730);">7/10/2022 22:44:28.176267</div>
<div class="t " style="left:481.67px;transform-origin:0 50%;top:357.77px;font-size:8.2px;line-height:10.66px;color:#2a2a2a;transform:scaleX(0.687);">CF</div>
<div class="t " style="left:493.67px;transform-origin:0 50%;top:357.77px;font-size:8.2px;line-height:10.66px;color:#2a2a2a;transform:scaleX(0.793);">1.00000 GH</div>
<div class="t " style="left:535.67px;transform-origin:0 50%;top:357.77px;font-size:8.2px;line-height:10.66px;color:#2a2a2a;transform:scaleX(0.784);">Span</div>
<div class="t " style="left:554.67px;transform-origin:0 50%;top:357.77px;font-size:8.2px;line-height:10.66px;color:#2a2a2a;transform:scaleX(0.732);">40.00 MHz</div>
<div class="b" style="left:600.00px;top:277.00px;width:198.00px;height:95.50px;background:#ffffff;"></div>
<div class="b" style="left:598.50px;top:265.50px;width:200.00px;height:11.50px;background:linear-gradient(#b4b4b4 0,#c8c8c8 1px,#c4c4c4 100%);"></div>
<div class="b" style="left:603.50px;top:267.30px;width:7.50px;height:8.40px;background:linear-gradient(#26406e 0,#26406e 25%,#3a78c0 35%,#4a88d0 100%);border-radius:1px;"></div>
<div class="b" style="left:605.10px;top:270.10px;width:4.3px;height:4.90px;border:1px solid #78a8e0;border-bottom:none;border-radius:2px 2px 0 0;opacity:0.7"></div>
<div class="t bd" style="left:614.00px;transform-origin:0 50%;top:266.40px;font-size:9px;line-height:11.70px;color:#f2f2f2;text-shadow:0 0 1px #808080;transform:scaleX(0.794);">Spectrogram (Source 1)</div>
<div class="b" style="left:777.00px;top:267.00px;width:10.50px;height:9.00px;background:#cdcdcd;border:1px solid #dadada;"></div>
<div class="b" style="left:788.00px;top:267.00px;width:10.50px;height:9.00px;background:#cdcdcd;border:1px solid #dadada;"></div>
<div class="t " style="left:652.00px;transform-origin:0 50%;top:280.57px;font-size:8.2px;line-height:10.66px;color:#2a2a2a;transform:scaleX(0.775);">Spectrums/line: 1</div>
<div class="t " style="left:741.00px;transform-origin:0 50%;top:281.07px;font-size:8.2px;line-height:10.66px;color:#2a2a2a;transform:scaleX(0.725);">+Peak</div>
<div class="b" style="left:775.00px;top:279.00px;width:19.50px;height:11.50px;background:linear-gradient(#f8fcfe,#e4eef4);border:1px solid #9ab8c8;border-radius:1px;"></div>
<div class="t " style="left:684.75px;width:200px;text-align:center;transform-origin:50% 50%;top:281.02px;font-size:8.2px;line-height:10.66px;color:#2a2a2a;transform:scaleX(0.868);">Clear</div>
<div class="t " style="left:610.00px;transform-origin:0 50%;top:291.97px;font-size:8.2px;line-height:10.66px;color:#2a2a2a;transform:scaleX(0.760);">Time/div:</div>
<div class="t " style="left:611.00px;transform-origin:0 50%;top:301.07px;font-size:8.2px;line-height:10.66px;color:#2a2a2a;transform:scaleX(0.773);">372 us</div>
<div class="t " style="left:609.00px;transform-origin:0 50%;top:311.97px;font-size:8.2px;line-height:10.66px;color:#2a2a2a;transform:scaleX(0.659);">RBW:</div>
<div class="t i" style="left:611.00px;transform-origin:0 50%;top:321.07px;font-size:8.2px;line-height:10.66px;color:#2a2a2a;transform:scaleX(0.799);">300 kHz</div>
<div class="t " style="left:609.00px;transform-origin:0 50%;top:333.57px;font-size:8.2px;line-height:10.66px;color:#2a2a2a;transform:scaleX(0.709);">Pos</div>
<div class="t " style="left:611.00px;transform-origin:0 50%;top:343.07px;font-size:8.2px;line-height:10.66px;color:#2a2a2a;transform:scaleX(0.870);">0.0 div</div>
<div class="b" style="left:604.00px;top:357.00px;width:37.00px;height:11.50px;background:linear-gradient(#f8fcfe,#e4eef4);border:1px solid #9ab8c8;border-radius:1px;"></div>
<div class="t " style="left:522.50px;width:200px;text-align:center;transform-origin:50% 50%;top:359.02px;font-size:8.2px;line-height:10.66px;color:#2a2a2a;transform:scaleX(0.820);">Autoscale</div>
<div class="b" style="left:674.00px;top:292.50px;width:111.50px;height:61.00px;background:#f2f2f2;"></div>
<div class="b" style="left:787.00px;top:300.50px;width:6.50px;height:46.00px;background:#c8c8c8;border:1px solid #d8d8d8;"></div>
<svg width="800" height="517"><path d="M788.5 298.5 L790.2 296.5 L792 298.5" stroke="#505050" stroke-width="0.8" fill="none"/><path d="M788.5 348.8 L790.2 350.8 L792 348.8" stroke="#505050" stroke-width="0.8" fill="none"/></svg>
<svg width="800" height="517"><polygon points="696,295 772,295 772,340 758.5,352.6 683,352.6 683,306.6" fill="#000"/><polygon points="684,351 684,344 684.0,338.1 685.3,341.1 686.6,340.1 687.9,337.1 689.2,340.4 690.5,341.0 691.8,339.8 693.1,341.0 694.4,338.8 695.7,339.5 697.0,340.3 698.3,339.7 699.6,338.4 700.9,339.8 702.2,339.7 703.5,339.8 704.8,338.8 706.1,338.9 707.4,337.4 708.7,338.5 710.0,339.1 711.3,338.4 712.6,338.4 713.9,338.9 715.2,338.7 716.5,338.3 719,350 717,351" fill="#34dcc0"/><polygon points="732,351 732,340 732.0,337.2 733.3,338.1 734.6,338.7 735.9,336.9 737.2,339.0 738.5,337.6 739.8,339.7 741.1,336.0 742.4,337.4 743.7,339.7 745.0,336.8 746.3,339.9 747.6,338.1 748.9,338.2 750.2,339.2 751.5,337.9 752.8,338.1 754.1,338.1 755.4,338.9 756.7,338.5 758.0,338.9 759.3,339.3 760.6,340.1 761.9,338.5 763.2,338.4 764.5,338.4 765.8,337.2 766,342 758,351" fill="#34dcc0"/><rect x="748.6" y="345.1" width="1.3" height="1.3" fill="#a8f8e8" opacity="0.75"/><rect x="699.4" y="348.9" width="1.3" height="1.3" fill="#a8f8e8" opacity="0.75"/><rect x="688.0" y="349.0" width="1.3" height="1.3" fill="#a8f8e8" opacity="0.75"/><rect x="735.5" y="343.0" width="1.3" height="1.3" fill="#a8f8e8" opacity="0.75"/><rect x="698.1" y="347.1" width="1.3" height="1.3" fill="#a8f8e8" opacity="0.75"/><rect x="690.7" y="344.7" width="1.3" height="1.3" fill="#a8f8e8" opacity="0.75"/><rect x="693.4" y="342.1" width="1.3" height="1.3" fill="#a8f8e8" opacity="0.75"/><rect x="704.9" y="346.5" width="1.3" height="1.3" fill="#a8f8e8" opacity="0.75"/><rect x="687.1" y="348.3" width="1.3" height="1.3" fill="#a8f8e8" opacity="0.75"/><rect x="734.8" y="343.2" width="1.3" height="1.3" fill="#a8f8e8" opacity="0.75"/><rect x="741.4" y="341.5" width="1.3" height="1.3" fill="#a8f8e8" opacity="0.75"/><rect x="705.0" y="345.3" width="1.3" height="1.3" fill="#a8f8e8" opacity="0.75"/><rect x="752.5" y="346.7" width="1.3" height="1.3" fill="#a8f8e8" opacity="0.75"/><rect x="688.1" y="349.2" width="1.3" height="1.3" fill="#a8f8e8" opacity="0.75"/><rect x="697.2" y="342.6" width="1.3" height="1.3" fill="#a8f8e8" opacity="0.75"/><rect x="690.6" y="344.5" width="1.3" height="1.3" fill="#a8f8e8" opacity="0.75"/><rect x="701.7" y="344.8" width="1.3" height="1.3" fill="#a8f8e8" opacity="0.75"/><rect x="712.6" y="344.6" width="1.3" height="1.3" fill="#a8f8e8" opacity="0.75"/><rect x="711.9" y="345.1" width="1.3" height="1.3" fill="#a8f8e8" opacity="0.75"/><rect x="736.9" y="344.6" width="1.3" height="1.3" fill="#a8f8e8" opacity="0.75"/><rect x="708.4" y="344.4" width="1.3" height="1.3" fill="#a8f8e8" opacity="0.75"/><rect x="691.1" y="344.9" width="1.3" height="1.3" fill="#a8f8e8" opacity="0.75"/><rect x="697.6" y="343.7" width="1.3" height="1.3" fill="#a8f8e8" opacity="0.75"/><rect x="734.9" y="343.2" width="1.3" height="1.3" fill="#a8f8e8" opacity="0.75"/><rect x="749.8" y="342.3" width="1.3" height="1.3" fill="#a8f8e8" opacity="0.75"/><rect x="757.6" y="343.9" width="1.3" height="1.3" fill="#a8f8e8" opacity="0.75"/><rect x="706.3" y="343.9" width="1.3" height="1.3" fill="#a8f8e8" opacity="0.75"/><rect x="759.8" y="346.9" width="1.3" height="1.3" fill="#a8f8e8" opacity="0.75"/><rect x="759.5" y="349.4" width="1.3" height="1.3" fill="#a8f8e8" opacity="0.75"/><rect x="748.4" y="341.4" width="1.3" height="1.3" fill="#a8f8e8" opacity="0.75"/><rect x="749.2" y="343.2" width="1.3" height="1.3" fill="#a8f8e8" opacity="0.75"/><rect x="711.4" y="346.7" width="1.3" height="1.3" fill="#a8f8e8" opacity="0.75"/><rect x="710.3" y="344.3" width="1.3" height="1.3" fill="#a8f8e8" opacity="0.75"/><rect x="757.7" y="341.2" width="1.3" height="1.3" fill="#a8f8e8" opacity="0.75"/><rect x="686.6" y="346.5" width="1.3" height="1.3" fill="#a8f8e8" opacity="0.75"/><rect x="691.5" y="343.2" width="1.3" height="1.3" fill="#a8f8e8" opacity="0.75"/><rect x="706.5" y="341.2" width="1.3" height="1.3" fill="#a8f8e8" opacity="0.75"/><rect x="715.8" y="349.3" width="1.3" height="1.3" fill="#a8f8e8" opacity="0.75"/><rect x="753.0" y="341.4" width="1.3" height="1.3" fill="#a8f8e8" opacity="0.75"/><rect x="763.1" y="348.7" width="1.3" height="1.3" fill="#a8f8e8" opacity="0.75"/><rect x="752.8" y="342.5" width="1.3" height="1.3" fill="#a8f8e8" opacity="0.75"/><rect x="710.1" y="342.4" width="1.3" height="1.3" fill="#a8f8e8" opacity="0.75"/><rect x="743.3" y="347.1" width="1.3" height="1.3" fill="#a8f8e8" opacity="0.75"/><rect x="706.8" y="349.2" width="1.3" height="1.3" fill="#a8f8e8" opacity="0.75"/><rect x="742.5" y="347.1" width="1.3" height="1.3" fill="#a8f8e8" opacity="0.75"/><rect x="752.7" y="345.7" width="1.3" height="1.3" fill="#a8f8e8" opacity="0.75"/><rect x="746.5" y="348.8" width="1.3" height="1.3" fill="#a8f8e8" opacity="0.75"/><rect x="690.6" y="341.4" width="1.3" height="1.3" fill="#a8f8e8" opacity="0.75"/><rect x="703.7" y="348.8" width="1.3" height="1.3" fill="#a8f8e8" opacity="0.75"/><rect x="711.0" y="344.2" width="1.3" height="1.3" fill="#a8f8e8" opacity="0.75"/><rect x="749.7" y="344.9" width="1.3" height="1.3" fill="#a8f8e8" opacity="0.75"/><rect x="745.5" y="342.2" width="1.3" height="1.3" fill="#a8f8e8" opacity="0.75"/><rect x="744.2" y="345.0" width="1.3" height="1.3" fill="#a8f8e8" opacity="0.75"/><rect x="695.7" y="348.4" width="1.3" height="1.3" fill="#a8f8e8" opacity="0.75"/><rect x="696.3" y="347.5" width="1.3" height="1.3" fill="#a8f8e8" opacity="0.75"/><rect x="685.9" y="349.1" width="1.3" height="1.3" fill="#a8f8e8" opacity="0.75"/><rect x="684" y="349.8" width="74" height="2.2" fill="#304848"/><rect x="737.4" y="350.3" width="2.3" height="1.5" fill="#d03848" opacity="0.85"/><rect x="697.5" y="350.3" width="4.8" height="1.5" fill="#d03848" opacity="0.85"/><rect x="716.8" y="350.3" width="3.7" height="1.5" fill="#d03848" opacity="0.85"/><rect x="714.3" y="350.3" width="2.0" height="1.5" fill="#d03848" opacity="0.85"/><rect x="690.3" y="350.3" width="2.8" height="1.5" fill="#d03848" opacity="0.85"/><rect x="693.9" y="350.3" width="3.2" height="1.5" fill="#d03848" opacity="0.85"/><rect x="712.4" y="350.3" width="4.3" height="1.5" fill="#d03848" opacity="0.85"/><rect x="687.1" y="350.3" width="4.0" height="1.5" fill="#d03848" opacity="0.85"/><rect x="702.5" y="350.3" width="3.9" height="1.5" fill="#d03848" opacity="0.85"/><rect x="708.9" y="350.3" width="2.2" height="1.5" fill="#d03848" opacity="0.85"/><rect x="735.5" y="350.3" width="2.2" height="1.5" fill="#d03848" opacity="0.85"/><rect x="742.1" y="350.3" width="3.0" height="1.5" fill="#d03848" opacity="0.85"/><rect x="692.9" y="350.3" width="3.8" height="1.5" fill="#d03848" opacity="0.85"/><rect x="732.1" y="350.3" width="5.0" height="1.5" fill="#d03848" opacity="0.85"/><defs><linearGradient id="pk3" x1="0" y1="0" x2="0" y2="1"><stop offset="0" stop-color="#c89068"/><stop offset="0.12" stop-color="#b8d040"/><stop offset="0.32" stop-color="#70e030"/><stop offset="0.7" stop-color="#40cc48"/><stop offset="1" stop-color="#30c8a0"/></linearGradient></defs><rect x="716.5" y="322.5" width="18" height="28" fill="url(#pk3)"/><rect x="716.5" y="322.5" width="8" height="5" fill="#b8a8a0" opacity="0.6"/><ellipse cx="726.5" cy="318.5" rx="4.5" ry="3.5" fill="#c02028" opacity="0.85"/><polygon points="720.5,350.5 724,327 727.5,350.5" fill="#000"/><path d="M678.5 306 L685.5 299.5 L689 302 L682 308.2 Z" fill="#3a88d8"/><path d="M678 308.3 L682.5 308.3" stroke="#5a98d8" stroke-width="0.8"/></svg>
<div class="t " style="left:690.00px;transform-origin:0 50%;top:314.02px;font-size:7.5px;line-height:9.75px;color:#f0f0f0;transform:scaleX(0.730);">7/10/2022 22:44:28.301733</div>
<div class="t " style="left:681.00px;transform-origin:0 50%;top:357.77px;font-size:8.2px;line-height:10.66px;color:#2a2a2a;transform:scaleX(0.687);">CF</div>
<div class="t " style="left:691.00px;transform-origin:0 50%;top:357.77px;font-size:8.2px;line-height:10.66px;color:#2a2a2a;transform:scaleX(0.741);">1.000 GHz</div>
<div class="t " style="left:734.00px;transform-origin:0 50%;top:357.77px;font-size:8.2px;line-height:10.66px;color:#2a2a2a;transform:scaleX(0.784);">Span</div>
<div class="t " style="left:754.00px;transform-origin:0 50%;top:357.77px;font-size:8.2px;line-height:10.66px;color:#2a2a2a;transform:scaleX(0.732);">40.00 MHz</div>
<div class="b" style="left:2.00px;top:372.50px;width:796.00px;height:1.80px;background:#d4d4d4;"></div>
<div class="b" style="left:2.00px;top:385.00px;width:198.00px;height:94.00px;background:#ffffff;"></div>
<div class="b" style="left:0.50px;top:374.30px;width:200.00px;height:10.90px;background:linear-gradient(#b4b4b4 0,#c8c8c8 1px,#c4c4c4 100%);"></div>
<div class="b" style="left:5.50px;top:376.10px;width:7.50px;height:7.80px;background:linear-gradient(#26406e 0,#26406e 25%,#3a78c0 35%,#4a88d0 100%);border-radius:1px;"></div>
<div class="b" style="left:7.10px;top:378.90px;width:4.3px;height:4.30px;border:1px solid #78a8e0;border-bottom:none;border-radius:2px 2px 0 0;opacity:0.7"></div>
<div class="t bd" style="left:16.00px;transform-origin:0 50%;top:374.90px;font-size:9px;line-height:11.70px;color:#f2f2f2;text-shadow:0 0 1px #808080;transform:scaleX(0.788);">RF I&amp;Q vs Time (Source 4)</div>
<div class="b" style="left:179.00px;top:375.80px;width:10.50px;height:8.40px;background:#cdcdcd;border:1px solid #dadada;"></div>
<div class="b" style="left:190.00px;top:375.80px;width:10.50px;height:8.40px;background:#cdcdcd;border:1px solid #dadada;"></div>
<svg width="800" height="517"><path d="M48 391.8 L53 391.8 L50.5 394.8 Z" fill="#707070"/></svg>
<div class="t " style="left:55.00px;transform-origin:0 50%;top:389.17px;font-size:8.2px;line-height:10.66px;color:#2a2a2a;transform:scaleX(0.839);">I Trace</div>
<div class="b" style="left:102.50px;top:390.00px;width:7.50px;height:7.20px;background:linear-gradient(#eef6fc,#c8e0f0);border:1px solid #7aa0c0;"></div>
<svg width="800" height="517"><path d="M104.30 393.60 L105.70 395.20 L108.40 391.60" fill="none" stroke="#2a5a90" stroke-width="1"/></svg>
<div class="t " style="left:112.00px;transform-origin:0 50%;top:388.87px;font-size:8.2px;line-height:10.66px;color:#383838;transform:scaleX(0.757);">Show</div>
<div class="t " style="left:133.00px;transform-origin:0 50%;top:389.07px;font-size:8.2px;line-height:10.66px;color:#2a2a2a;transform:scaleX(0.748);">+Peak Normal</div>
<div class="b" style="left:174.00px;top:387.50px;width:20.50px;height:11.00px;background:linear-gradient(#f8fcfe,#e4eef4);border:1px solid #9ab8c8;border-radius:1px;"></div>
<div class="t " style="left:84.25px;width:200px;text-align:center;transform-origin:50% 50%;top:389.27px;font-size:8.2px;line-height:10.66px;color:#2a2a2a;transform:scaleX(0.868);">Clear</div>
<div class="t " style="left:16.00px;transform-origin:0 50%;top:401.07px;font-size:8.2px;line-height:10.66px;color:#2a2a2a;transform:scaleX(0.744);">100 mV</div>
<div class="t " style="left:11.00px;transform-origin:0 50%;top:418.77px;font-size:8.2px;line-height:10.66px;color:#2a2a2a;transform:scaleX(0.764);">Position:</div>
<div class="t " style="left:13.00px;transform-origin:0 50%;top:427.57px;font-size:8.2px;line-height:10.66px;color:#2a2a2a;transform:scaleX(0.815);">0.000 V</div>
<div class="t " style="left:6.00px;transform-origin:0 50%;top:440.17px;font-size:8.2px;line-height:10.66px;color:#2a2a2a;transform:scaleX(0.775);">-100 mV</div>
<div class="b" style="left:6.00px;top:453.40px;width:36.50px;height:11.90px;background:linear-gradient(#f8fcfe,#e4eef4);border:1px solid #9ab8c8;border-radius:1px;"></div>
<div class="t " style="left:-75.75px;width:200px;text-align:center;transform-origin:50% 50%;top:455.62px;font-size:8.2px;line-height:10.66px;color:#2a2a2a;transform:scaleX(0.820);">Autoscale</div>
<div class="b" style="left:53.70px;top:400.80px;width:140.50px;height:50.40px;background:#000;"></div>
<svg width="800" height="517"><line x1="67.75" y1="400.8" x2="67.75" y2="451.2" stroke="#808080" stroke-width="0.9"/><line x1="81.80" y1="400.8" x2="81.80" y2="451.2" stroke="#808080" stroke-width="0.9"/><line x1="95.85" y1="400.8" x2="95.85" y2="451.2" stroke="#808080" stroke-width="0.9"/><line x1="109.90" y1="400.8" x2="109.90" y2="451.2" stroke="#808080" stroke-width="0.9"/><line x1="123.95" y1="400.8" x2="123.95" y2="451.2" stroke="#808080" stroke-width="0.9"/><line x1="138.00" y1="400.8" x2="138.00" y2="451.2" stroke="#808080" stroke-width="0.9"/><line x1="152.05" y1="400.8" x2="152.05" y2="451.2" stroke="#808080" stroke-width="0.9"/><line x1="166.10" y1="400.8" x2="166.10" y2="451.2" stroke="#808080" stroke-width="0.9"/><line x1="180.15" y1="400.8" x2="180.15" y2="451.2" stroke="#808080" stroke-width="0.9"/><line x1="53.7" y1="405.84" x2="194.2" y2="405.84" stroke="#5a4c4c" stroke-width="0.9"/><line x1="53.7" y1="410.88" x2="194.2" y2="410.88" stroke="#5a4c4c" stroke-width="0.9"/><line x1="53.7" y1="415.92" x2="194.2" y2="415.92" stroke="#5a4c4c" stroke-width="0.9"/><line x1="53.7" y1="420.96" x2="194.2" y2="420.96" stroke="#5a4c4c" stroke-width="0.9"/><line x1="53.7" y1="426.00" x2="194.2" y2="426.00" stroke="#5a4c4c" stroke-width="0.9"/><line x1="53.7" y1="431.04" x2="194.2" y2="431.04" stroke="#5a4c4c" stroke-width="0.9"/><line x1="53.7" y1="436.08" x2="194.2" y2="436.08" stroke="#5a4c4c" stroke-width="0.9"/><line x1="53.7" y1="441.12" x2="194.2" y2="441.12" stroke="#5a4c4c" stroke-width="0.9"/><line x1="53.7" y1="446.16" x2="194.2" y2="446.16" stroke="#5a4c4c" stroke-width="0.9"/><clipPath id="c3_0"><rect x="53.7" y="400.8" width="140.5" height="50.4"/></clipPath><g clip-path="url(#c3_0)"><polyline points="53.7,427.2 54.4,427.2 55.1,427.3 55.8,427.5 56.5,427.7 57.2,428.0 57.9,428.2 58.6,428.4 59.3,428.4 60.0,428.4 60.7,428.2 61.4,427.9 62.1,427.5 62.8,426.9 63.5,426.3 64.2,425.7 64.9,425.1 65.6,424.5 66.3,424.1 67.0,423.9 67.8,423.9 68.5,424.0 69.2,424.2 69.9,424.6 70.6,425.1 71.3,425.5 72.0,426.0 72.7,426.3 73.4,426.5 74.1,426.6 74.8,426.5 75.5,426.2 76.2,425.9 76.9,425.5 77.6,425.1 78.3,424.7 79.0,424.5 79.7,424.5 80.4,424.6 81.1,425.1 81.8,425.8 82.5,426.6 83.2,427.7 83.9,428.8 84.6,429.9 85.3,431.0 86.0,431.8 86.7,432.4 87.4,432.7 88.1,432.6 88.8,432.1 89.5,431.2 90.2,430.0 90.9,428.6 91.6,426.9 92.3,425.2 93.0,423.4 93.7,421.8 94.4,420.4 95.1,419.4 95.8,418.6 96.6,418.2 97.3,418.3 98.0,418.6 98.7,419.3 99.4,420.2 100.1,421.3 100.8,422.6 101.5,423.8 102.2,425.0 102.9,426.0 103.6,427.0 104.3,427.7 105.0,428.2 105.7,428.5 106.4,428.6 107.1,428.6 107.8,428.4 108.5,428.1 109.2,427.7 109.9,427.3 110.6,426.9 111.3,426.5 112.0,426.1 112.7,425.8 113.4,425.5 114.1,425.2 114.8,425.1 115.5,425.0 116.2,424.9 116.9,425.0 117.6,425.1 118.3,425.3 119.0,425.7 119.7,426.1 120.4,426.5 121.1,427.1 121.8,427.7 122.5,428.3 123.2,428.9 124.0,429.4 124.7,429.8 125.4,430.1 126.1,430.2 126.8,430.1 127.5,429.8 128.2,429.3 128.9,428.6 129.6,427.8 130.3,426.8 131.0,425.8 131.7,424.7 132.4,423.7 133.1,422.8 133.8,422.1 134.5,421.5 135.2,421.2 135.9,421.2 136.6,421.4 137.3,421.9 138.0,422.6 138.7,423.4 139.4,424.3 140.1,425.3 140.8,426.3 141.5,427.2 142.2,428.0 142.9,428.6 143.6,429.1 144.3,429.4 145.0,429.5 145.7,429.4 146.4,429.1 147.1,428.7 147.8,428.2 148.5,427.7 149.2,427.1 149.9,426.6 150.6,426.1 151.3,425.6 152.1,425.3 152.8,425.0 153.5,424.9 154.2,424.8 154.9,424.8 155.6,424.8 156.3,424.9 157.0,425.0 157.7,425.0 158.4,425.1 159.1,425.1 159.8,425.0 160.5,424.9 161.2,424.7 161.9,424.4 162.6,424.1 163.3,423.7 164.0,423.4 164.7,423.0 165.4,422.7 166.1,422.5 166.8,422.4 167.5,422.4 168.2,422.5 168.9,422.9 169.6,423.4 170.3,424.0 171.0,424.9 171.7,425.8 172.4,426.9 173.1,428.0 173.8,429.1 174.5,430.1 175.2,431.1 175.9,431.8 176.6,432.4 177.3,432.7 178.0,432.7 178.7,432.5 179.4,432.0 180.2,431.3 180.9,430.4 181.6,429.3 182.3,428.2 183.0,427.0 183.7,425.9 184.4,424.8 185.1,423.9 185.8,423.2 186.5,422.6 187.2,422.3 187.9,422.2 188.6,422.3 189.3,422.6 190.0,423.0 190.7,423.6 191.4,424.2 192.1,424.8 192.8,425.4 193.5,426.0 194.2,426.5" fill="none" stroke="#4a90b0" stroke-width="1.1"/><polyline points="53.7,425.0 54.4,424.4 55.1,423.7 55.8,423.0 56.5,422.4 57.2,421.8 57.9,421.4 58.6,421.3 59.3,421.5 60.0,421.9 60.7,422.5 61.4,423.3 62.1,424.0 62.8,424.6 63.5,425.0 64.2,425.1 64.9,424.8 65.6,424.4 66.3,423.8 67.0,423.3 67.8,422.9 68.5,422.9 69.2,423.3 69.9,424.1 70.6,425.3 71.3,426.8 72.0,428.5 72.7,430.1 73.4,431.4 74.1,432.4 74.8,432.7 75.5,432.5 76.2,431.8 76.9,430.6 77.6,429.2 78.3,427.8 79.0,426.5 79.7,425.5 80.4,425.0 81.1,424.8 81.8,425.1 82.5,425.6 83.2,426.2 83.9,426.7 84.6,426.8 85.3,426.6 86.0,425.8 86.7,424.5 87.4,422.8 88.1,420.8 88.8,418.8 89.5,416.9 90.2,415.4 90.9,414.3 91.6,413.8 92.3,414.0 93.0,414.7 93.7,415.8 94.4,417.3 95.1,419.0 95.8,420.8 96.6,422.6 97.3,424.3 98.0,426.1 98.7,427.8 99.4,429.5 100.1,431.2 100.8,433.1 101.5,434.9 102.2,436.8 102.9,438.5 103.6,439.9 104.3,440.9 105.0,441.4 105.7,441.4 106.4,440.7 107.1,439.4 107.8,437.7 108.5,435.7 109.2,433.6 109.9,431.4 110.6,429.5 111.3,427.8 112.0,426.5 112.7,425.4 113.4,424.6 114.1,423.9 114.8,423.1 115.5,422.1 116.2,420.9 116.9,419.4 117.6,417.7 118.3,416.0 119.0,414.3 119.7,413.0 120.4,412.2 121.1,412.1 121.8,412.7 122.5,414.1 123.2,416.2 124.0,418.8 124.7,421.7 125.4,424.7 126.1,427.4 126.8,429.8 127.5,431.5 128.2,432.6 128.9,433.0 129.6,432.9 130.3,432.3 131.0,431.5 131.7,430.6 132.4,429.9 133.1,429.3 133.8,428.9 134.5,428.8 135.2,428.8 135.9,428.8 136.6,428.7 137.3,428.5 138.0,428.1 138.7,427.5 139.4,426.6 140.1,425.7 140.8,424.7 141.5,423.8 142.2,423.1 142.9,422.6 143.6,422.3 144.3,422.3 145.0,422.4 145.7,422.6 146.4,422.7 147.1,422.7 147.8,422.5 148.5,422.2 149.2,421.7 149.9,421.2 150.6,420.9 151.3,420.8 152.1,421.0 152.8,421.6 153.5,422.7 154.2,424.1 154.9,425.7 155.6,427.4 156.3,429.1 157.0,430.4 157.7,431.4 158.4,431.9 159.1,431.9 159.8,431.6 160.5,431.1 161.2,430.5 161.9,430.0 162.6,429.9 163.3,430.1 164.0,430.8 164.7,431.9 165.4,433.3 166.1,434.8 166.8,436.1 167.5,437.1 168.2,437.5 168.9,437.2 169.6,436.1 170.3,434.3 171.0,432.0 171.7,429.2 172.4,426.2 173.1,423.2 173.8,420.5 174.5,418.2 175.2,416.4 175.9,415.2 176.6,414.4 177.3,413.9 178.0,413.8 178.7,413.9 179.4,414.0 180.2,414.1 180.9,414.4 181.6,414.7 182.3,415.1 183.0,415.8 183.7,416.8 184.4,418.2 185.1,419.9 185.8,421.9 186.5,424.0 187.2,426.3 187.9,428.5 188.6,430.4 189.3,432.0 190.0,433.3 190.7,434.1 191.4,434.6 192.1,434.8 192.8,434.8 193.5,434.8 194.2,434.7" fill="none" stroke="#c4bc6c" stroke-width="1.1"/></g><path d="M123 451.5 L124.2 455 L125.4 451.5" stroke="#808080" stroke-width="0.8" fill="none"/></svg>
<div class="t " style="left:67.00px;transform-origin:0 50%;top:457.47px;font-size:8.2px;line-height:10.66px;color:#2a2a2a;transform:scaleX(0.764);">Position:</div>
<div class="t i" style="left:96.00px;transform-origin:0 50%;top:457.47px;font-size:8.2px;line-height:10.66px;color:#2a2a2a;transform:scaleX(0.765);">-3.730 u</div>
<div class="t " style="left:130.00px;transform-origin:0 50%;top:457.47px;font-size:8.2px;line-height:10.66px;color:#2a2a2a;transform:scaleX(0.703);">Scale:</div>
<div class="t i" style="left:154.00px;transform-origin:0 50%;top:457.47px;font-size:8.2px;line-height:10.66px;color:#2a2a2a;transform:scaleX(0.796);">7.460 us</div>
<div class="t " style="left:9.00px;transform-origin:0 50%;top:467.35px;font-size:7px;line-height:9.10px;color:#505050;transform:scaleX(0.791);">Max:</div>
<div class="t " style="left:29.00px;transform-origin:0 50%;top:467.35px;font-size:7px;line-height:9.10px;color:#505050;transform:scaleX(0.767);">83.64 mV</div>
<div class="t " style="left:81.00px;transform-origin:0 50%;top:467.35px;font-size:7px;line-height:9.10px;color:#505050;transform:scaleX(0.819);">580.0 ns</div>
<div class="t " style="left:110.00px;transform-origin:0 50%;top:467.35px;font-size:7px;line-height:9.10px;color:#505050;transform:scaleX(0.680);">Min:</div>
<div class="t " style="left:130.00px;transform-origin:0 50%;top:467.35px;font-size:7px;line-height:9.10px;color:#505050;transform:scaleX(0.805);">-67.20 mV</div>
<div class="t " style="left:180.00px;transform-origin:0 50%;top:467.35px;font-size:7px;line-height:9.10px;color:#505050;transform:scaleX(0.856);">1.400</div>
<div class="b" style="left:201.33px;top:385.00px;width:198.00px;height:94.00px;background:#ffffff;"></div>
<div class="b" style="left:199.83px;top:374.30px;width:200.00px;height:10.90px;background:linear-gradient(#b4b4b4 0,#c8c8c8 1px,#c4c4c4 100%);"></div>
<div class="b" style="left:204.83px;top:376.10px;width:7.50px;height:7.80px;background:linear-gradient(#26406e 0,#26406e 25%,#3a78c0 35%,#4a88d0 100%);border-radius:1px;"></div>
<div class="b" style="left:206.43px;top:378.90px;width:4.3px;height:4.30px;border:1px solid #78a8e0;border-bottom:none;border-radius:2px 2px 0 0;opacity:0.7"></div>
<div class="t bd" style="left:215.33px;transform-origin:0 50%;top:374.90px;font-size:9px;line-height:11.70px;color:#f2f2f2;text-shadow:0 0 1px #808080;transform:scaleX(0.788);">RF I&amp;Q vs Time (Source 3)</div>
<div class="b" style="left:378.33px;top:375.80px;width:10.50px;height:8.40px;background:#cdcdcd;border:1px solid #dadada;"></div>
<div class="b" style="left:389.33px;top:375.80px;width:10.50px;height:8.40px;background:#cdcdcd;border:1px solid #dadada;"></div>
<svg width="800" height="517"><path d="M247.33 391.8 L252.33 391.8 L249.83 394.8 Z" fill="#707070"/></svg>
<div class="t " style="left:254.33px;transform-origin:0 50%;top:389.17px;font-size:8.2px;line-height:10.66px;color:#2a2a2a;transform:scaleX(0.839);">I Trace</div>
<div class="b" style="left:301.83px;top:390.00px;width:7.50px;height:7.20px;background:linear-gradient(#eef6fc,#c8e0f0);border:1px solid #7aa0c0;"></div>
<svg width="800" height="517"><path d="M303.63 393.60 L305.03 395.20 L307.73 391.60" fill="none" stroke="#2a5a90" stroke-width="1"/></svg>
<div class="t " style="left:311.33px;transform-origin:0 50%;top:388.87px;font-size:8.2px;line-height:10.66px;color:#383838;transform:scaleX(0.757);">Show</div>
<div class="t " style="left:332.33px;transform-origin:0 50%;top:389.07px;font-size:8.2px;line-height:10.66px;color:#2a2a2a;transform:scaleX(0.748);">+Peak Normal</div>
<div class="b" style="left:373.33px;top:387.50px;width:20.50px;height:11.00px;background:linear-gradient(#f8fcfe,#e4eef4);border:1px solid #9ab8c8;border-radius:1px;"></div>
<div class="t " style="left:283.58px;width:200px;text-align:center;transform-origin:50% 50%;top:389.27px;font-size:8.2px;line-height:10.66px;color:#2a2a2a;transform:scaleX(0.868);">Clear</div>
<div class="t " style="left:215.33px;transform-origin:0 50%;top:401.07px;font-size:8.2px;line-height:10.66px;color:#2a2a2a;transform:scaleX(0.744);">100 mV</div>
<div class="t " style="left:210.33px;transform-origin:0 50%;top:418.77px;font-size:8.2px;line-height:10.66px;color:#2a2a2a;transform:scaleX(0.764);">Position:</div>
<div class="t " style="left:212.33px;transform-origin:0 50%;top:427.57px;font-size:8.2px;line-height:10.66px;color:#2a2a2a;transform:scaleX(0.815);">0.000 V</div>
<div class="t " style="left:205.33px;transform-origin:0 50%;top:440.17px;font-size:8.2px;line-height:10.66px;color:#2a2a2a;transform:scaleX(0.775);">-100 mV</div>
<div class="b" style="left:205.33px;top:453.40px;width:36.50px;height:11.90px;background:linear-gradient(#f8fcfe,#e4eef4);border:1px solid #9ab8c8;border-radius:1px;"></div>
<div class="t " style="left:123.58px;width:200px;text-align:center;transform-origin:50% 50%;top:455.62px;font-size:8.2px;line-height:10.66px;color:#2a2a2a;transform:scaleX(0.820);">Autoscale</div>
<div class="b" style="left:253.03px;top:400.80px;width:140.50px;height:50.40px;background:#000;"></div>
<svg width="800" height="517"><line x1="267.08" y1="400.8" x2="267.08" y2="451.2" stroke="#808080" stroke-width="0.9"/><line x1="281.13" y1="400.8" x2="281.13" y2="451.2" stroke="#808080" stroke-width="0.9"/><line x1="295.18" y1="400.8" x2="295.18" y2="451.2" stroke="#808080" stroke-width="0.9"/><line x1="309.23" y1="400.8" x2="309.23" y2="451.2" stroke="#808080" stroke-width="0.9"/><line x1="323.28" y1="400.8" x2="323.28" y2="451.2" stroke="#808080" stroke-width="0.9"/><line x1="337.33" y1="400.8" x2="337.33" y2="451.2" stroke="#808080" stroke-width="0.9"/><line x1="351.38" y1="400.8" x2="351.38" y2="451.2" stroke="#808080" stroke-width="0.9"/><line x1="365.43" y1="400.8" x2="365.43" y2="451.2" stroke="#808080" stroke-width="0.9"/><line x1="379.48" y1="400.8" x2="379.48" y2="451.2" stroke="#808080" stroke-width="0.9"/><line x1="253.03000000000003" y1="405.84" x2="393.53" y2="405.84" stroke="#5a4c4c" stroke-width="0.9"/><line x1="253.03000000000003" y1="410.88" x2="393.53" y2="410.88" stroke="#5a4c4c" stroke-width="0.9"/><line x1="253.03000000000003" y1="415.92" x2="393.53" y2="415.92" stroke="#5a4c4c" stroke-width="0.9"/><line x1="253.03000000000003" y1="420.96" x2="393.53" y2="420.96" stroke="#5a4c4c" stroke-width="0.9"/><line x1="253.03000000000003" y1="426.00" x2="393.53" y2="426.00" stroke="#5a4c4c" stroke-width="0.9"/><line x1="253.03000000000003" y1="431.04" x2="393.53" y2="431.04" stroke="#5a4c4c" stroke-width="0.9"/><line x1="253.03000000000003" y1="436.08" x2="393.53" y2="436.08" stroke="#5a4c4c" stroke-width="0.9"/><line x1="253.03000000000003" y1="441.12" x2="393.53" y2="441.12" stroke="#5a4c4c" stroke-width="0.9"/><line x1="253.03000000000003" y1="446.16" x2="393.53" y2="446.16" stroke="#5a4c4c" stroke-width="0.9"/><clipPath id="c3_1"><rect x="253.0" y="400.8" width="140.5" height="50.4"/></clipPath><g clip-path="url(#c3_1)"><polyline points="253.0,425.2 253.7,425.2 254.4,425.1 255.1,425.1 255.8,425.1 256.5,425.1 257.2,425.2 257.9,425.3 258.7,425.5 259.4,425.8 260.1,426.0 260.8,426.3 261.5,426.5 262.2,426.7 262.9,426.8 263.6,426.8 264.3,426.8 265.0,426.7 265.7,426.6 266.4,426.4 267.1,426.3 267.8,426.2 268.5,426.1 269.2,426.0 269.9,425.8 270.6,425.6 271.3,425.4 272.0,425.0 272.7,424.5 273.4,423.8 274.1,423.1 274.8,422.4 275.5,421.7 276.2,421.0 276.9,420.5 277.6,420.2 278.3,420.2 279.0,420.4 279.7,420.9 280.4,421.7 281.1,422.8 281.8,423.9 282.5,425.2 283.2,426.4 283.9,427.5 284.6,428.4 285.3,429.1 286.0,429.6 286.8,429.8 287.5,429.9 288.2,429.7 288.9,429.4 289.6,429.2 290.3,428.9 291.0,428.6 291.7,428.5 292.4,428.4 293.1,428.4 293.8,428.4 294.5,428.4 295.2,428.4 295.9,428.2 296.6,427.9 297.3,427.5 298.0,426.9 298.7,426.3 299.4,425.6 300.1,425.0 300.8,424.4 301.5,424.1 302.2,424.0 302.9,424.1 303.6,424.5 304.3,425.2 305.0,426.0 305.7,426.9 306.4,427.9 307.1,428.8 307.8,429.6 308.5,430.1 309.2,430.4 309.9,430.5 310.6,430.3 311.3,429.9 312.0,429.3 312.7,428.6 313.4,427.8 314.1,427.0 314.9,426.3 315.6,425.7 316.3,425.1 317.0,424.7 317.7,424.4 318.4,424.1 319.1,424.0 319.8,423.9 320.5,423.9 321.2,423.9 321.9,423.9 322.6,424.1 323.3,424.2 324.0,424.5 324.7,424.9 325.4,425.4 326.1,425.9 326.8,426.5 327.5,427.2 328.2,427.8 328.9,428.4 329.6,428.9 330.3,429.3 331.0,429.5 331.7,429.6 332.4,429.5 333.1,429.3 333.8,428.9 334.5,428.4 335.2,427.9 335.9,427.3 336.6,426.6 337.3,425.9 338.0,425.2 338.7,424.5 339.4,423.7 340.1,423.0 340.8,422.2 341.5,421.5 342.2,420.8 342.9,420.1 343.7,419.6 344.4,419.3 345.1,419.1 345.8,419.2 346.5,419.5 347.2,420.1 347.9,420.9 348.6,421.8 349.3,422.9 350.0,424.0 350.7,425.1 351.4,426.1 352.1,426.9 352.8,427.6 353.5,427.9 354.2,428.1 354.9,428.0 355.6,427.8 356.3,427.5 357.0,427.2 357.7,427.0 358.4,426.8 359.1,426.7 359.8,426.8 360.5,427.0 361.2,427.3 361.9,427.6 362.6,427.9 363.3,428.0 364.0,428.1 364.7,428.0 365.4,427.8 366.1,427.3 366.8,426.8 367.5,426.2 368.2,425.6 368.9,425.1 369.6,424.7 370.3,424.5 371.0,424.5 371.8,424.6 372.5,424.9 373.2,425.2 373.9,425.6 374.6,426.0 375.3,426.2 376.0,426.3 376.7,426.2 377.4,426.0 378.1,425.6 378.8,425.0 379.5,424.5 380.2,424.0 380.9,423.5 381.6,423.3 382.3,423.3 383.0,423.6 383.7,424.1 384.4,424.8 385.1,425.7 385.8,426.8 386.5,428.0 387.2,429.1 387.9,430.2 388.6,431.1 389.3,431.9 390.0,432.5 390.7,432.9 391.4,433.1 392.1,433.2 392.8,433.1 393.5,432.9" fill="none" stroke="#4a90b0" stroke-width="1.1"/><polyline points="253.0,418.7 253.7,420.0 254.4,421.8 255.1,423.9 255.8,425.9 256.5,427.6 257.2,428.8 257.9,429.4 258.7,429.5 259.4,429.2 260.1,428.8 260.8,428.5 261.5,428.5 262.2,428.9 262.9,429.6 263.6,430.7 264.3,431.7 265.0,432.5 265.7,432.8 266.4,432.4 267.1,431.2 267.8,429.3 268.5,427.0 269.2,424.4 269.9,422.1 270.6,420.4 271.3,419.4 272.0,419.4 272.7,420.3 273.4,421.9 274.1,423.9 274.8,426.1 275.5,428.0 276.2,429.5 276.9,430.4 277.6,430.7 278.3,430.6 279.0,430.4 279.7,430.2 280.4,430.3 281.1,430.9 281.8,432.0 282.5,433.4 283.2,434.9 283.9,436.1 284.6,436.8 285.3,436.7 286.0,435.6 286.8,433.6 287.5,430.8 288.2,427.4 288.9,424.0 289.6,420.9 290.3,418.3 291.0,416.6 291.7,415.7 292.4,415.6 293.1,416.2 293.8,417.0 294.5,417.8 295.2,418.4 295.9,418.6 296.6,418.5 297.3,418.1 298.0,417.8 298.7,417.7 299.4,418.1 300.1,419.2 300.8,421.0 301.5,423.4 302.2,426.2 302.9,429.1 303.6,431.7 304.3,433.7 305.0,434.8 305.7,435.0 306.4,434.4 307.1,433.0 307.8,431.2 308.5,429.4 309.2,427.7 309.9,426.4 310.6,425.7 311.3,425.4 312.0,425.4 312.7,425.6 313.4,425.6 314.1,425.3 314.9,424.6 315.6,423.4 316.3,421.9 317.0,420.2 317.7,418.7 318.4,417.5 319.1,416.9 319.8,417.1 320.5,417.9 321.2,419.2 321.9,421.0 322.6,422.8 323.3,424.4 324.0,425.7 324.7,426.4 325.4,426.6 326.1,426.4 326.8,426.0 327.5,425.6 328.2,425.3 328.9,425.4 329.6,425.9 330.3,426.9 331.0,428.2 331.7,429.6 332.4,430.9 333.1,432.0 333.8,432.7 334.5,433.0 335.2,432.9 335.9,432.5 336.6,432.0 337.3,431.5 338.0,431.2 338.7,431.1 339.4,431.3 340.1,431.6 340.8,432.1 341.5,432.4 342.2,432.6 342.9,432.3 343.7,431.7 344.4,430.6 345.1,429.1 345.8,427.5 346.5,425.7 347.2,424.1 347.9,422.6 348.6,421.5 349.3,420.7 350.0,420.2 350.7,420.0 351.4,420.0 352.1,420.1 352.8,420.3 353.5,420.6 354.2,421.0 354.9,421.4 355.6,422.1 356.3,423.0 357.0,424.1 357.7,425.4 358.4,426.9 359.1,428.5 359.8,430.0 360.5,431.5 361.2,432.7 361.9,433.7 362.6,434.3 363.3,434.5 364.0,434.5 364.7,434.1 365.4,433.4 366.1,432.5 366.8,431.4 367.5,430.0 368.2,428.4 368.9,426.7 369.6,424.8 370.3,422.9 371.0,421.0 371.8,419.2 372.5,417.6 373.2,416.4 373.9,415.5 374.6,415.0 375.3,415.0 376.0,415.3 376.7,415.8 377.4,416.6 378.1,417.5 378.8,418.5 379.5,419.6 380.2,420.6 380.9,421.8 381.6,423.0 382.3,424.4 383.0,425.9 383.7,427.5 384.4,429.0 385.1,430.4 385.8,431.5 386.5,432.2 387.2,432.3 387.9,431.9 388.6,431.0 389.3,429.7 390.0,428.2 390.7,426.6 391.4,425.2 392.1,424.0 392.8,423.3 393.5,422.9" fill="none" stroke="#c4bc6c" stroke-width="1.1"/></g><path d="M322.33000000000004 451.5 L323.53000000000003 455 L324.73 451.5" stroke="#808080" stroke-width="0.8" fill="none"/></svg>
<div class="t " style="left:266.33px;transform-origin:0 50%;top:457.47px;font-size:8.2px;line-height:10.66px;color:#2a2a2a;transform:scaleX(0.764);">Position:</div>
<div class="t i" style="left:295.33px;transform-origin:0 50%;top:457.47px;font-size:8.2px;line-height:10.66px;color:#2a2a2a;transform:scaleX(0.765);">-3.730 u</div>
<div class="t " style="left:329.33px;transform-origin:0 50%;top:457.47px;font-size:8.2px;line-height:10.66px;color:#2a2a2a;transform:scaleX(0.703);">Scale:</div>
<div class="t i" style="left:353.33px;transform-origin:0 50%;top:457.47px;font-size:8.2px;line-height:10.66px;color:#2a2a2a;transform:scaleX(0.796);">7.460 us</div>
<div class="t " style="left:208.33px;transform-origin:0 50%;top:467.35px;font-size:7px;line-height:9.10px;color:#505050;transform:scaleX(0.791);">Max:</div>
<div class="t " style="left:228.33px;transform-origin:0 50%;top:467.35px;font-size:7px;line-height:9.10px;color:#505050;transform:scaleX(0.767);">73.09 mV</div>
<div class="t " style="left:280.33px;transform-origin:0 50%;top:467.35px;font-size:7px;line-height:9.10px;color:#505050;transform:scaleX(0.819);">1.400 us</div>
<div class="t " style="left:309.33px;transform-origin:0 50%;top:467.35px;font-size:7px;line-height:9.10px;color:#505050;transform:scaleX(0.680);">Min:</div>
<div class="t " style="left:329.33px;transform-origin:0 50%;top:467.35px;font-size:7px;line-height:9.10px;color:#505050;transform:scaleX(0.805);">-90.17 mV</div>
<div class="t " style="left:379.33px;transform-origin:0 50%;top:467.35px;font-size:7px;line-height:9.10px;color:#505050;transform:scaleX(0.856);">580.0</div>
<div class="b" style="left:400.67px;top:385.00px;width:198.00px;height:94.00px;background:#ffffff;"></div>
<div class="b" style="left:399.17px;top:374.30px;width:200.00px;height:10.90px;background:linear-gradient(#b4b4b4 0,#c8c8c8 1px,#c4c4c4 100%);"></div>
<div class="b" style="left:404.17px;top:376.10px;width:7.50px;height:7.80px;background:linear-gradient(#26406e 0,#26406e 25%,#3a78c0 35%,#4a88d0 100%);border-radius:1px;"></div>
<div class="b" style="left:405.77px;top:378.90px;width:4.3px;height:4.30px;border:1px solid #78a8e0;border-bottom:none;border-radius:2px 2px 0 0;opacity:0.7"></div>
<div class="t bd" style="left:414.67px;transform-origin:0 50%;top:374.90px;font-size:9px;line-height:11.70px;color:#f2f2f2;text-shadow:0 0 1px #808080;transform:scaleX(0.788);">RF I&amp;Q vs Time (Source 2)</div>
<div class="b" style="left:577.67px;top:375.80px;width:10.50px;height:8.40px;background:#cdcdcd;border:1px solid #dadada;"></div>
<div class="b" style="left:588.67px;top:375.80px;width:10.50px;height:8.40px;background:#cdcdcd;border:1px solid #dadada;"></div>
<svg width="800" height="517"><path d="M446.67 391.8 L451.67 391.8 L449.17 394.8 Z" fill="#707070"/></svg>
<div class="t " style="left:453.67px;transform-origin:0 50%;top:389.17px;font-size:8.2px;line-height:10.66px;color:#2a2a2a;transform:scaleX(0.839);">I Trace</div>
<div class="b" style="left:501.17px;top:390.00px;width:7.50px;height:7.20px;background:linear-gradient(#eef6fc,#c8e0f0);border:1px solid #7aa0c0;"></div>
<svg width="800" height="517"><path d="M502.97 393.60 L504.37 395.20 L507.07 391.60" fill="none" stroke="#2a5a90" stroke-width="1"/></svg>
<div class="t " style="left:510.67px;transform-origin:0 50%;top:388.87px;font-size:8.2px;line-height:10.66px;color:#383838;transform:scaleX(0.757);">Show</div>
<div class="t " style="left:531.67px;transform-origin:0 50%;top:389.07px;font-size:8.2px;line-height:10.66px;color:#2a2a2a;transform:scaleX(0.748);">+Peak Normal</div>
<div class="b" style="left:572.67px;top:387.50px;width:20.50px;height:11.00px;background:linear-gradient(#f8fcfe,#e4eef4);border:1px solid #9ab8c8;border-radius:1px;"></div>
<div class="t " style="left:482.92px;width:200px;text-align:center;transform-origin:50% 50%;top:389.27px;font-size:8.2px;line-height:10.66px;color:#2a2a2a;transform:scaleX(0.868);">Clear</div>
<div class="t " style="left:414.67px;transform-origin:0 50%;top:401.07px;font-size:8.2px;line-height:10.66px;color:#2a2a2a;transform:scaleX(0.744);">250 mV</div>
<div class="t " style="left:409.67px;transform-origin:0 50%;top:418.77px;font-size:8.2px;line-height:10.66px;color:#2a2a2a;transform:scaleX(0.764);">Position:</div>
<div class="t " style="left:411.67px;transform-origin:0 50%;top:427.57px;font-size:8.2px;line-height:10.66px;color:#2a2a2a;transform:scaleX(0.815);">0.000 V</div>
<div class="t " style="left:404.67px;transform-origin:0 50%;top:440.17px;font-size:8.2px;line-height:10.66px;color:#2a2a2a;transform:scaleX(0.775);">-250 mV</div>
<div class="b" style="left:404.67px;top:453.40px;width:36.50px;height:11.90px;background:linear-gradient(#f8fcfe,#e4eef4);border:1px solid #9ab8c8;border-radius:1px;"></div>
<div class="t " style="left:322.92px;width:200px;text-align:center;transform-origin:50% 50%;top:455.62px;font-size:8.2px;line-height:10.66px;color:#2a2a2a;transform:scaleX(0.820);">Autoscale</div>
<div class="b" style="left:452.37px;top:400.80px;width:140.50px;height:50.40px;background:#000;"></div>
<svg width="800" height="517"><line x1="466.42" y1="400.8" x2="466.42" y2="451.2" stroke="#808080" stroke-width="0.9"/><line x1="480.47" y1="400.8" x2="480.47" y2="451.2" stroke="#808080" stroke-width="0.9"/><line x1="494.52" y1="400.8" x2="494.52" y2="451.2" stroke="#808080" stroke-width="0.9"/><line x1="508.57" y1="400.8" x2="508.57" y2="451.2" stroke="#808080" stroke-width="0.9"/><line x1="522.62" y1="400.8" x2="522.62" y2="451.2" stroke="#808080" stroke-width="0.9"/><line x1="536.67" y1="400.8" x2="536.67" y2="451.2" stroke="#808080" stroke-width="0.9"/><line x1="550.72" y1="400.8" x2="550.72" y2="451.2" stroke="#808080" stroke-width="0.9"/><line x1="564.77" y1="400.8" x2="564.77" y2="451.2" stroke="#808080" stroke-width="0.9"/><line x1="578.82" y1="400.8" x2="578.82" y2="451.2" stroke="#808080" stroke-width="0.9"/><line x1="452.37" y1="405.84" x2="592.87" y2="405.84" stroke="#5a4c4c" stroke-width="0.9"/><line x1="452.37" y1="410.88" x2="592.87" y2="410.88" stroke="#5a4c4c" stroke-width="0.9"/><line x1="452.37" y1="415.92" x2="592.87" y2="415.92" stroke="#5a4c4c" stroke-width="0.9"/><line x1="452.37" y1="420.96" x2="592.87" y2="420.96" stroke="#5a4c4c" stroke-width="0.9"/><line x1="452.37" y1="426.00" x2="592.87" y2="426.00" stroke="#5a4c4c" stroke-width="0.9"/><line x1="452.37" y1="431.04" x2="592.87" y2="431.04" stroke="#5a4c4c" stroke-width="0.9"/><line x1="452.37" y1="436.08" x2="592.87" y2="436.08" stroke="#5a4c4c" stroke-width="0.9"/><line x1="452.37" y1="441.12" x2="592.87" y2="441.12" stroke="#5a4c4c" stroke-width="0.9"/><line x1="452.37" y1="446.16" x2="592.87" y2="446.16" stroke="#5a4c4c" stroke-width="0.9"/><clipPath id="c3_2"><rect x="452.4" y="400.8" width="140.5" height="50.4"/></clipPath><g clip-path="url(#c3_2)"><polyline points="452.4,425.9 453.1,425.6 453.8,425.7 454.5,426.0 455.2,426.5 455.9,427.0 456.6,427.6 457.3,428.1 458.0,428.3 458.7,428.2 459.4,427.8 460.1,427.2 460.8,426.4 461.5,425.5 462.2,424.7 462.9,424.1 463.6,423.7 464.3,423.6 465.0,423.7 465.7,423.9 466.4,424.3 467.1,424.6 467.8,424.8 468.5,424.8 469.2,424.6 469.9,424.2 470.6,423.8 471.3,423.3 472.0,422.9 472.7,422.7 473.4,422.8 474.1,423.3 474.9,424.0 475.6,424.9 476.3,426.0 477.0,427.0 477.7,427.9 478.4,428.6 479.1,428.9 479.8,428.8 480.5,428.4 481.2,427.7 481.9,426.9 482.6,426.0 483.3,425.2 484.0,424.6 484.7,424.2 485.4,424.0 486.1,424.0 486.8,424.1 487.5,424.2 488.2,424.3 488.9,424.2 489.6,423.9 490.3,423.5 491.0,423.0 491.7,422.5 492.4,422.1 493.1,421.9 493.8,422.1 494.5,422.6 495.2,423.4 495.9,424.5 496.6,425.7 497.3,427.0 498.0,428.1 498.7,429.0 499.4,429.6 500.1,429.9 500.8,429.7 501.5,429.3 502.2,428.7 502.9,428.1 503.7,427.4 504.4,426.9 505.1,426.6 505.8,426.5 506.5,426.6 507.2,426.7 507.9,426.9 508.6,427.0 509.3,426.9 510.0,426.7 510.7,426.3 511.4,425.8 512.1,425.2 512.8,424.7 513.5,424.4 514.2,424.3 514.9,424.5 515.6,425.0 516.3,425.7 517.0,426.6 517.7,427.5 518.4,428.3 519.1,429.0 519.8,429.4 520.5,429.5 521.2,429.2 521.9,428.7 522.6,428.1 523.3,427.3 524.0,426.7 524.7,426.2 525.4,425.9 526.1,425.9 526.8,426.0 527.5,426.4 528.2,426.7 528.9,427.1 529.6,427.4 530.3,427.5 531.0,427.4 531.8,427.2 532.5,426.9 533.2,426.6 533.9,426.3 534.6,426.1 535.3,426.2 536.0,426.4 536.7,426.8 537.4,427.2 538.1,427.7 538.8,428.1 539.5,428.2 540.2,428.1 540.9,427.8 541.6,427.1 542.3,426.2 543.0,425.1 543.7,424.0 544.4,423.1 545.1,422.3 545.8,421.8 546.5,421.6 547.2,421.7 547.9,422.1 548.6,422.7 549.3,423.3 550.0,424.0 550.7,424.6 551.4,425.1 552.1,425.5 552.8,425.8 553.5,426.1 554.2,426.3 554.9,426.6 555.6,427.0 556.3,427.5 557.0,428.0 557.7,428.5 558.4,429.0 559.1,429.3 559.9,429.3 560.6,429.0 561.3,428.4 562.0,427.4 562.7,426.2 563.4,424.8 564.1,423.4 564.8,422.1 565.5,420.9 566.2,420.0 566.9,419.4 567.6,419.2 568.3,419.4 569.0,419.8 569.7,420.4 570.4,421.1 571.1,422.0 571.8,422.8 572.5,423.7 573.2,424.5 573.9,425.3 574.6,426.1 575.3,427.0 576.0,427.9 576.7,428.9 577.4,429.9 578.1,430.8 578.8,431.6 579.5,432.2 580.2,432.4 580.9,432.4 581.6,431.9 582.3,431.1 583.0,430.0 583.7,428.7 584.4,427.1 585.1,425.6 585.8,424.2 586.5,422.9 587.2,421.9 588.0,421.3 588.7,420.9 589.4,420.8 590.1,420.9 590.8,421.3 591.5,421.8 592.2,422.4 592.9,423.1" fill="none" stroke="#4a90b0" stroke-width="1.1"/><polyline points="452.4,419.0 453.1,418.4 453.8,418.2 454.5,418.4 455.2,419.1 455.9,420.0 456.6,421.1 457.3,422.4 458.0,423.7 458.7,425.0 459.4,426.1 460.1,427.0 460.8,427.7 461.5,428.2 462.2,428.5 462.9,428.7 463.6,428.7 464.3,428.7 465.0,428.7 465.7,428.7 466.4,428.7 467.1,428.7 467.8,428.8 468.5,428.9 469.2,428.8 469.9,428.7 470.6,428.5 471.3,428.1 472.0,427.6 472.7,427.0 473.4,426.3 474.1,425.6 474.9,424.9 475.6,424.3 476.3,423.9 477.0,423.8 477.7,423.9 478.4,424.3 479.1,425.0 479.8,425.8 480.5,426.8 481.2,427.8 481.9,428.7 482.6,429.5 483.3,430.1 484.0,430.4 484.7,430.4 485.4,430.1 486.1,429.5 486.8,428.7 487.5,427.8 488.2,426.9 488.9,426.0 489.6,425.2 490.3,424.7 491.0,424.4 491.7,424.5 492.4,424.8 493.1,425.4 493.8,426.1 494.5,427.0 495.2,427.9 495.9,428.7 496.6,429.4 497.3,429.9 498.0,430.2 498.7,430.3 499.4,430.1 500.1,429.7 500.8,429.1 501.5,428.4 502.2,427.7 502.9,426.9 503.7,426.1 504.4,425.3 505.1,424.6 505.8,423.9 506.5,423.2 507.2,422.6 507.9,421.9 508.6,421.3 509.3,420.7 510.0,420.1 510.7,419.5 511.4,419.1 512.1,418.8 512.8,418.7 513.5,418.8 514.2,419.2 514.9,420.0 515.6,421.0 516.3,422.3 517.0,423.8 517.7,425.5 518.4,427.2 519.1,428.8 519.8,430.3 520.5,431.6 521.2,432.5 521.9,432.9 522.6,433.0 523.3,432.6 524.0,431.9 524.7,430.8 525.4,429.4 526.1,427.9 526.8,426.3 527.5,424.7 528.2,423.2 528.9,422.0 529.6,420.9 530.3,420.2 531.0,419.7 531.8,419.5 532.5,419.5 533.2,419.7 533.9,420.1 534.6,420.7 535.3,421.3 536.0,422.0 536.7,422.7 537.4,423.6 538.1,424.4 538.8,425.3 539.5,426.2 540.2,427.1 540.9,428.1 541.6,429.0 542.3,429.9 543.0,430.8 543.7,431.5 544.4,432.0 545.1,432.4 545.8,432.6 546.5,432.5 547.2,432.2 547.9,431.7 548.6,431.1 549.3,430.4 550.0,429.6 550.7,428.7 551.4,428.0 552.1,427.4 552.8,426.9 553.5,426.6 554.2,426.4 554.9,426.4 555.6,426.5 556.3,426.7 557.0,426.9 557.7,427.1 558.4,427.2 559.1,427.1 559.9,427.0 560.6,426.7 561.3,426.2 562.0,425.7 562.7,425.0 563.4,424.3 564.1,423.7 564.8,423.1 565.5,422.7 566.2,422.4 566.9,422.3 567.6,422.4 568.3,422.8 569.0,423.3 569.7,423.9 570.4,424.7 571.1,425.5 571.8,426.4 572.5,427.3 573.2,428.1 573.9,428.9 574.6,429.5 575.3,430.1 576.0,430.5 576.7,430.8 577.4,431.0 578.1,430.9 578.8,430.7 579.5,430.3 580.2,429.7 580.9,428.9 581.6,427.9 582.3,426.7 583.0,425.4 583.7,424.0 584.4,422.5 585.1,420.9 585.8,419.5 586.5,418.1 587.2,416.9 588.0,416.0 588.7,415.4 589.4,415.1 590.1,415.3 590.8,415.8 591.5,416.6 592.2,417.8 592.9,419.3" fill="none" stroke="#c4bc6c" stroke-width="1.1"/></g><path d="M521.6700000000001 451.5 L522.87 455 L524.07 451.5" stroke="#808080" stroke-width="0.8" fill="none"/></svg>
<div class="t " style="left:465.67px;transform-origin:0 50%;top:457.47px;font-size:8.2px;line-height:10.66px;color:#2a2a2a;transform:scaleX(0.764);">Position:</div>
<div class="t i" style="left:494.67px;transform-origin:0 50%;top:457.47px;font-size:8.2px;line-height:10.66px;color:#2a2a2a;transform:scaleX(0.765);">-3.730 u</div>
<div class="t " style="left:528.67px;transform-origin:0 50%;top:457.47px;font-size:8.2px;line-height:10.66px;color:#2a2a2a;transform:scaleX(0.703);">Scale:</div>
<div class="t i" style="left:552.67px;transform-origin:0 50%;top:457.47px;font-size:8.2px;line-height:10.66px;color:#2a2a2a;transform:scaleX(0.796);">7.460 us</div>
<div class="t " style="left:407.67px;transform-origin:0 50%;top:467.35px;font-size:7px;line-height:9.10px;color:#505050;transform:scaleX(0.791);">Max:</div>
<div class="t " style="left:427.67px;transform-origin:0 50%;top:467.35px;font-size:7px;line-height:9.10px;color:#505050;transform:scaleX(0.767);">148.2 mV</div>
<div class="t " style="left:479.67px;transform-origin:0 50%;top:467.35px;font-size:7px;line-height:9.10px;color:#505050;transform:scaleX(0.819);">580.0 ns</div>
<div class="t " style="left:508.67px;transform-origin:0 50%;top:467.35px;font-size:7px;line-height:9.10px;color:#505050;transform:scaleX(0.680);">Min:</div>
<div class="t " style="left:528.67px;transform-origin:0 50%;top:467.35px;font-size:7px;line-height:9.10px;color:#505050;transform:scaleX(0.805);">-120.8 mV</div>
<div class="t " style="left:578.67px;transform-origin:0 50%;top:467.35px;font-size:7px;line-height:9.10px;color:#505050;transform:scaleX(0.957);">-760.0</div>
<div class="b" style="left:600.00px;top:385.00px;width:198.00px;height:94.00px;background:#ffffff;"></div>
<div class="b" style="left:598.50px;top:374.30px;width:200.00px;height:10.90px;background:linear-gradient(#b4b4b4 0,#c8c8c8 1px,#c4c4c4 100%);"></div>
<div class="b" style="left:603.50px;top:376.10px;width:7.50px;height:7.80px;background:linear-gradient(#26406e 0,#26406e 25%,#3a78c0 35%,#4a88d0 100%);border-radius:1px;"></div>
<div class="b" style="left:605.10px;top:378.90px;width:4.3px;height:4.30px;border:1px solid #78a8e0;border-bottom:none;border-radius:2px 2px 0 0;opacity:0.7"></div>
<div class="t bd" style="left:614.00px;transform-origin:0 50%;top:374.90px;font-size:9px;line-height:11.70px;color:#f2f2f2;text-shadow:0 0 1px #808080;transform:scaleX(0.788);">RF I&amp;Q vs Time (Source 1)</div>
<div class="b" style="left:777.00px;top:375.80px;width:10.50px;height:8.40px;background:#cdcdcd;border:1px solid #dadada;"></div>
<div class="b" style="left:788.00px;top:375.80px;width:10.50px;height:8.40px;background:#cdcdcd;border:1px solid #dadada;"></div>
<svg width="800" height="517"><path d="M646 391.8 L651 391.8 L648.5 394.8 Z" fill="#707070"/></svg>
<div class="t " style="left:653.00px;transform-origin:0 50%;top:389.17px;font-size:8.2px;line-height:10.66px;color:#2a2a2a;transform:scaleX(0.839);">I Trace</div>
<div class="b" style="left:700.50px;top:390.00px;width:7.50px;height:7.20px;background:linear-gradient(#eef6fc,#c8e0f0);border:1px solid #7aa0c0;"></div>
<svg width="800" height="517"><path d="M702.30 393.60 L703.70 395.20 L706.40 391.60" fill="none" stroke="#2a5a90" stroke-width="1"/></svg>
<div class="t " style="left:710.00px;transform-origin:0 50%;top:388.87px;font-size:8.2px;line-height:10.66px;color:#383838;transform:scaleX(0.757);">Show</div>
<div class="t " style="left:731.00px;transform-origin:0 50%;top:389.07px;font-size:8.2px;line-height:10.66px;color:#2a2a2a;transform:scaleX(0.748);">+Peak Normal</div>
<div class="b" style="left:772.00px;top:387.50px;width:20.50px;height:11.00px;background:linear-gradient(#f8fcfe,#e4eef4);border:1px solid #9ab8c8;border-radius:1px;"></div>
<div class="t " style="left:682.25px;width:200px;text-align:center;transform-origin:50% 50%;top:389.27px;font-size:8.2px;line-height:10.66px;color:#2a2a2a;transform:scaleX(0.868);">Clear</div>
<div class="t " style="left:614.00px;transform-origin:0 50%;top:401.07px;font-size:8.2px;line-height:10.66px;color:#2a2a2a;transform:scaleX(0.744);">250 mV</div>
<div class="t " style="left:609.00px;transform-origin:0 50%;top:418.77px;font-size:8.2px;line-height:10.66px;color:#2a2a2a;transform:scaleX(0.764);">Position:</div>
<div class="t " style="left:611.00px;transform-origin:0 50%;top:427.57px;font-size:8.2px;line-height:10.66px;color:#2a2a2a;transform:scaleX(0.815);">0.000 V</div>
<div class="t " style="left:604.00px;transform-origin:0 50%;top:440.17px;font-size:8.2px;line-height:10.66px;color:#2a2a2a;transform:scaleX(0.775);">-250 mV</div>
<div class="b" style="left:604.00px;top:453.40px;width:36.50px;height:11.90px;background:linear-gradient(#f8fcfe,#e4eef4);border:1px solid #9ab8c8;border-radius:1px;"></div>
<div class="t " style="left:522.25px;width:200px;text-align:center;transform-origin:50% 50%;top:455.62px;font-size:8.2px;line-height:10.66px;color:#2a2a2a;transform:scaleX(0.820);">Autoscale</div>
<div class="b" style="left:651.70px;top:400.80px;width:140.50px;height:50.40px;background:#000;"></div>
<svg width="800" height="517"><line x1="665.75" y1="400.8" x2="665.75" y2="451.2" stroke="#808080" stroke-width="0.9"/><line x1="679.80" y1="400.8" x2="679.80" y2="451.2" stroke="#808080" stroke-width="0.9"/><line x1="693.85" y1="400.8" x2="693.85" y2="451.2" stroke="#808080" stroke-width="0.9"/><line x1="707.90" y1="400.8" x2="707.90" y2="451.2" stroke="#808080" stroke-width="0.9"/><line x1="721.95" y1="400.8" x2="721.95" y2="451.2" stroke="#808080" stroke-width="0.9"/><line x1="736.00" y1="400.8" x2="736.00" y2="451.2" stroke="#808080" stroke-width="0.9"/><line x1="750.05" y1="400.8" x2="750.05" y2="451.2" stroke="#808080" stroke-width="0.9"/><line x1="764.10" y1="400.8" x2="764.10" y2="451.2" stroke="#808080" stroke-width="0.9"/><line x1="778.15" y1="400.8" x2="778.15" y2="451.2" stroke="#808080" stroke-width="0.9"/><line x1="651.7" y1="405.84" x2="792.2" y2="405.84" stroke="#5a4c4c" stroke-width="0.9"/><line x1="651.7" y1="410.88" x2="792.2" y2="410.88" stroke="#5a4c4c" stroke-width="0.9"/><line x1="651.7" y1="415.92" x2="792.2" y2="415.92" stroke="#5a4c4c" stroke-width="0.9"/><line x1="651.7" y1="420.96" x2="792.2" y2="420.96" stroke="#5a4c4c" stroke-width="0.9"/><line x1="651.7" y1="426.00" x2="792.2" y2="426.00" stroke="#5a4c4c" stroke-width="0.9"/><line x1="651.7" y1="431.04" x2="792.2" y2="431.04" stroke="#5a4c4c" stroke-width="0.9"/><line x1="651.7" y1="436.08" x2="792.2" y2="436.08" stroke="#5a4c4c" stroke-width="0.9"/><line x1="651.7" y1="441.12" x2="792.2" y2="441.12" stroke="#5a4c4c" stroke-width="0.9"/><line x1="651.7" y1="446.16" x2="792.2" y2="446.16" stroke="#5a4c4c" stroke-width="0.9"/><clipPath id="c3_3"><rect x="651.7" y="400.8" width="140.5" height="50.4"/></clipPath><g clip-path="url(#c3_3)"><polyline points="651.7,419.8 652.4,420.2 653.1,421.0 653.8,422.0 654.5,423.3 655.2,424.6 655.9,426.1 656.6,427.5 657.3,428.7 658.0,429.8 658.7,430.7 659.4,431.3 660.1,431.7 660.8,431.8 661.5,431.7 662.2,431.4 662.9,430.9 663.6,430.3 664.3,429.6 665.0,428.9 665.8,428.2 666.5,427.5 667.2,426.8 667.9,426.0 668.6,425.3 669.3,424.6 670.0,423.9 670.7,423.1 671.4,422.4 672.1,421.6 672.8,421.0 673.5,420.4 674.2,419.9 674.9,419.6 675.6,419.5 676.3,419.6 677.0,419.9 677.7,420.4 678.4,421.1 679.1,422.0 679.8,423.1 680.5,424.2 681.2,425.4 681.9,426.5 682.6,427.5 683.3,428.4 684.0,429.1 684.7,429.7 685.4,430.0 686.1,430.1 686.8,430.0 687.5,429.7 688.2,429.3 688.9,428.8 689.6,428.3 690.3,427.7 691.0,427.1 691.7,426.6 692.4,426.1 693.1,425.7 693.9,425.3 694.6,425.1 695.3,424.9 696.0,424.7 696.7,424.6 697.4,424.6 698.1,424.6 698.8,424.6 699.5,424.7 700.2,424.7 700.9,424.8 701.6,424.9 702.3,425.1 703.0,425.2 703.7,425.4 704.4,425.6 705.1,425.8 705.8,426.0 706.5,426.3 707.2,426.6 707.9,427.0 708.6,427.3 709.3,427.7 710.0,428.1 710.7,428.5 711.4,428.9 712.1,429.2 712.8,429.5 713.5,429.8 714.2,429.9 714.9,430.0 715.6,429.9 716.3,429.8 717.0,429.5 717.7,429.1 718.4,428.6 719.1,428.0 719.8,427.3 720.5,426.6 721.2,425.9 722.0,425.3 722.7,424.6 723.4,424.1 724.1,423.6 724.8,423.3 725.5,423.0 726.2,422.8 726.9,422.7 727.6,422.6 728.3,422.6 729.0,422.6 729.7,422.7 730.4,422.7 731.1,422.8 731.8,423.0 732.5,423.1 733.2,423.4 733.9,423.7 734.6,424.2 735.3,424.7 736.0,425.4 736.7,426.1 737.4,426.9 738.1,427.7 738.8,428.4 739.5,429.1 740.2,429.6 740.9,429.9 741.6,430.0 742.3,429.8 743.0,429.4 743.7,428.8 744.4,427.9 745.1,426.9 745.8,425.7 746.5,424.5 747.2,423.4 747.9,422.4 748.6,421.6 749.3,421.0 750.1,420.6 750.8,420.5 751.5,420.7 752.2,421.2 752.9,421.8 753.6,422.6 754.3,423.4 755.0,424.3 755.7,425.1 756.4,425.9 757.1,426.6 757.8,427.2 758.5,427.7 759.2,428.1 759.9,428.4 760.6,428.7 761.3,429.0 762.0,429.2 762.7,429.5 763.4,429.8 764.1,430.0 764.8,430.2 765.5,430.4 766.2,430.4 766.9,430.4 767.6,430.1 768.3,429.7 769.0,429.1 769.7,428.4 770.4,427.5 771.1,426.6 771.8,425.6 772.5,424.7 773.2,423.9 773.9,423.2 774.6,422.8 775.3,422.6 776.0,422.6 776.7,422.9 777.4,423.5 778.2,424.1 778.9,425.0 779.6,425.8 780.3,426.7 781.0,427.4 781.7,428.0 782.4,428.5 783.1,428.7 783.8,428.7 784.5,428.5 785.2,428.2 785.9,427.8 786.6,427.2 787.3,426.7 788.0,426.2 788.7,425.7 789.4,425.3 790.1,425.0 790.8,424.8 791.5,424.8 792.2,424.7" fill="none" stroke="#4a90b0" stroke-width="1.1"/><polyline points="651.7,415.8 652.4,417.2 653.1,418.8 653.8,420.5 654.5,422.2 655.2,423.8 655.9,425.2 656.6,426.3 657.3,427.2 658.0,427.9 658.7,428.3 659.4,428.7 660.1,429.1 660.8,429.5 661.5,430.0 662.2,430.7 662.9,431.4 663.6,432.3 664.3,433.2 665.0,434.0 665.8,434.7 666.5,435.2 667.2,435.3 667.9,435.1 668.6,434.4 669.3,433.4 670.0,432.0 670.7,430.4 671.4,428.6 672.1,426.8 672.8,425.1 673.5,423.7 674.2,422.6 674.9,421.8 675.6,421.5 676.3,421.6 677.0,421.9 677.7,422.6 678.4,423.3 679.1,424.1 679.8,424.9 680.5,425.4 681.2,425.8 681.9,425.9 682.6,425.8 683.3,425.5 684.0,425.1 684.7,424.7 685.4,424.4 686.1,424.2 686.8,424.2 687.5,424.5 688.2,425.0 688.9,425.8 689.6,426.8 690.3,427.9 691.0,428.9 691.7,429.9 692.4,430.7 693.1,431.2 693.9,431.4 694.6,431.4 695.3,431.1 696.0,430.5 696.7,429.9 697.4,429.2 698.1,428.5 698.8,428.1 699.5,427.8 700.2,427.7 700.9,427.9 701.6,428.3 702.3,428.8 703.0,429.4 703.7,429.8 704.4,430.2 705.1,430.3 705.8,430.0 706.5,429.4 707.2,428.5 707.9,427.2 708.6,425.7 709.3,424.0 710.0,422.3 710.7,420.7 711.4,419.3 712.1,418.1 712.8,417.3 713.5,416.8 714.2,416.8 714.9,417.0 715.6,417.5 716.3,418.1 717.0,418.9 717.7,419.6 718.4,420.3 719.1,421.0 719.8,421.4 720.5,421.8 721.2,422.2 722.0,422.5 722.7,422.9 723.4,423.4 724.1,424.1 724.8,425.0 725.5,426.1 726.2,427.4 726.9,428.8 727.6,430.3 728.3,431.7 729.0,433.0 729.7,433.9 730.4,434.6 731.1,434.7 731.8,434.5 732.5,433.8 733.2,432.6 733.9,431.2 734.6,429.5 735.3,427.7 736.0,425.9 736.7,424.2 737.4,422.8 738.1,421.6 738.8,420.7 739.5,420.1 740.2,419.8 740.9,419.7 741.6,419.8 742.3,419.9 743.0,420.1 743.7,420.3 744.4,420.4 745.1,420.5 745.8,420.5 746.5,420.5 747.2,420.6 747.9,420.8 748.6,421.1 749.3,421.7 750.1,422.5 750.8,423.6 751.5,424.9 752.2,426.3 752.9,427.9 753.6,429.5 754.3,431.0 755.0,432.3 755.7,433.3 756.4,434.0 757.1,434.4 757.8,434.4 758.5,434.0 759.2,433.4 759.9,432.6 760.6,431.8 761.3,430.9 762.0,430.1 762.7,429.4 763.4,429.0 764.1,428.7 764.8,428.7 765.5,428.8 766.2,429.0 766.9,429.2 767.6,429.3 768.3,429.4 769.0,429.2 769.7,428.9 770.4,428.3 771.1,427.6 771.8,426.8 772.5,425.9 773.2,425.0 773.9,424.1 774.6,423.4 775.3,422.9 776.0,422.6 776.7,422.6 777.4,422.7 778.2,423.0 778.9,423.3 779.6,423.7 780.3,424.1 781.0,424.4 781.7,424.6 782.4,424.6 783.1,424.5 783.8,424.3 784.5,424.1 785.2,423.8 785.9,423.7 786.6,423.7 787.3,423.9 788.0,424.3 788.7,425.0 789.4,425.9 790.1,426.9 790.8,428.1 791.5,429.4 792.2,430.6" fill="none" stroke="#c4bc6c" stroke-width="1.1"/></g><path d="M721 451.5 L722.2 455 L723.4 451.5" stroke="#808080" stroke-width="0.8" fill="none"/></svg>
<div class="t " style="left:665.00px;transform-origin:0 50%;top:457.47px;font-size:8.2px;line-height:10.66px;color:#2a2a2a;transform:scaleX(0.764);">Position:</div>
<div class="t i" style="left:694.00px;transform-origin:0 50%;top:457.47px;font-size:8.2px;line-height:10.66px;color:#2a2a2a;transform:scaleX(0.765);">-3.730 u</div>
<div class="t " style="left:728.00px;transform-origin:0 50%;top:457.47px;font-size:8.2px;line-height:10.66px;color:#2a2a2a;transform:scaleX(0.703);">Scale:</div>
<div class="t i" style="left:752.00px;transform-origin:0 50%;top:457.47px;font-size:8.2px;line-height:10.66px;color:#2a2a2a;transform:scaleX(0.796);">7.460 us</div>
<div class="t " style="left:607.00px;transform-origin:0 50%;top:467.35px;font-size:7px;line-height:9.10px;color:#505050;transform:scaleX(0.791);">Max:</div>
<div class="t " style="left:627.00px;transform-origin:0 50%;top:467.35px;font-size:7px;line-height:9.10px;color:#505050;transform:scaleX(0.767);">125.8 mV</div>
<div class="t " style="left:679.00px;transform-origin:0 50%;top:467.35px;font-size:7px;line-height:9.10px;color:#505050;transform:scaleX(0.857);">-760.0 ns</div>
<div class="t " style="left:708.00px;transform-origin:0 50%;top:467.35px;font-size:7px;line-height:9.10px;color:#505050;transform:scaleX(0.680);">Min:</div>
<div class="t " style="left:728.00px;transform-origin:0 50%;top:467.35px;font-size:7px;line-height:9.10px;color:#505050;transform:scaleX(0.805);">-141.0 mV</div>
<div class="t " style="left:778.00px;transform-origin:0 50%;top:467.35px;font-size:7px;line-height:9.10px;color:#505050;transform:scaleX(0.856);">580.0</div>
<div class="b" style="left:2.00px;top:478.50px;width:796.00px;height:1.50px;background:#b8b8b8;"></div>
<div class="b" style="left:0.00px;top:480.00px;width:800.00px;height:20.00px;background:#ffffff;"></div>
<div class="t " style="left:2.00px;transform-origin:0 50%;top:485.98px;font-size:8.5px;line-height:11.05px;color:#2a2a2a;transform:scaleX(0.880);">Spectrum</div>
<div class="t " style="left:60.50px;transform-origin:0 50%;top:485.98px;font-size:8.5px;line-height:11.05px;color:#2a2a2a;transform:scaleX(0.871);">Frequency</div>
<div class="b" style="left:98.70px;top:483.50px;width:48.80px;height:13.30px;background:#fff;border:1px solid #d0d0d0;"></div>
<div class="t " style="left:101.20px;transform-origin:0 50%;top:485.23px;font-size:8.5px;line-height:11.05px;color:#2a2a2a;transform:scaleX(0.861);">1.000 GHz</div>
<div class="t " style="left:255.50px;transform-origin:0 50%;top:485.98px;font-size:8.5px;line-height:11.05px;color:#2a2a2a;transform:scaleX(0.870);">Ref Lev</div>
<div class="b" style="left:285.00px;top:483.50px;width:48.00px;height:13.30px;background:#fff;border:1px solid #d0d0d0;"></div>
<div class="t " style="left:287.50px;transform-origin:0 50%;top:485.23px;font-size:8.5px;line-height:11.05px;color:#2a2a2a;transform:scaleX(0.879);">0.00 dBm</div>
<div class="t " style="left:450.00px;transform-origin:0 50%;top:485.98px;font-size:8.5px;line-height:11.05px;color:#2a2a2a;transform:scaleX(0.906);">Span</div>
<div class="b" style="left:470.00px;top:483.50px;width:49.00px;height:13.30px;background:#fff;border:1px solid #d0d0d0;"></div>
<div class="t " style="left:472.50px;transform-origin:0 50%;top:485.23px;font-size:8.5px;line-height:11.05px;color:#2a2a2a;transform:scaleX(0.851);">40.00 MHz</div>
<div class="t " style="left:626.00px;transform-origin:0 50%;top:485.98px;font-size:8.5px;line-height:11.05px;color:#2a2a2a;transform:scaleX(0.866);">Res BW</div>
<div class="b" style="left:656.00px;top:483.50px;width:48.50px;height:13.30px;background:#fff;border:1px solid #d0d0d0;"></div>
<div class="t i" style="left:658.50px;transform-origin:0 50%;top:485.23px;font-size:8.5px;line-height:11.05px;color:#2a2a2a;transform:scaleX(0.930);">300 kHz</div>
<div class="b" style="left:719.00px;top:484.00px;width:31.00px;height:13.50px;background:linear-gradient(#f8fcfe,#e4eef4);border:1px solid #9ab8c8;border-radius:1px;"></div>
<div class="t " style="left:634.50px;width:200px;text-align:center;transform-origin:50% 50%;top:485.93px;font-size:8.5px;line-height:11.05px;color:#2a2a2a;transform:scaleX(0.879);">Markers</div>
<div class="b" style="left:752.50px;top:484.00px;width:27.00px;height:13.50px;background:linear-gradient(#f8fcfe,#e4eef4);border:1px solid #9ab8c8;border-radius:1px;"></div>
<div class="t " style="left:666.00px;width:200px;text-align:center;transform-origin:50% 50%;top:485.93px;font-size:8.5px;line-height:11.05px;color:#2a2a2a;transform:scaleX(0.935);">Traces</div>
<div class="b" style="left:780.50px;top:483.50px;width:15.50px;height:14.50px;background:#e8f0f4;border:1px solid #a8c0cc;"></div>
<svg width="800" height="517"><polygon points="794.08,489.53 792.52,491.56 793.19,494.03 790.64,494.36 789.37,496.58 787.34,495.02 784.87,495.69 784.54,493.14 782.32,491.87 783.88,489.84 783.21,487.37 785.76,487.04 787.03,484.82 789.06,486.38 791.53,485.71 791.86,488.26" fill="#101010"/><circle cx="788.2" cy="490.7" r="2" fill="#e8f0f4"/></svg>
<div class="b" style="left:0.00px;top:500.00px;width:800.00px;height:17.00px;background:linear-gradient(#98b0c4 0,#c8d8e4 1.2px,#eef2f4 3px,#e6e8ea 100%);"></div>
<div class="b" style="left:51.00px;top:502.00px;width:1.00px;height:15.00px;background:#c4ccd4;"></div>
<div class="b" style="left:196.00px;top:502.00px;width:1.00px;height:15.00px;background:#c4ccd4;"></div>
<div class="b" style="left:231.00px;top:502.00px;width:1.00px;height:15.00px;background:#c4ccd4;"></div>
<div class="b" style="left:287.00px;top:502.00px;width:1.00px;height:15.00px;background:#c4ccd4;"></div>
<div class="b" style="left:322.00px;top:502.00px;width:1.00px;height:15.00px;background:#c4ccd4;"></div>
<div class="b" style="left:364.00px;top:502.00px;width:1.00px;height:15.00px;background:#c4ccd4;"></div>
<div class="b" style="left:406.00px;top:502.00px;width:1.00px;height:15.00px;background:#c4ccd4;"></div>
<div class="b" style="left:434.00px;top:502.00px;width:1.00px;height:15.00px;background:#c4ccd4;"></div>
<div class="t " style="left:5.00px;transform-origin:0 50%;top:504.12px;font-size:7.5px;line-height:9.75px;color:#2a2a2a;transform:scaleX(0.787);">Stopped</div>
<div class="t " style="left:54.00px;transform-origin:0 50%;top:503.82px;font-size:7.5px;line-height:9.75px;color:#2a2a2a;transform:scaleX(0.803);">Acq BW: 40.00 MHz, Acq Length: 8.654 us</div>
<div class="t " style="left:197.50px;transform-origin:0 50%;top:503.82px;font-size:7.5px;line-height:9.75px;color:#2a2a2a;transform:scaleX(0.859);">Real Time</div>
<div class="t " style="left:234.00px;transform-origin:0 50%;top:503.82px;font-size:7.5px;line-height:9.75px;color:#2a2a2a;transform:scaleX(0.832);">Free Run</div>
<svg width="800" height="517"><path d="M786 512.5 Q786.5 506 793 505 Q793 511 786 512.5 Z" fill="#50a050"/><path d="M786 512.5 L791 507" stroke="#d8f0d8" stroke-width="0.5"/></svg><svg width="800" height="517"><circle cx="83.50" cy="149.00" r="1.5" fill="#585858"/><circle cx="83.50" cy="149.00" r="0.6" fill="#b0b0b0"/><circle cx="130.00" cy="149.00" r="1.5" fill="#585858"/><circle cx="130.00" cy="149.00" r="0.6" fill="#b0b0b0"/><circle cx="282.83" cy="149.00" r="1.5" fill="#585858"/><circle cx="282.83" cy="149.00" r="0.6" fill="#b0b0b0"/><circle cx="329.33" cy="149.00" r="1.5" fill="#585858"/><circle cx="329.33" cy="149.00" r="0.6" fill="#b0b0b0"/><circle cx="482.17" cy="149.00" r="1.5" fill="#585858"/><circle cx="482.17" cy="149.00" r="0.6" fill="#b0b0b0"/><circle cx="528.67" cy="149.00" r="1.5" fill="#585858"/><circle cx="528.67" cy="149.00" r="0.6" fill="#b0b0b0"/><circle cx="681.50" cy="149.00" r="1.5" fill="#585858"/><circle cx="681.50" cy="149.00" r="0.6" fill="#b0b0b0"/><circle cx="728.00" cy="149.00" r="1.5" fill="#585858"/><circle cx="728.00" cy="149.00" r="0.6" fill="#b0b0b0"/><circle cx="5.50" cy="188.50" r="1.5" fill="#585858"/><circle cx="5.50" cy="188.50" r="0.6" fill="#b0b0b0"/><circle cx="5.50" cy="230.00" r="1.5" fill="#585858"/><circle cx="5.50" cy="230.00" r="0.6" fill="#b0b0b0"/><circle cx="78.00" cy="253.20" r="1.5" fill="#585858"/><circle cx="78.00" cy="253.20" r="0.6" fill="#b0b0b0"/><circle cx="109.00" cy="253.20" r="1.5" fill="#585858"/><circle cx="109.00" cy="253.20" r="0.6" fill="#b0b0b0"/><circle cx="204.83" cy="188.50" r="1.5" fill="#585858"/><circle cx="204.83" cy="188.50" r="0.6" fill="#b0b0b0"/><circle cx="204.83" cy="230.00" r="1.5" fill="#585858"/><circle cx="204.83" cy="230.00" r="0.6" fill="#b0b0b0"/><circle cx="277.33" cy="253.20" r="1.5" fill="#585858"/><circle cx="277.33" cy="253.20" r="0.6" fill="#b0b0b0"/><circle cx="308.33" cy="253.20" r="1.5" fill="#585858"/><circle cx="308.33" cy="253.20" r="0.6" fill="#b0b0b0"/><circle cx="404.17" cy="188.50" r="1.5" fill="#585858"/><circle cx="404.17" cy="188.50" r="0.6" fill="#b0b0b0"/><circle cx="404.17" cy="230.00" r="1.5" fill="#585858"/><circle cx="404.17" cy="230.00" r="0.6" fill="#b0b0b0"/><circle cx="476.67" cy="253.20" r="1.5" fill="#585858"/><circle cx="476.67" cy="253.20" r="0.6" fill="#b0b0b0"/><circle cx="507.67" cy="253.20" r="1.5" fill="#585858"/><circle cx="507.67" cy="253.20" r="0.6" fill="#b0b0b0"/><circle cx="603.50" cy="188.50" r="1.5" fill="#585858"/><circle cx="603.50" cy="188.50" r="0.6" fill="#b0b0b0"/><circle cx="603.50" cy="230.00" r="1.5" fill="#585858"/><circle cx="603.50" cy="230.00" r="0.6" fill="#b0b0b0"/><circle cx="676.00" cy="253.20" r="1.5" fill="#585858"/><circle cx="676.00" cy="253.20" r="0.6" fill="#b0b0b0"/><circle cx="707.00" cy="253.20" r="1.5" fill="#585858"/><circle cx="707.00" cy="253.20" r="0.6" fill="#b0b0b0"/><circle cx="7.00" cy="301.00" r="1.5" fill="#585858"/><circle cx="7.00" cy="301.00" r="0.6" fill="#b0b0b0"/><circle cx="7.00" cy="321.00" r="1.5" fill="#585858"/><circle cx="7.00" cy="321.00" r="0.6" fill="#b0b0b0"/><circle cx="7.00" cy="343.00" r="1.5" fill="#585858"/><circle cx="7.00" cy="343.00" r="0.6" fill="#b0b0b0"/><circle cx="77.50" cy="362.20" r="1.5" fill="#585858"/><circle cx="77.50" cy="362.20" r="0.6" fill="#b0b0b0"/><circle cx="132.00" cy="362.20" r="1.5" fill="#585858"/><circle cx="132.00" cy="362.20" r="0.6" fill="#b0b0b0"/><circle cx="206.33" cy="301.00" r="1.5" fill="#585858"/><circle cx="206.33" cy="301.00" r="0.6" fill="#b0b0b0"/><circle cx="206.33" cy="321.00" r="1.5" fill="#585858"/><circle cx="206.33" cy="321.00" r="0.6" fill="#b0b0b0"/><circle cx="206.33" cy="343.00" r="1.5" fill="#585858"/><circle cx="206.33" cy="343.00" r="0.6" fill="#b0b0b0"/><circle cx="276.83" cy="362.20" r="1.5" fill="#585858"/><circle cx="276.83" cy="362.20" r="0.6" fill="#b0b0b0"/><circle cx="331.33" cy="362.20" r="1.5" fill="#585858"/><circle cx="331.33" cy="362.20" r="0.6" fill="#b0b0b0"/><circle cx="405.67" cy="301.00" r="1.5" fill="#585858"/><circle cx="405.67" cy="301.00" r="0.6" fill="#b0b0b0"/><circle cx="405.67" cy="321.00" r="1.5" fill="#585858"/><circle cx="405.67" cy="321.00" r="0.6" fill="#b0b0b0"/><circle cx="405.67" cy="343.00" r="1.5" fill="#585858"/><circle cx="405.67" cy="343.00" r="0.6" fill="#b0b0b0"/><circle cx="476.17" cy="362.20" r="1.5" fill="#585858"/><circle cx="476.17" cy="362.20" r="0.6" fill="#b0b0b0"/><circle cx="530.67" cy="362.20" r="1.5" fill="#585858"/><circle cx="530.67" cy="362.20" r="0.6" fill="#b0b0b0"/><circle cx="605.00" cy="301.00" r="1.5" fill="#585858"/><circle cx="605.00" cy="301.00" r="0.6" fill="#b0b0b0"/><circle cx="605.00" cy="321.00" r="1.5" fill="#585858"/><circle cx="605.00" cy="321.00" r="0.6" fill="#b0b0b0"/><circle cx="605.00" cy="343.00" r="1.5" fill="#585858"/><circle cx="605.00" cy="343.00" r="0.6" fill="#b0b0b0"/><circle cx="675.50" cy="362.20" r="1.5" fill="#585858"/><circle cx="675.50" cy="362.20" r="0.6" fill="#b0b0b0"/><circle cx="727.50" cy="362.20" r="1.5" fill="#585858"/><circle cx="727.50" cy="362.20" r="0.6" fill="#b0b0b0"/><circle cx="7.00" cy="405.50" r="1.5" fill="#585858"/><circle cx="7.00" cy="405.50" r="0.6" fill="#b0b0b0"/><circle cx="7.00" cy="428.00" r="1.5" fill="#585858"/><circle cx="7.00" cy="428.00" r="0.6" fill="#b0b0b0"/><circle cx="61.00" cy="461.90" r="1.5" fill="#585858"/><circle cx="61.00" cy="461.90" r="0.6" fill="#b0b0b0"/><circle cx="121.50" cy="461.90" r="1.5" fill="#585858"/><circle cx="121.50" cy="461.90" r="0.6" fill="#b0b0b0"/><circle cx="73.00" cy="471.00" r="1.5" fill="#606060"/><circle cx="73.00" cy="471.00" r="0.6" fill="#b0b0b0"/><circle cx="174.00" cy="471.00" r="1.5" fill="#606060"/><circle cx="174.00" cy="471.00" r="0.6" fill="#b0b0b0"/><circle cx="206.33" cy="405.50" r="1.5" fill="#585858"/><circle cx="206.33" cy="405.50" r="0.6" fill="#b0b0b0"/><circle cx="206.33" cy="428.00" r="1.5" fill="#585858"/><circle cx="206.33" cy="428.00" r="0.6" fill="#b0b0b0"/><circle cx="260.33" cy="461.90" r="1.5" fill="#585858"/><circle cx="260.33" cy="461.90" r="0.6" fill="#b0b0b0"/><circle cx="320.83" cy="461.90" r="1.5" fill="#585858"/><circle cx="320.83" cy="461.90" r="0.6" fill="#b0b0b0"/><circle cx="272.33" cy="471.00" r="1.5" fill="#606060"/><circle cx="272.33" cy="471.00" r="0.6" fill="#b0b0b0"/><circle cx="373.33" cy="471.00" r="1.5" fill="#606060"/><circle cx="373.33" cy="471.00" r="0.6" fill="#b0b0b0"/><circle cx="405.67" cy="405.50" r="1.5" fill="#585858"/><circle cx="405.67" cy="405.50" r="0.6" fill="#b0b0b0"/><circle cx="405.67" cy="428.00" r="1.5" fill="#585858"/><circle cx="405.67" cy="428.00" r="0.6" fill="#b0b0b0"/><circle cx="459.67" cy="461.90" r="1.5" fill="#585858"/><circle cx="459.67" cy="461.90" r="0.6" fill="#b0b0b0"/><circle cx="520.17" cy="461.90" r="1.5" fill="#585858"/><circle cx="520.17" cy="461.90" r="0.6" fill="#b0b0b0"/><circle cx="471.67" cy="471.00" r="1.5" fill="#606060"/><circle cx="471.67" cy="471.00" r="0.6" fill="#b0b0b0"/><circle cx="572.67" cy="471.00" r="1.5" fill="#606060"/><circle cx="572.67" cy="471.00" r="0.6" fill="#b0b0b0"/><circle cx="605.00" cy="405.50" r="1.5" fill="#585858"/><circle cx="605.00" cy="405.50" r="0.6" fill="#b0b0b0"/><circle cx="605.00" cy="428.00" r="1.5" fill="#585858"/><circle cx="605.00" cy="428.00" r="0.6" fill="#b0b0b0"/><circle cx="659.00" cy="461.90" r="1.5" fill="#585858"/><circle cx="659.00" cy="461.90" r="0.6" fill="#b0b0b0"/><circle cx="719.50" cy="461.90" r="1.5" fill="#585858"/><circle cx="719.50" cy="461.90" r="0.6" fill="#b0b0b0"/><circle cx="671.00" cy="471.00" r="1.5" fill="#606060"/><circle cx="671.00" cy="471.00" r="0.6" fill="#b0b0b0"/><circle cx="772.00" cy="471.00" r="1.5" fill="#606060"/><circle cx="772.00" cy="471.00" r="0.6" fill="#b0b0b0"/></svg></div></body></html>
